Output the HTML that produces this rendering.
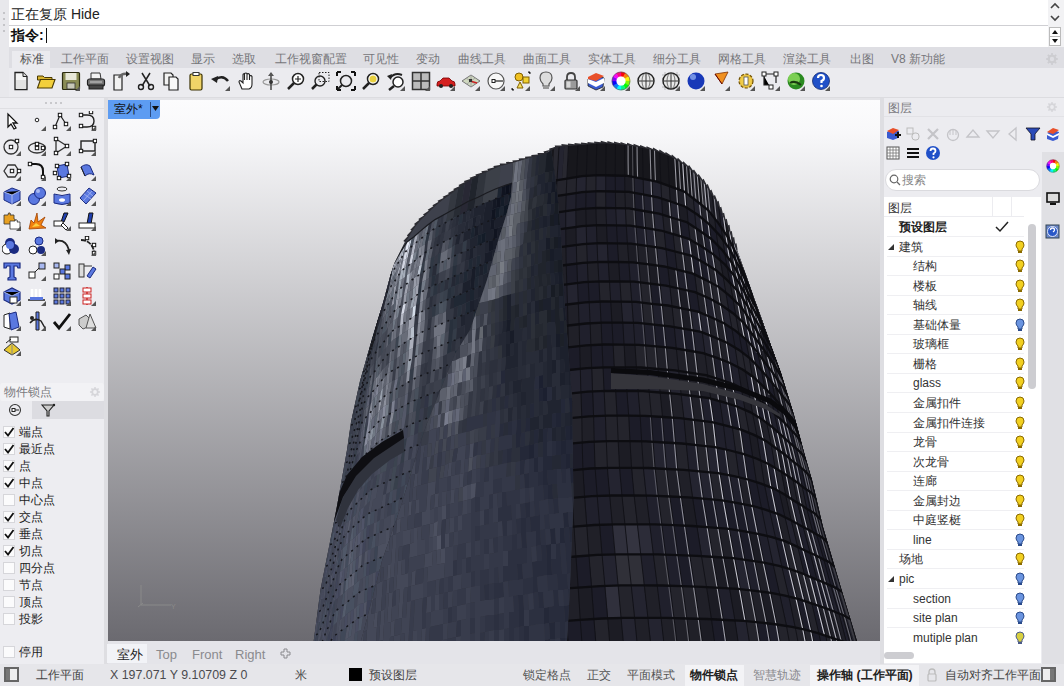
<!DOCTYPE html>
<html><head><meta charset="utf-8">
<style>
*{margin:0;padding:0;box-sizing:border-box}
html,body{width:1064px;height:686px;overflow:hidden;background:#ececf0;font-family:"Liberation Sans",sans-serif;font-size:12px;color:#222}
.a{position:absolute}
.t{position:absolute;white-space:nowrap;line-height:1}
.tab{position:absolute;top:53px;font-size:12px;color:#76767a;line-height:1;white-space:nowrap}
.st{position:absolute;top:669px;font-size:12.4px;color:#333;line-height:1;white-space:nowrap}
.lt{position:absolute;font-size:12px;color:#333;line-height:1;white-space:nowrap}
.sn{position:absolute;left:19px;font-size:12px;line-height:1;color:#222;white-space:nowrap}
.cb{position:absolute;left:3px;width:12px;height:12px;background:#fbfbfc;border:1px solid #d6d6da}
</style></head><body>

<div class="a" style="left:0;top:0;width:9px;height:98px;background:#e8e8ec"></div>
<div class="a" style="left:3px;top:12px;width:2px;height:2px;background:#c4c4c8"></div>
<div class="a" style="left:3px;top:18px;width:2px;height:2px;background:#c4c4c8"></div>
<div class="a" style="left:3px;top:24px;width:2px;height:2px;background:#c4c4c8"></div>
<div class="a" style="left:3px;top:30px;width:2px;height:2px;background:#c4c4c8"></div>
<div class="a" style="left:3px;top:66px;width:2px;height:2px;background:#c4c4c8"></div>
<div class="a" style="left:3px;top:72px;width:2px;height:2px;background:#c4c4c8"></div>
<div class="a" style="left:3px;top:78px;width:2px;height:2px;background:#c4c4c8"></div>
<div class="a" style="left:3px;top:84px;width:2px;height:2px;background:#c4c4c8"></div>
<div class="a" style="left:9px;top:0;width:1039px;height:25px;background:#fff"></div>
<div class="a" style="left:9px;top:25px;width:1039px;height:1px;background:#cfcfd3"></div>
<div class="a" style="left:9px;top:26px;width:1039px;height:21px;background:#fff"></div>
<div class="t" style="left:11px;top:7px;font-size:14px;color:#222">正在复原 Hide</div>
<div class="t" style="left:11px;top:28px;font-size:14px;font-weight:bold;color:#111">指令:</div>
<div class="a" style="left:46px;top:28px;width:1px;height:15px;background:#111"></div>
<div class="a" style="left:1048px;top:0;width:16px;height:47px;background:#f2f2f4"></div>
<svg class="a" style="left:1048px;top:0" width="16" height="47" viewBox="0 0 16 47"><path d="M3 8L7 4L11 8M3 16L7 20L11 16" stroke="#444" stroke-width="1.6" fill="none"/><rect x="1.5" y="27.5" width="11" height="9" fill="#fff" stroke="#bbb"/><rect x="1.5" y="36.5" width="11" height="9" fill="#fff" stroke="#bbb"/><path d="M4 34L7 30L10 34Z" fill="#111"/><path d="M4 39L7 43L10 39Z" fill="#111"/></svg>
<div class="a" style="left:9px;top:47px;width:1055px;height:21px;background:#dedee3"></div>
<div class="a" style="left:0;top:47px;width:9px;height:51px;background:#e8e8ec"></div>
<div class="a" style="left:12px;top:51px;width:38px;height:17px;background:#ebebef"></div>
<div class="tab" style="left:20px;color:#555">标准</div>
<div class="tab" style="left:61px;color:#76767a">工作平面</div>
<div class="tab" style="left:126px;color:#76767a">设置视图</div>
<div class="tab" style="left:191px;color:#76767a">显示</div>
<div class="tab" style="left:232px;color:#76767a">选取</div>
<div class="tab" style="left:275px;color:#76767a">工作视窗配置</div>
<div class="tab" style="left:363px;color:#76767a">可见性</div>
<div class="tab" style="left:416px;color:#76767a">变动</div>
<div class="tab" style="left:458px;color:#76767a">曲线工具</div>
<div class="tab" style="left:523px;color:#76767a">曲面工具</div>
<div class="tab" style="left:588px;color:#76767a">实体工具</div>
<div class="tab" style="left:653px;color:#76767a">细分工具</div>
<div class="tab" style="left:718px;color:#76767a">网格工具</div>
<div class="tab" style="left:783px;color:#76767a">渲染工具</div>
<div class="tab" style="left:850px;color:#76767a">出图</div>
<div class="tab" style="left:891px;color:#76767a">V8 新功能</div>
<svg class="a" style="left:1045px;top:52px" width="14" height="14" viewBox="0 0 14 14"><path d="M11.3 6.1L12.9 6.2L12.9 7.8L11.3 7.9L10.7 9.4L11.8 10.6L10.6 11.8L9.4 10.7L7.9 11.3L7.8 12.9L6.2 12.9L6.1 11.3L4.6 10.7L3.4 11.8L2.2 10.6L3.3 9.4L2.7 7.9L1.1 7.8L1.1 6.2L2.7 6.1L3.3 4.6L2.2 3.4L3.4 2.2L4.6 3.3L6.1 2.7L6.2 1.1L7.8 1.1L7.9 2.7L9.4 3.3L10.6 2.2L11.8 3.4L10.7 4.6ZM9.2 7A2.2 2.2 0 1 0 4.8 7A2.2 2.2 0 1 0 9.2 7Z" fill="#cdcdd1" fill-rule="evenodd"/></svg>
<div class="a" style="left:9px;top:68px;width:1055px;height:29px;background:#ebebef"></div>
<div class="a" style="left:0;top:97px;width:1064px;height:1px;background:#dcdce0"></div>
<svg class="a" style="left:11px;top:71px" width="20" height="20" viewBox="0 0 20 20"><path d="M4 1.5H12L16 5.5V18.5H4Z" fill="#f4f4f4" stroke="#222" stroke-width="1.3"/><path d="M12 1.5V5.5H16" fill="#ddd" stroke="#222" stroke-width="1"/><path d="M5 9H15V18H5Z" fill="#e2e2e2"/></svg>
<svg class="a" style="left:36px;top:71px" width="20" height="20" viewBox="0 0 20 20"><path d="M1.5 5H7L8.5 6.5H16V9H1.5Z" fill="#d9b530" stroke="#4a3a00" stroke-width="1"/><path d="M1.5 17L4.5 8.5H19L16 17Z" fill="#f2cf3c" stroke="#4a3a00" stroke-width="1.1"/></svg>
<svg class="a" style="left:61px;top:71px" width="20" height="20" viewBox="0 0 20 20"><rect x="1.5" y="1.5" width="17" height="17" rx="1" fill="#8a8c55" stroke="#2a2a10" stroke-width="1.2"/><rect x="4.5" y="2" width="11" height="7" fill="#e8e8d8"/><rect x="6" y="12" width="8" height="6" fill="#c8c8b8" stroke="#333" stroke-width=".8"/><path d="M19 15L19 20L14 20Z" fill="#555"/></svg>
<svg class="a" style="left:86px;top:71px" width="20" height="20" viewBox="0 0 20 20"><path d="M5 2H14L15 8H5Z" fill="#f4f4f4" stroke="#333" stroke-width="1"/><rect x="1.5" y="8" width="17" height="7" rx="2" fill="#777" stroke="#222" stroke-width="1.2"/><rect x="3" y="14" width="14" height="4" fill="#444" stroke="#222" stroke-width="1"/><path d="M4 11H16" stroke="#ccc" stroke-width="1"/></svg>
<svg class="a" style="left:111px;top:71px" width="20" height="20" viewBox="0 0 20 20"><path d="M3 4H11V19H3Z" fill="#f2f2f2" stroke="#222" stroke-width="1.2"/><path d="M8 7Q10 2 17 3" stroke="#666" stroke-width="2.5" fill="none"/><path d="M15 0L19 3L15 6Z" fill="#222"/></svg>
<svg class="a" style="left:136px;top:71px" width="20" height="20" viewBox="0 0 20 20"><path d="M6 2L14 15M14 2L6 15" stroke="#222" stroke-width="1.5"/><circle cx="5" cy="16" r="2.5" fill="none" stroke="#222" stroke-width="1.4"/><circle cx="15" cy="16" r="2.5" fill="none" stroke="#222" stroke-width="1.4"/></svg>
<svg class="a" style="left:161px;top:71px" width="20" height="20" viewBox="0 0 20 20"><path d="M3 2H10L12 4V14H3Z" fill="#f2f2f2" stroke="#222" stroke-width="1.2"/><path d="M8 6H15L17 8V19H8Z" fill="#f8f8f8" stroke="#222" stroke-width="1.2"/></svg>
<svg class="a" style="left:186px;top:71px" width="20" height="20" viewBox="0 0 20 20"><rect x="4" y="3" width="12" height="16" rx="1.5" fill="#f0d468" stroke="#3a3000" stroke-width="1.2"/><rect x="7" y="1.5" width="6" height="3" fill="#fff" stroke="#333" stroke-width="1"/></svg>
<svg class="a" style="left:211px;top:71px" width="20" height="20" viewBox="0 0 20 20"><path d="M4 9Q11 3 17 10" stroke="#222" stroke-width="2.6" fill="none"/><path d="M0 8L7 5L6 12Z" fill="#222"/><path d="M19 15L19 20L14 20Z" fill="#555"/></svg>
<svg class="a" style="left:236px;top:71px" width="20" height="20" viewBox="0 0 20 20"><path d="M6 18L3 11Q3 9 5 10L7 12V4Q7 2.5 8.5 3V9V2.5Q10 1.5 11 2.5V9V3Q12.5 2 13.5 3.5V9V5Q15 4 16 5.5V13Q16 17 13 18Z" fill="#fff" stroke="#222" stroke-width="1.1"/></svg>
<svg class="a" style="left:261px;top:71px" width="20" height="20" viewBox="0 0 20 20"><ellipse cx="10" cy="11" rx="8" ry="3" fill="none" stroke="#999" stroke-width="1.2"/><path d="M10 2V19" stroke="#444" stroke-width="1.5"/><path d="M7 5L10 1L13 5Z" fill="#555"/><circle cx="10" cy="11" r="2" fill="#333"/></svg>
<svg class="a" style="left:286px;top:71px" width="20" height="20" viewBox="0 0 20 20"><circle cx="12" cy="8" r="5.5" fill="#fff" stroke="#222" stroke-width="1.5"/><path d="M8 12L2 18" stroke="#222" stroke-width="2.5"/><path d="M12 5V11M9 8H15" stroke="#222" stroke-width="1.2"/></svg>
<svg class="a" style="left:311px;top:71px" width="20" height="20" viewBox="0 0 20 20"><rect x="8" y="1.5" width="10" height="9" fill="none" stroke="#222" stroke-dasharray="1.5 1.5"/><circle cx="9" cy="10" r="5" fill="none" stroke="#222" stroke-width="1.4"/><path d="M5.5 13.5L1 18" stroke="#222" stroke-width="2.5"/></svg>
<svg class="a" style="left:336px;top:71px" width="20" height="20" viewBox="0 0 20 20"><circle cx="10" cy="10" r="5.5" fill="none" stroke="#222" stroke-width="1.5"/><path d="M1 1H5M1 1V5M19 1H15M19 1V5M1 19H5M1 19V15M19 19H15M19 19V15" stroke="#111" stroke-width="2"/><path d="M6 14L2 18" stroke="#222" stroke-width="2"/></svg>
<svg class="a" style="left:361px;top:71px" width="20" height="20" viewBox="0 0 20 20"><circle cx="12" cy="8" r="5.5" fill="#fff" stroke="#222" stroke-width="1.5"/><path d="M8 12L2 18" stroke="#222" stroke-width="2.5"/><circle cx="12" cy="8" r="3.5" fill="#e8d040"/></svg>
<svg class="a" style="left:386px;top:71px" width="20" height="20" viewBox="0 0 20 20"><circle cx="12" cy="11" r="5" fill="#fff" stroke="#222" stroke-width="1.5"/><path d="M8 15L3 19" stroke="#222" stroke-width="2.5"/><path d="M4 7Q9 1 16 4" stroke="#222" stroke-width="2" fill="none"/><path d="M1 5L6 3L5 9Z" fill="#222"/><path d="M19 15L19 20L14 20Z" fill="#555"/></svg>
<svg class="a" style="left:411px;top:71px" width="20" height="20" viewBox="0 0 20 20"><rect x="1.5" y="1.5" width="17" height="17" fill="#bbb" stroke="#333" stroke-width="1.5"/><path d="M10 1.5V18.5M1.5 10H18.5" stroke="#333" stroke-width="1.5"/><path d="M19 15L19 20L14 20Z" fill="#555"/></svg>
<svg class="a" style="left:436px;top:71px" width="20" height="20" viewBox="0 0 20 20"><path d="M1 13Q1 10 4 10L7 7H13L16 10Q19 10 19 13V15H1Z" fill="#d42020" stroke="#700" stroke-width=".8"/><circle cx="5" cy="15" r="2" fill="#222"/><circle cx="15" cy="15" r="2" fill="#222"/><path d="M19 15L19 20L14 20Z" fill="#555"/></svg>
<svg class="a" style="left:461px;top:71px" width="20" height="20" viewBox="0 0 20 20"><path d="M1 10L10 4L19 10L10 16Z" fill="#cfd8c0" stroke="#777" stroke-width="1"/><path d="M5 7L14 13M10 4L10 16M14 7L6 13" stroke="#999" stroke-width=".8"/><path d="M9 10L16 12" stroke="#c22" stroke-width="1.5"/><rect x="8" y="8" width="3" height="3" fill="#333"/><path d="M19 15L19 20L14 20Z" fill="#555"/></svg>
<svg class="a" style="left:486px;top:71px" width="20" height="20" viewBox="0 0 20 20"><circle cx="10" cy="10" r="8" fill="#f8f8f8" stroke="#555" stroke-width="1.2"/><rect x="6" y="8.5" width="3" height="3" fill="#fff" stroke="#222"/><path d="M9 10H17" stroke="#222" stroke-width="1.2"/><path d="M19 15L19 20L14 20Z" fill="#555"/></svg>
<svg class="a" style="left:511px;top:71px" width="20" height="20" viewBox="0 0 20 20"><circle cx="8" cy="6" r="4" fill="#f0c020" stroke="#806000"/><rect x="12" y="6" width="6" height="6" fill="#f0d030" stroke="#806000"/><path d="M9 11L12 17H6Z" fill="#f8e060" stroke="#806000"/><path d="M17 1H19V3M1 17V19H3" stroke="#222"/><path d="M19 15L19 20L14 20Z" fill="#555"/></svg>
<svg class="a" style="left:536px;top:71px" width="20" height="20" viewBox="0 0 20 20"><path d="M10 1Q16 1 16 7Q16 10 13 13V15H7V13Q4 10 4 7Q4 1 10 1Z" fill="#ddd" stroke="#555" stroke-width="1.2"/><rect x="7" y="15" width="6" height="3" fill="#999"/><path d="M19 15L19 20L14 20Z" fill="#555"/></svg>
<svg class="a" style="left:561px;top:71px" width="20" height="20" viewBox="0 0 20 20"><path d="M6 9V6Q6 2 10 2Q14 2 14 6V9" fill="none" stroke="#444" stroke-width="1.8"/><rect x="4" y="9" width="12" height="9" rx="1" fill="#9a9a9a" stroke="#333" stroke-width="1.2"/><rect x="5.5" y="10.5" width="4" height="6" fill="#d8d8d8"/><path d="M19 15L19 20L14 20Z" fill="#555"/></svg>
<svg class="a" style="left:586px;top:71px" width="20" height="20" viewBox="0 0 20 20"><path d="M2 8L10 4L18 7L17 16L10 19L2 15Z" fill="#3a5bd0" stroke="#222" stroke-width=".8"/><path d="M2 8L10 11L18 7V12L10 16L2 12Z" fill="#fff"/><path d="M2 6L10 2L18 5L10 10L2 8Z" fill="#e8502a"/><path d="M19 15L19 20L14 20Z" fill="#555"/></svg>
<svg class="a" style="left:611px;top:71px" width="20" height="20" viewBox="0 0 20 20"><path d="M10.00 1.00A9 9 0 0 1 14.50 2.21L12.25 6.10A4.5 4.5 0 0 0 10.00 5.50Z" fill="hsl(0,95%,50%)" stroke="hsl(0,95%,50%)" stroke-width=".4"/><path d="M14.50 2.21A9 9 0 0 1 17.79 5.50L13.90 7.75A4.5 4.5 0 0 0 12.25 6.10Z" fill="hsl(30,95%,50%)" stroke="hsl(30,95%,50%)" stroke-width=".4"/><path d="M17.79 5.50A9 9 0 0 1 19.00 10.00L14.50 10.00A4.5 4.5 0 0 0 13.90 7.75Z" fill="hsl(60,95%,50%)" stroke="hsl(60,95%,50%)" stroke-width=".4"/><path d="M19.00 10.00A9 9 0 0 1 17.79 14.50L13.90 12.25A4.5 4.5 0 0 0 14.50 10.00Z" fill="hsl(90,95%,50%)" stroke="hsl(90,95%,50%)" stroke-width=".4"/><path d="M17.79 14.50A9 9 0 0 1 14.50 17.79L12.25 13.90A4.5 4.5 0 0 0 13.90 12.25Z" fill="hsl(120,95%,50%)" stroke="hsl(120,95%,50%)" stroke-width=".4"/><path d="M14.50 17.79A9 9 0 0 1 10.00 19.00L10.00 14.50A4.5 4.5 0 0 0 12.25 13.90Z" fill="hsl(150,95%,50%)" stroke="hsl(150,95%,50%)" stroke-width=".4"/><path d="M10.00 19.00A9 9 0 0 1 5.50 17.79L7.75 13.90A4.5 4.5 0 0 0 10.00 14.50Z" fill="hsl(180,95%,50%)" stroke="hsl(180,95%,50%)" stroke-width=".4"/><path d="M5.50 17.79A9 9 0 0 1 2.21 14.50L6.10 12.25A4.5 4.5 0 0 0 7.75 13.90Z" fill="hsl(210,95%,50%)" stroke="hsl(210,95%,50%)" stroke-width=".4"/><path d="M2.21 14.50A9 9 0 0 1 1.00 10.00L5.50 10.00A4.5 4.5 0 0 0 6.10 12.25Z" fill="hsl(240,95%,50%)" stroke="hsl(240,95%,50%)" stroke-width=".4"/><path d="M1.00 10.00A9 9 0 0 1 2.21 5.50L6.10 7.75A4.5 4.5 0 0 0 5.50 10.00Z" fill="hsl(270,95%,50%)" stroke="hsl(270,95%,50%)" stroke-width=".4"/><path d="M2.21 5.50A9 9 0 0 1 5.50 2.21L7.75 6.10A4.5 4.5 0 0 0 6.10 7.75Z" fill="hsl(300,95%,50%)" stroke="hsl(300,95%,50%)" stroke-width=".4"/><path d="M5.50 2.21A9 9 0 0 1 10.00 1.00L10.00 5.50A4.5 4.5 0 0 0 7.75 6.10Z" fill="hsl(330,95%,50%)" stroke="hsl(330,95%,50%)" stroke-width=".4"/><circle cx="10" cy="10" r="4.5" fill="#fff"/><circle cx="10" cy="10" r="9" fill="none" stroke="#555" stroke-width=".6"/><path d="M19 15L19 20L14 20Z" fill="#555"/></svg>
<svg class="a" style="left:636px;top:71px" width="20" height="20" viewBox="0 0 20 20"><circle cx="10" cy="10" r="8" fill="#e8e8e8" stroke="#222" stroke-width="1.4"/><path d="M2 10H18M10 2V18" stroke="#333" stroke-width="1"/><ellipse cx="10" cy="10" rx="4" ry="8" fill="none" stroke="#555" stroke-width=".8"/></svg>
<svg class="a" style="left:661px;top:71px" width="20" height="20" viewBox="0 0 20 20"><path d="M1 4H19M1 8H19M1 12H19M1 16H19M4 1V19M8 1V19M12 1V19M16 1V19" stroke="#999" stroke-width=".6"/><circle cx="10" cy="10" r="8" fill="#e8e8e8" stroke="#222" stroke-width="1.4"/><path d="M2 10H18M10 2V18" stroke="#333" stroke-width="1"/><ellipse cx="10" cy="10" rx="4" ry="8" fill="none" stroke="#555" stroke-width=".8"/><path d="M19 15L19 20L14 20Z" fill="#555"/></svg>
<svg class="a" style="left:686px;top:71px" width="20" height="20" viewBox="0 0 20 20"><circle cx="10" cy="10" r="8.5" fill="#1838b8"/><circle cx="7" cy="6" r="3" fill="#8aa8f0" opacity=".8"/><path d="M19 15L19 20L14 20Z" fill="#555"/></svg>
<svg class="a" style="left:711px;top:71px" width="20" height="20" viewBox="0 0 20 20"><path d="M4 3L17 1L11 13Z" fill="#f09020" stroke="#803000" stroke-width=".8"/><path d="M4 3L11 13" stroke="#600" stroke-width="1"/><path d="M19 15L19 20L14 20Z" fill="#555"/></svg>
<svg class="a" style="left:736px;top:71px" width="20" height="20" viewBox="0 0 20 20"><circle cx="10" cy="10" r="7" fill="#e8c040" stroke="#705000" stroke-width="1.2" stroke-dasharray="3 1.6"/><circle cx="10" cy="10" r="5.5" fill="#f0cc48"/><rect x="8" y="6" width="4" height="8" fill="#fff" stroke="#555" stroke-width=".8"/><path d="M19 15L19 20L14 20Z" fill="#555"/></svg>
<svg class="a" style="left:761px;top:71px" width="20" height="20" viewBox="0 0 20 20"><rect x="1" y="1" width="4" height="4" fill="#fff" stroke="#222"/><rect x="13" y="1" width="4" height="4" fill="#fff" stroke="#222"/><rect x="8" y="14" width="4" height="4" fill="#fff" stroke="#222"/><path d="M3 5V14H8M5 3H13M15 5V12" stroke="#222" stroke-width="1.2"/><path d="M19 15L19 20L14 20Z" fill="#555"/></svg>
<svg class="a" style="left:786px;top:71px" width="20" height="20" viewBox="0 0 20 20"><circle cx="10" cy="10" r="8.5" fill="#2a8a20"/><circle cx="8" cy="8" r="6" fill="#90e060" opacity=".8"/><path d="M4 12Q9 9 15 14" stroke="#1a3a10" stroke-width="2" fill="none"/><path d="M19 15L19 20L14 20Z" fill="#555"/></svg>
<svg class="a" style="left:811px;top:71px" width="20" height="20" viewBox="0 0 20 20"><circle cx="10" cy="10" r="8.5" fill="#2050c8" stroke="#102870" stroke-width=".8"/><path d="M7 7Q7 4 10 4Q13 4 13 7Q13 9 10.5 10V12" stroke="#fff" stroke-width="2.2" fill="none"/><circle cx="10.5" cy="15" r="1.3" fill="#fff"/><path d="M19 15L19 20L14 20Z" fill="#555"/></svg>
<div class="a" style="left:0;top:98px;width:104px;height:566px;background:#ededf1"></div>
<div class="a" style="left:104px;top:98px;width:4px;height:566px;background:#dedee2"></div>
<div class="a" style="left:45px;top:102px;width:2px;height:2px;background:#c8c8cc"></div>
<div class="a" style="left:50px;top:102px;width:2px;height:2px;background:#c8c8cc"></div>
<div class="a" style="left:55px;top:102px;width:2px;height:2px;background:#c8c8cc"></div>
<div class="a" style="left:60px;top:102px;width:2px;height:2px;background:#c8c8cc"></div>
<div class="a" style="left:0;top:108px;width:104px;height:1px;background:#dfdfe3"></div>
<svg class="a" style="left:2px;top:111px" width="20" height="20" viewBox="0 0 20 20"><path d="M6 3L6 16L9 13L12 18L14 17L11 12L15 12Z" fill="#fff" stroke="#111" stroke-width="1.3"/></svg>
<svg class="a" style="left:27px;top:111px" width="20" height="20" viewBox="0 0 20 20"><circle cx="10" cy="9" r="1.8" fill="#fff" stroke="#222" stroke-width="1"/><path d="M19 15L19 20L14 20Z" fill="#555"/></svg>
<svg class="a" style="left:52px;top:111px" width="20" height="20" viewBox="0 0 20 20"><path d="M3 16L8 4L14 13" fill="none" stroke="#222" stroke-width="1.2"/><rect x="1.3" y="14.3" width="3.4" height="3.4" fill="#fff" stroke="#111" stroke-width="1"/><rect x="6.3" y="2.3" width="3.4" height="3.4" fill="#fff" stroke="#111" stroke-width="1"/><rect x="12.3" y="11.3" width="3.4" height="3.4" fill="#fff" stroke="#111" stroke-width="1"/><path d="M19 15L19 20L14 20Z" fill="#555"/></svg>
<svg class="a" style="left:77px;top:111px" width="20" height="20" viewBox="0 0 20 20"><path d="M4 4H10Q17 4 17 10Q17 16 10 16H4" fill="none" stroke="#222" stroke-width="1.4"/><rect x="2.3" y="2.3" width="3.4" height="3.4" fill="#fff" stroke="#111" stroke-width="1"/><rect x="12.3" y="-0.7" width="3.4" height="3.4" fill="#fff" stroke="#111" stroke-width="1"/><rect x="2.3" y="13.3" width="3.4" height="3.4" fill="#fff" stroke="#111" stroke-width="1"/><rect x="15.3" y="15.3" width="3.4" height="3.4" fill="#fff" stroke="#111" stroke-width="1"/><path d="M19 15L19 20L14 20Z" fill="#555"/></svg>
<svg class="a" style="left:2px;top:136px" width="20" height="20" viewBox="0 0 20 20"><circle cx="9" cy="11" r="7" fill="none" stroke="#333" stroke-width="1.3"/><rect x="7.3" y="9.3" width="3.4" height="3.4" fill="#fff" stroke="#111" stroke-width="1"/><rect x="13.3" y="3.3" width="3.4" height="3.4" fill="#fff" stroke="#111" stroke-width="1"/><path d="M19 15L19 20L14 20Z" fill="#555"/></svg>
<svg class="a" style="left:27px;top:136px" width="20" height="20" viewBox="0 0 20 20"><ellipse cx="10" cy="12" rx="8.5" ry="5" fill="none" stroke="#333" stroke-width="1.3"/><rect x="8.3" y="6.3" width="3.4" height="3.4" fill="#fff" stroke="#111" stroke-width="1"/><rect x="8.3" y="10.3" width="3.4" height="3.4" fill="#fff" stroke="#111" stroke-width="1"/><rect x="14.3" y="10.3" width="3.4" height="3.4" fill="#fff" stroke="#111" stroke-width="1"/><path d="M19 15L19 20L14 20Z" fill="#555"/></svg>
<svg class="a" style="left:52px;top:136px" width="20" height="20" viewBox="0 0 20 20"><path d="M4 3L15 10L4 17Z" fill="none" stroke="#333" stroke-width="1.3"/><rect x="2.3" y="1.3" width="3.4" height="3.4" fill="#fff" stroke="#111" stroke-width="1"/><rect x="13.3" y="8.3" width="3.4" height="3.4" fill="#fff" stroke="#111" stroke-width="1"/><rect x="2.3" y="15.3" width="3.4" height="3.4" fill="#fff" stroke="#111" stroke-width="1"/><path d="M19 15L19 20L14 20Z" fill="#555"/></svg>
<svg class="a" style="left:77px;top:136px" width="20" height="20" viewBox="0 0 20 20"><rect x="4" y="5" width="14" height="10" fill="none" stroke="#222" stroke-width="1.4"/><rect x="2.3" y="13.3" width="3.4" height="3.4" fill="#fff" stroke="#111" stroke-width="1"/><rect x="16.3" y="3.3" width="3.4" height="3.4" fill="#fff" stroke="#111" stroke-width="1"/><path d="M19 15L19 20L14 20Z" fill="#555"/></svg>
<svg class="a" style="left:2px;top:161px" width="20" height="20" viewBox="0 0 20 20"><path d="M2 10L6 4H13L17 10L13 16H6Z" fill="none" stroke="#333" stroke-width="1.3"/><rect x="8.3" y="8.3" width="3.4" height="3.4" fill="#fff" stroke="#111" stroke-width="1"/><rect x="15.3" y="8.3" width="3.4" height="3.4" fill="#fff" stroke="#111" stroke-width="1"/><path d="M19 15L19 20L14 20Z" fill="#555"/></svg>
<svg class="a" style="left:27px;top:161px" width="20" height="20" viewBox="0 0 20 20"><path d="M3 3H9Q16 3 16 10V16" fill="none" stroke="#111" stroke-width="2"/><rect x="1.3" y="1.3" width="3.4" height="3.4" fill="#fff" stroke="#111" stroke-width="1"/><rect x="14.3" y="14.3" width="3.4" height="3.4" fill="#fff" stroke="#111" stroke-width="1"/><path d="M19 15L19 20L14 20Z" fill="#555"/></svg>
<svg class="a" style="left:52px;top:161px" width="20" height="20" viewBox="0 0 20 20"><path d="M5 5L15 3L17 15L7 17Z" fill="#5a78e0" stroke="#1a2a80"/><rect x="3.3" y="3.3" width="3.4" height="3.4" fill="#fff" stroke="#111" stroke-width="1"/><rect x="13.3" y="1.3" width="3.4" height="3.4" fill="#fff" stroke="#111" stroke-width="1"/><rect x="15.3" y="13.3" width="3.4" height="3.4" fill="#fff" stroke="#111" stroke-width="1"/><rect x="5.3" y="15.3" width="3.4" height="3.4" fill="#fff" stroke="#111" stroke-width="1"/><rect x="1.3" y="10.3" width="3.4" height="3.4" fill="#fff" stroke="#111" stroke-width="1"/><path d="M19 15L19 20L14 20Z" fill="#555"/></svg>
<svg class="a" style="left:77px;top:161px" width="20" height="20" viewBox="0 0 20 20"><path d="M4 6Q9 2 13 5L17 14Q12 11 8 15Z" fill="#5a78e0" stroke="#1a2a80"/><path d="M4 6L8 15" stroke="#222"/><path d="M19 15L19 20L14 20Z" fill="#555"/></svg>
<svg class="a" style="left:2px;top:186px" width="20" height="20" viewBox="0 0 20 20"><path d="M2 6L10 2L18 5V14L10 18L2 14Z" fill="#5a78e0" stroke="#1a2a80" stroke-width="1"/><path d="M2 6L10 9L18 5M10 9V18" stroke="#a8b8f0" stroke-width="1"/><path d="M19 15L19 20L14 20Z" fill="#555"/></svg>
<svg class="a" style="left:27px;top:186px" width="20" height="20" viewBox="0 0 20 20"><circle cx="7" cy="13" r="5.5" fill="#5a78e0" stroke="#1a2a80"/><circle cx="13" cy="7" r="5.5" fill="#5a78e0" stroke="#1a2a80"/><circle cx="11" cy="5" r="2" fill="#a8b8f0"/><path d="M19 15L19 20L14 20Z" fill="#555"/></svg>
<svg class="a" style="left:52px;top:186px" width="20" height="20" viewBox="0 0 20 20"><ellipse cx="10" cy="3" rx="5" ry="2" fill="none" stroke="#333"/><path d="M2 8Q10 11 18 8V17Q10 20 2 17Z" fill="#5a78e0" stroke="#1a2a80"/><ellipse cx="10" cy="14" rx="3" ry="1.8" fill="#fff"/><path d="M19 15L19 20L14 20Z" fill="#555"/></svg>
<svg class="a" style="left:77px;top:186px" width="20" height="20" viewBox="0 0 20 20"><path d="M3 12L12 2L19 7L9 18Z" fill="#5a78e0" stroke="#1a2a80"/><path d="M7 8L14 13M10 5L16 10M6 15L15 5" stroke="#a8b8f0" stroke-width=".8"/><path d="M19 15L19 20L14 20Z" fill="#555"/></svg>
<svg class="a" style="left:2px;top:211px" width="20" height="20" viewBox="0 0 20 20"><path d="M2 4H6Q6 1 8 2Q9 3 8 4H12V8Q14 8 13 10Q12 11 12 10V13H2Z" fill="#e8a020" stroke="#333" stroke-width=".8"/><path d="M8 10H13Q13 8 15 9Q16 10 15 11H18V18H8Z" fill="#fff" stroke="#333" stroke-width=".8"/><path d="M19 15L19 20L14 20Z" fill="#555"/></svg>
<svg class="a" style="left:27px;top:211px" width="20" height="20" viewBox="0 0 20 20"><path d="M2 18L4 9L7 12L10 2L11 11L18 6L14 14L19 17Z" fill="#f08010" stroke="#a04000" stroke-width=".8"/><path d="M5 16L9 12L13 15Z" fill="#fcd040"/></svg>
<svg class="a" style="left:52px;top:211px" width="20" height="20" viewBox="0 0 20 20"><path d="M12 2H16L12 11H9Z" fill="#2040b0" stroke="#111"/><rect x="2" y="10" width="9" height="5" fill="#fff" stroke="#222"/><path d="M11 12L16 17L14 19L9 14Z" fill="#fff" stroke="#222"/><path d="M19 15L19 20L14 20Z" fill="#555"/></svg>
<svg class="a" style="left:77px;top:211px" width="20" height="20" viewBox="0 0 20 20"><path d="M12 2H16L14 13H10Z" fill="#2040b0" stroke="#111"/><rect x="2" y="12" width="16" height="5" fill="#fff" stroke="#222"/><path d="M19 15L19 20L14 20Z" fill="#555"/></svg>
<svg class="a" style="left:2px;top:236px" width="20" height="20" viewBox="0 0 20 20"><circle cx="8" cy="7" r="5" fill="#1a2a80"/><circle cx="5" cy="13" r="5" fill="#fff" stroke="#111"/><circle cx="12" cy="13" r="5" fill="#1a2a80"/><circle cx="8" cy="9" r="4" fill="#5a78e0"/></svg>
<svg class="a" style="left:27px;top:236px" width="20" height="20" viewBox="0 0 20 20"><circle cx="12" cy="5" r="4" fill="#5a78e0" stroke="#1a2a80"/><circle cx="6" cy="14" r="4" fill="#fff" stroke="#222"/><circle cx="14" cy="14" r="4" fill="#1a2a80"/><path d="M19 15L19 20L14 20Z" fill="#555"/></svg>
<svg class="a" style="left:52px;top:236px" width="20" height="20" viewBox="0 0 20 20"><path d="M4 5Q14 3 17 14" fill="none" stroke="#222" stroke-width="1.8"/><path d="M3 2V8L7 5Z" fill="#222"/><path d="M14 14L19 13L17 19Z" fill="#222"/></svg>
<svg class="a" style="left:77px;top:236px" width="20" height="20" viewBox="0 0 20 20"><path d="M4 4Q14 4 17 15" fill="none" stroke="#222" stroke-width="1.8" stroke-dasharray="5 1"/><rect x="8.3" y="0.30000000000000004" width="3.4" height="3.4" fill="#fff" stroke="#111" stroke-width="1"/><rect x="15.3" y="7.3" width="3.4" height="3.4" fill="#fff" stroke="#111" stroke-width="1"/><rect x="15.3" y="15.3" width="3.4" height="3.4" fill="#fff" stroke="#111" stroke-width="1"/><path d="M19 15L19 20L14 20Z" fill="#555"/></svg>
<svg class="a" style="left:2px;top:261px" width="20" height="20" viewBox="0 0 20 20"><path d="M2 2H18V7H16L15 5H12V16L14 17V19H6V17L8 16V5H5L4 7H2Z" fill="#5a78e0" stroke="#1a2a80" stroke-width="1.2"/></svg>
<svg class="a" style="left:27px;top:261px" width="20" height="20" viewBox="0 0 20 20"><rect x="2" y="11" width="6" height="6" fill="#fff" stroke="#222"/><rect x="12" y="2" width="6" height="6" fill="#a8b8f0" stroke="#222"/><path d="M8 11L12 7" stroke="#222"/><path d="M19 15L19 20L14 20Z" fill="#555"/></svg>
<svg class="a" style="left:52px;top:261px" width="20" height="20" viewBox="0 0 20 20"><rect x="2" y="2" width="5" height="5" fill="#a8b8f0" stroke="#222"/><rect x="13" y="4" width="5" height="5" fill="#5a78e0" stroke="#222"/><rect x="8" y="8" width="5" height="5" fill="#5a78e0" stroke="#222"/><rect x="2" y="13" width="5" height="5" fill="#fff" stroke="#222"/><rect x="13" y="13" width="5" height="5" fill="#5a78e0" stroke="#222"/></svg>
<svg class="a" style="left:77px;top:261px" width="20" height="20" viewBox="0 0 20 20"><rect x="2" y="3" width="5" height="13" fill="#ddd" stroke="#333"/><path d="M10 15L16 6L19 8L13 17Z" fill="#5a78e0" stroke="#1a2a80"/><path d="M7 5L15 5" stroke="#333"/></svg>
<svg class="a" style="left:2px;top:286px" width="20" height="20" viewBox="0 0 20 20"><path d="M2 6L10 2L18 6V14L10 18L2 14Z" fill="#5a78e0" stroke="#1a2a80" stroke-width="1.2"/><path d="M2 6L10 10L18 6" stroke="#a8b8f0"/><rect x="8" y="11" width="7" height="6" fill="#fff" stroke="#333"/><path d="M19 15L19 20L14 20Z" fill="#555"/></svg>
<svg class="a" style="left:27px;top:286px" width="20" height="20" viewBox="0 0 20 20"><path d="M5 3V12M9 3V12M13 3V12" stroke="#fff" stroke-width="2.5"/><path d="M1 14H18" stroke="#222" stroke-width="1.5"/><path d="M3 11H16V14H3Z" fill="#5a78e0"/><path d="M19 15L19 20L14 20Z" fill="#555"/></svg>
<svg class="a" style="left:52px;top:286px" width="20" height="20" viewBox="0 0 20 20"><rect x="2" y="2" width="4" height="4" fill="#5a78e0" stroke="#223"/><rect x="2" y="8" width="4" height="4" fill="#5a78e0" stroke="#223"/><rect x="2" y="14" width="4" height="4" fill="#5a78e0" stroke="#223"/><rect x="8" y="2" width="4" height="4" fill="#5a78e0" stroke="#223"/><rect x="8" y="8" width="4" height="4" fill="#5a78e0" stroke="#223"/><rect x="8" y="14" width="4" height="4" fill="#5a78e0" stroke="#223"/><rect x="14" y="2" width="4" height="4" fill="#5a78e0" stroke="#223"/><rect x="14" y="8" width="4" height="4" fill="#5a78e0" stroke="#223"/><rect x="14" y="14" width="4" height="4" fill="#5a78e0" stroke="#223"/><path d="M19 15L19 20L14 20Z" fill="#555"/></svg>
<svg class="a" style="left:77px;top:286px" width="20" height="20" viewBox="0 0 20 20"><path d="M10 1V19" stroke="#c22" stroke-width="1.4"/><rect x="6" y="2" width="8" height="4" fill="#fff" stroke="#c22"/><rect x="6" y="8" width="8" height="4" fill="#fff" stroke="#c22"/><rect x="6" y="14" width="8" height="4" fill="#fff" stroke="#c22"/><path d="M19 15L19 20L14 20Z" fill="#555"/></svg>
<svg class="a" style="left:2px;top:311px" width="20" height="20" viewBox="0 0 20 20"><path d="M2 4L8 2V18L2 16Z" fill="#fff" stroke="#222"/><path d="M7 3L14 1L17 16L9 19Z" fill="#5a78e0" stroke="#1a2a80"/><path d="M19 15L19 20L14 20Z" fill="#555"/></svg>
<svg class="a" style="left:27px;top:311px" width="20" height="20" viewBox="0 0 20 20"><path d="M9 1H12V19H9Z" fill="#5a78e0" stroke="#222"/><circle cx="5" cy="7" r="2" fill="#222"/><path d="M3 12Q8 6 14 10L18 17" fill="none" stroke="#222" stroke-width="1.5"/><path d="M19 15L19 20L14 20Z" fill="#555"/></svg>
<svg class="a" style="left:52px;top:311px" width="20" height="20" viewBox="0 0 20 20"><path d="M2 11L7 17L18 3" fill="none" stroke="#111" stroke-width="2.8"/><path d="M19 15L19 20L14 20Z" fill="#555"/></svg>
<svg class="a" style="left:77px;top:311px" width="20" height="20" viewBox="0 0 20 20"><path d="M2 8L9 4L13 8V15L6 18L2 14Z" fill="#ccc" stroke="#555"/><path d="M13 3L19 17H9Z" fill="#ddd" stroke="#555"/><path d="M19 15L19 20L14 20Z" fill="#555"/></svg>
<svg class="a" style="left:2px;top:336px" width="20" height="20" viewBox="0 0 20 20"><path d="M2 14L10 7L18 14L10 19Z" fill="#e8c830" stroke="#333"/><path d="M10 7V19" stroke="#888"/><rect x="8" y="1" width="8" height="5" fill="#fff" stroke="#222"/><path d="M4 7L9 3" stroke="#222"/><path d="M19 15L19 20L14 20Z" fill="#555"/></svg>
<div class="a" style="left:0;top:383px;width:104px;height:18px;background:#f2f2f5;border-radius:3px"></div>
<div class="t" style="left:4px;top:386px;font-size:12px;color:#7a7a7e">物件锁点</div>
<svg class="a" style="left:89px;top:386px" width="12" height="12" viewBox="0 0 14 14"><path d="M11.3 6.1L12.9 6.2L12.9 7.8L11.3 7.9L10.7 9.4L11.8 10.6L10.6 11.8L9.4 10.7L7.9 11.3L7.8 12.9L6.2 12.9L6.1 11.3L4.6 10.7L3.4 11.8L2.2 10.6L3.3 9.4L2.7 7.9L1.1 7.8L1.1 6.2L2.7 6.1L3.3 4.6L2.2 3.4L3.4 2.2L4.6 3.3L6.1 2.7L6.2 1.1L7.8 1.1L7.9 2.7L9.4 3.3L10.6 2.2L11.8 3.4L10.7 4.6ZM9.2 7A2.2 2.2 0 1 0 4.8 7A2.2 2.2 0 1 0 9.2 7Z" fill="#d6d6da" fill-rule="evenodd"/></svg>
<div class="a" style="left:0;top:401px;width:104px;height:18px;background:#dcdce1"></div>
<div class="a" style="left:0;top:401px;width:32px;height:18px;background:#ececf0"></div>
<svg class="a" style="left:8px;top:403px" width="16" height="14" viewBox="0 0 16 14"><circle cx="7" cy="7" r="5.5" fill="none" stroke="#333" stroke-width="1.1"/><rect x="4" y="5.5" width="3" height="3" fill="#fff" stroke="#222"/><path d="M7 7H11" stroke="#222"/></svg>
<svg class="a" style="left:40px;top:403px" width="16" height="15" viewBox="0 0 16 15"><path d="M2 2H14L9 8V13H7V8Z" fill="#ccc" stroke="#222" stroke-width="1.1"/><circle cx="14" cy="2" r="1.2" fill="#222"/></svg>
<div class="cb" style="top:426px"></div>
<svg class="a" style="left:3px;top:426px" width="12" height="12" viewBox="0 0 12 12"><path d="M2 6L5 9.5L10.5 2" stroke="#111" stroke-width="1.8" fill="none"/></svg>
<div class="sn" style="top:426px">端点</div>
<div class="cb" style="top:443px"></div>
<svg class="a" style="left:3px;top:443px" width="12" height="12" viewBox="0 0 12 12"><path d="M2 6L5 9.5L10.5 2" stroke="#111" stroke-width="1.8" fill="none"/></svg>
<div class="sn" style="top:443px">最近点</div>
<div class="cb" style="top:460px"></div>
<svg class="a" style="left:3px;top:460px" width="12" height="12" viewBox="0 0 12 12"><path d="M2 6L5 9.5L10.5 2" stroke="#111" stroke-width="1.8" fill="none"/></svg>
<div class="sn" style="top:460px">点</div>
<div class="cb" style="top:477px"></div>
<svg class="a" style="left:3px;top:477px" width="12" height="12" viewBox="0 0 12 12"><path d="M2 6L5 9.5L10.5 2" stroke="#111" stroke-width="1.8" fill="none"/></svg>
<div class="sn" style="top:477px">中点</div>
<div class="cb" style="top:494px"></div>
<div class="sn" style="top:494px">中心点</div>
<div class="cb" style="top:511px"></div>
<svg class="a" style="left:3px;top:511px" width="12" height="12" viewBox="0 0 12 12"><path d="M2 6L5 9.5L10.5 2" stroke="#111" stroke-width="1.8" fill="none"/></svg>
<div class="sn" style="top:511px">交点</div>
<div class="cb" style="top:528px"></div>
<svg class="a" style="left:3px;top:528px" width="12" height="12" viewBox="0 0 12 12"><path d="M2 6L5 9.5L10.5 2" stroke="#111" stroke-width="1.8" fill="none"/></svg>
<div class="sn" style="top:528px">垂点</div>
<div class="cb" style="top:545px"></div>
<svg class="a" style="left:3px;top:545px" width="12" height="12" viewBox="0 0 12 12"><path d="M2 6L5 9.5L10.5 2" stroke="#111" stroke-width="1.8" fill="none"/></svg>
<div class="sn" style="top:545px">切点</div>
<div class="cb" style="top:562px"></div>
<div class="sn" style="top:562px">四分点</div>
<div class="cb" style="top:579px"></div>
<div class="sn" style="top:579px">节点</div>
<div class="cb" style="top:596px"></div>
<div class="sn" style="top:596px">顶点</div>
<div class="cb" style="top:613px"></div>
<div class="sn" style="top:613px">投影</div>
<div class="cb" style="top:646px"></div>
<div class="sn" style="top:646px">停用</div>
<div class="a" style="left:108px;top:98px;width:772px;height:2px;background:#e4e4e8"></div>
<div class="a" style="left:108px;top:100px;width:772px;height:541px;background:linear-gradient(#fcfcfd 0%,#f8f8fa 6%,#6b6a70 100%)"></div>
<svg class="a" style="left:108px;top:100px" width="772" height="541" viewBox="108 100 772 541">
<defs>
<clipPath id="cs"><path d="M313.7 641.0L320.6 589.0L329.0 547.0L337.0 506.0L347.0 450.0L351.0 422.0L360.0 381.0L372.0 339.0L383.0 303.0L390.5 275.0L394.5 263.0L405.0 242.0L417.0 223.0L436.5 204.0L464.5 183.0L480.0 174.0L489.0 170.5L497.0 166.4L514.0 162.0L531.0 157.0L549.0 152.0L551.0 148.6L561.0 146.0L581.5 144.4L602.0 142.7L622.0 144.0L641.0 147.0L655.0 150.0L673.0 157.0L688.5 167.0L704.0 182.0L716.5 201.0L727.0 224.0L737.0 250.0L746.0 275.0L754.0 298.0L762.0 320.0L770.0 343.0L781.0 373.0L794.0 415.0L805.0 456.0L812.0 480.0L823.0 527.0L841.0 588.0L857.0 641.0L860.0 660.0L310.0 660.0Z"/></clipPath>
<clipPath id="cl"><path d="M250.0 700.0L250.0 90.0L511.0 90.0L512.0 150.0L513.0 169.0L511.0 197.0L506.0 216.0L498.0 241.0L487.0 280.0L470.0 330.0L455.0 354.0L426.0 426.0L418.0 450.0L401.0 506.0L382.0 561.0L369.0 611.0L361.0 641.0L364.0 700.0Z"/></clipPath>
<clipPath id="cr"><path d="M511.0 90.0L551.0 90.0L551.0 148.0L557.0 190.0L561.0 237.0L564.5 300.0L572.0 399.0L573.5 499.0L569.5 598.0L567.0 641.0L567.0 700.0L364.0 700.0L361.0 641.0L369.0 611.0L382.0 561.0L401.0 506.0L418.0 450.0L426.0 426.0L455.0 354.0L470.0 330.0L487.0 280.0L498.0 241.0L506.0 216.0L511.0 197.0L513.0 169.0L512.0 150.0Z"/></clipPath>
<clipPath id="cg"><path d="M551.0 90.0L900.0 90.0L900.0 700.0L567.0 700.0L567.0 641.0L569.5 598.0L573.5 499.0L572.0 399.0L564.5 300.0L561.0 237.0L557.0 190.0L551.0 148.0Z"/></clipPath>
</defs>
<g clip-path="url(#cs)">
<rect x="250" y="100" width="650" height="560" fill="#2a2a30"/>
<g clip-path="url(#cg)">
<rect x="540" y="100" width="360" height="560" fill="#17171c"/>
<path fill="#24242c" d="M557 180L567 179L566 195L556 196ZM567 179L577 177L576 193L566 195ZM586 176L596 175L596 191L586 192ZM661 183L669 186L670 201L662 198ZM686 192L693 198L695 213L687 207ZM701 204L708 210L709 224L702 218ZM727 235L733 245L735 256L729 248ZM743 270L747 278L749 288L745 280ZM596 191L606 191L606 208L596 208ZM757 305L760 313L763 322L759 315ZM768 338L769 339L771 347L771 346ZM625 208L635 209L636 227L626 226ZM644 211L654 213L655 230L646 228ZM688 223L696 228L698 244L690 239ZM731 261L737 269L739 283L733 275ZM765 328L767 332L771 342L768 337ZM771 346L771 347L775 355L774 355ZM655 230L664 231L666 249L657 247ZM673 234L682 237L684 254L675 252ZM713 254L720 261L723 276L716 270ZM745 294L750 304L753 317L748 308ZM576 245L587 244L587 262L577 264ZM708 265L716 270L719 287L711 283ZM730 282L736 290L739 305L733 298ZM742 297L748 308L751 322L745 312ZM758 323L762 331L765 343L761 336ZM772 348L774 352L778 364L775 360ZM777 362L778 364L781 375L781 373ZM695 274L703 278L705 297L697 293ZM703 278L711 283L714 301L705 297ZM711 283L719 287L721 305L714 301ZM719 287L726 293L729 310L721 305ZM733 298L739 305L742 322L736 315ZM745 312L751 322L754 337L748 328ZM751 322L756 330L760 345L754 337ZM756 330L761 336L764 351L760 345ZM772 355L775 360L779 372L776 368ZM775 360L778 364L781 376L779 372ZM778 364L779 369L783 381L781 376ZM599 281L609 281L611 302L600 301ZM620 282L630 282L632 302L621 302ZM640 282L650 284L652 304L642 303ZM714 301L721 305L724 323L716 319ZM729 310L736 315L739 333L732 328ZM764 351L769 357L772 372L768 366ZM769 357L773 363L776 377L772 372ZM773 363L776 368L780 382L776 377ZM642 303L652 304L654 325L644 324ZM672 306L681 308L684 329L674 327ZM746 339L752 345L755 363L749 357ZM758 353L763 361L767 377L761 370ZM787 394L788 397L792 411L791 408ZM735 347L742 352L745 371L738 367ZM742 352L749 357L752 377L745 371ZM776 388L780 393L784 409L780 404ZM791 408L792 411L796 426L795 423ZM792 411L793 413L797 427L796 426ZM613 345L624 345L625 367L614 367ZM635 345L646 345L647 368L636 367ZM646 345L656 346L658 369L647 368ZM759 381L765 389L769 408L763 401ZM775 399L780 404L784 422L779 418ZM797 427L797 428L802 444L801 443ZM592 368L603 367L604 391L593 391ZM749 392L756 397L760 418L753 414ZM792 430L795 433L799 451L796 449ZM569 394L581 392L582 417L570 418ZM604 391L616 391L617 416L605 416ZM638 391L649 392L651 416L640 416ZM649 392L660 392L663 417L651 416ZM737 406L745 410L749 433L741 430ZM767 422L773 428L777 449L771 444ZM796 449L799 451L805 471L801 468ZM804 457L805 459L811 478L809 476ZM570 418L582 417L582 443L570 444ZM605 416L617 416L618 441L606 441ZM617 416L629 416L630 441L618 441ZM694 420L704 421L707 446L697 445ZM704 421L714 422L717 447L707 446ZM732 427L741 430L744 454L736 452ZM771 444L777 449L781 472L775 467ZM594 441L606 441L607 468L595 468ZM606 441L618 441L620 468L607 468ZM675 443L686 444L689 470L678 470ZM697 445L707 446L710 472L700 471ZM726 450L736 452L739 477L730 475ZM775 467L781 472L786 496L779 491ZM793 479L798 483L802 506L797 502ZM798 483L802 486L807 509L802 506ZM812 493L814 496L819 517L817 515ZM815 498L816 499L821 520L820 519ZM632 468L643 468L646 496L634 496ZM655 468L667 469L670 497L658 496ZM710 472L720 473L724 501L714 500ZM786 496L792 500L798 524L791 521ZM622 496L634 496L637 524L625 524ZM658 496L670 497L674 525L662 525ZM803 527L808 530L815 555L810 552ZM823 538L825 540L832 565L830 563ZM825 540L827 542L834 566L832 565ZM574 527L587 526L589 556L576 557ZM708 527L719 528L724 558L713 557ZM783 541L791 543L797 571L790 569ZM791 543L798 547L804 574L797 571ZM589 556L602 555L605 586L592 587ZM653 554L666 555L670 586L657 585ZM690 556L702 556L707 587L695 587ZM702 556L713 557L718 588L707 587ZM773 565L782 567L789 596L780 595ZM790 569L797 571L805 600L797 598ZM797 571L804 574L812 603L805 600ZM804 574L811 577L818 606L812 603ZM841 591L842 592L850 619L849 619ZM842 592L842 592L850 619L850 619ZM618 585L631 586L635 618L621 618ZM670 586L682 586L687 618L674 618ZM682 586L695 587L699 619L687 618ZM740 589L751 590L757 622L746 621ZM805 600L812 603L819 634L812 631ZM842 615L845 616L853 645L850 644ZM594 619L608 618L611 652L597 653ZM746 621L757 622L762 655L751 654ZM777 624L787 626L792 659L783 657ZM787 626L795 628L801 660L792 659ZM795 628L804 629L810 662L801 660ZM804 629L812 631L818 663L810 662ZM826 636L832 638L838 669L832 668ZM842 641L847 643L853 673L849 672Z"/>
<path fill="#242430" d="M577 177L586 176L586 192L576 193ZM596 175L606 175L606 191L596 191ZM643 179L652 181L653 196L644 195ZM652 181L661 183L662 198L653 196ZM693 198L701 204L702 218L695 213ZM765 328L766 331L768 338L768 335ZM670 201L679 204L680 220L671 217ZM695 213L702 218L704 233L696 228ZM723 239L729 248L731 261L725 253ZM740 269L745 280L747 292L742 281ZM766 330L768 335L770 343L769 339ZM566 211L576 210L576 227L566 228ZM616 208L625 208L626 226L616 225ZM654 213L663 215L664 231L655 230ZM576 227L586 226L587 244L576 245ZM646 228L655 230L657 247L647 246ZM682 237L690 239L692 256L684 254ZM706 249L713 254L716 270L708 265ZM597 243L607 243L608 262L598 262ZM657 247L666 249L668 267L658 266ZM776 358L777 362L781 373L779 369ZM765 343L769 350L773 363L769 357ZM567 284L578 283L578 303L567 305ZM660 285L670 286L672 306L662 305ZM721 305L729 310L732 328L724 323ZM754 337L760 345L763 361L758 353ZM621 302L632 302L633 323L623 323ZM691 310L700 312L702 332L693 331ZM700 312L708 316L711 336L702 332ZM768 366L772 372L776 388L772 382ZM785 389L787 394L791 408L789 404ZM702 332L711 336L714 357L705 353ZM569 370L580 369L581 392L569 394ZM647 368L658 369L660 392L649 392ZM668 370L679 371L681 394L671 393ZM795 433L797 436L802 454L799 451ZM801 443L802 444L807 461L806 461ZM681 394L691 396L694 420L684 419ZM799 451L802 454L807 473L805 471ZM653 442L664 442L667 469L655 468ZM664 442L675 443L678 470L667 469ZM707 446L717 447L720 473L710 472ZM814 496L815 498L820 519L819 517ZM816 499L817 499L821 521L821 520ZM607 468L620 468L622 496L610 495ZM643 468L655 468L658 496L646 496ZM689 470L700 471L704 499L693 498ZM700 471L710 472L714 500L704 499ZM792 500L797 502L803 527L798 524ZM785 516L791 521L798 547L791 543ZM827 542L827 543L834 567L834 566ZM697 526L708 527L713 557L702 556ZM767 536L776 538L782 567L773 565ZM834 566L834 567L842 592L841 591ZM602 555L615 554L618 585L605 586ZM735 558L745 560L751 590L740 589ZM631 586L644 585L648 618L635 618ZM845 616L848 617L856 646L853 645ZM621 618L635 618L638 652L624 652ZM648 618L661 618L665 652L652 652ZM735 620L746 621L751 654L740 654ZM847 643L850 644L857 674L853 673ZM853 645L856 646L863 677L860 675ZM858 648L859 648L866 678L865 678Z"/>
<path fill="#1c1c28" d="M606 175L615 176L615 192L606 191ZM615 176L625 176L625 192L615 192ZM715 218L721 226L723 239L716 232ZM733 245L738 258L740 269L735 256ZM747 278L751 288L753 297L749 288ZM751 288L755 296L757 305L753 297ZM576 193L586 192L586 208L576 210ZM586 192L596 191L596 208L586 208ZM606 191L615 192L616 208L606 208ZM634 193L644 195L644 211L635 209ZM702 218L709 224L711 239L704 233ZM709 224L716 232L718 246L711 239ZM735 256L740 269L742 281L737 269ZM753 297L757 305L759 315L756 308ZM760 313L763 319L765 328L763 322ZM763 319L765 324L767 332L765 328ZM635 209L644 211L646 228L636 227ZM680 220L688 223L690 239L682 237ZM711 239L718 246L720 261L713 254ZM718 246L725 253L727 267L720 261ZM737 269L742 281L745 294L739 283ZM756 308L759 315L762 326L759 319ZM763 322L765 328L768 337L766 332ZM769 339L770 343L774 352L772 348ZM606 225L616 225L617 243L607 243ZM616 225L626 226L627 244L617 243ZM664 231L673 234L675 252L666 249ZM698 244L706 249L708 265L700 261ZM727 267L733 275L736 290L730 282ZM771 342L772 348L776 358L774 352ZM774 355L775 355L778 365L778 364ZM607 243L617 243L619 262L608 262ZM666 249L675 252L677 270L668 267ZM692 256L700 261L703 278L695 274ZM700 261L708 265L711 283L703 278ZM748 308L753 317L756 330L751 322ZM762 331L766 337L769 350L765 343ZM566 265L577 264L578 283L567 284ZM619 262L629 262L630 282L620 282ZM658 266L668 267L670 286L660 285ZM686 272L695 274L697 293L688 291ZM726 293L733 298L736 315L729 310ZM769 350L772 355L776 368L773 363ZM578 283L588 282L589 302L578 303ZM588 282L599 281L600 301L589 302ZM650 284L660 285L662 305L652 304ZM688 291L697 293L700 312L691 310ZM776 368L779 372L783 386L780 382ZM785 386L785 387L789 400L789 399ZM557 306L567 305L568 325L557 327ZM600 301L611 302L612 323L601 323ZM724 323L732 328L735 347L727 343ZM732 328L739 333L742 352L735 347ZM739 333L746 339L749 357L742 352ZM752 345L758 353L761 370L755 363ZM776 377L780 382L784 397L780 393ZM601 323L612 323L613 345L602 344ZM612 323L623 323L624 345L613 345ZM654 325L664 326L666 347L656 346ZM664 326L674 327L676 349L666 347ZM684 329L693 331L696 352L686 350ZM767 377L772 382L775 399L770 395ZM793 413L793 413L797 428L797 427ZM568 347L580 346L580 369L569 370ZM591 345L602 344L603 367L592 368ZM602 344L613 345L614 367L603 367ZM714 357L722 360L725 381L717 378ZM770 395L775 399L779 418L774 413ZM784 409L788 413L792 430L788 427ZM795 423L796 426L801 442L799 439ZM796 426L797 427L801 443L801 442ZM603 367L614 367L616 391L604 391ZM614 367L625 367L627 391L616 391ZM625 367L636 367L638 391L627 391ZM756 397L763 401L767 422L760 418ZM763 401L769 408L773 428L767 422ZM784 422L788 427L793 445L788 441ZM788 427L792 430L796 449L793 445ZM801 442L801 443L806 461L805 459ZM581 392L593 391L594 416L582 417ZM616 391L627 391L629 416L617 416ZM711 398L720 401L723 425L714 422ZM729 404L737 406L741 430L732 427ZM802 454L804 457L809 476L807 473ZM629 416L640 416L642 441L630 441ZM640 416L651 416L653 442L642 441ZM651 416L663 417L664 442L653 442ZM663 417L673 418L675 443L664 442ZM741 430L749 433L753 457L744 454ZM793 462L798 465L802 486L798 483ZM798 465L801 468L806 489L802 486ZM812 479L812 480L817 499L816 499ZM570 444L582 443L583 469L571 470ZM582 443L594 441L595 468L583 469ZM744 454L753 457L756 482L748 479ZM806 489L809 491L814 513L811 511ZM583 469L595 468L597 496L585 497ZM595 468L607 468L610 495L597 496ZM620 468L632 468L634 496L622 496ZM748 479L756 482L762 508L753 506ZM756 482L765 485L770 511L762 508ZM772 488L779 491L785 516L777 514ZM807 509L811 511L817 535L813 532ZM819 517L820 519L827 542L825 540ZM821 520L821 521L828 543L827 543ZM670 497L681 497L686 526L674 525ZM693 498L704 499L708 527L697 526ZM704 499L714 500L719 528L708 527ZM724 501L734 502L739 530L729 529ZM734 502L744 504L749 532L739 530ZM817 535L820 536L827 561L824 559ZM820 536L823 538L830 563L827 561ZM827 543L828 543L835 567L834 567ZM600 525L612 524L615 554L602 555ZM674 525L686 526L690 556L678 555ZM686 526L697 526L702 556L690 556ZM739 530L749 532L755 561L745 560ZM776 538L783 541L790 569L782 567ZM798 547L804 550L811 577L804 574ZM804 550L810 552L817 579L811 577ZM824 559L827 561L834 587L831 586ZM827 561L830 563L837 589L834 587ZM830 563L832 565L839 590L837 589ZM832 565L834 566L841 591L839 590ZM576 557L589 556L592 587L578 588ZM678 555L690 556L695 587L682 586ZM764 563L773 565L780 595L771 593ZM817 579L822 582L830 610L824 608ZM831 586L834 587L842 615L839 613ZM837 589L839 590L848 617L845 616ZM839 590L841 591L849 619L848 617ZM592 587L605 586L608 618L594 619ZM797 598L805 600L812 631L804 629ZM812 603L818 606L826 636L819 634ZM849 619L850 619L858 648L857 647ZM567 621L580 620L583 654L569 654ZM580 620L594 619L597 653L583 654ZM711 619L723 620L728 653L716 653ZM757 622L767 623L773 656L762 655ZM812 631L819 634L825 666L818 663ZM857 647L858 648L865 678L864 677Z"/>
<path fill="#1c1c24" d="M625 176L634 177L634 193L625 192ZM669 186L678 189L679 204L670 201ZM758 304L760 310L763 319L760 313ZM760 310L762 316L765 324L763 319ZM762 316L764 323L766 330L765 324ZM662 198L670 201L671 217L663 215ZM679 204L687 207L688 223L680 220ZM745 280L749 288L752 299L747 292ZM576 210L586 208L586 226L576 227ZM586 208L596 208L596 225L586 226ZM696 228L704 233L706 249L698 244ZM742 281L747 292L750 304L745 294ZM752 299L756 308L759 319L754 311ZM767 332L769 339L772 348L771 342ZM566 228L576 227L576 245L566 246ZM596 225L606 225L607 243L597 243ZM690 239L698 244L700 261L692 256ZM720 261L727 267L730 282L723 276ZM772 348L774 352L777 362L776 358ZM627 244L637 244L639 263L629 262ZM736 290L742 297L745 312L739 305ZM774 352L776 358L779 369L778 364ZM608 262L619 262L620 282L609 281ZM649 264L658 266L660 285L650 284ZM668 267L677 270L679 289L670 286ZM779 369L781 373L784 384L783 381ZM781 373L781 375L785 386L784 384ZM781 375L782 375L785 387L785 386ZM679 289L688 291L691 310L681 308ZM611 302L621 302L623 323L612 323ZM681 308L691 310L693 331L684 329ZM772 372L776 377L780 393L776 388ZM761 370L767 377L770 395L765 389ZM784 397L787 401L791 416L788 413ZM580 346L591 345L592 368L580 369ZM624 345L635 345L636 367L625 367ZM738 367L745 371L749 392L741 388ZM717 378L725 381L729 404L720 401ZM725 381L734 384L737 406L729 404ZM741 388L749 392L753 414L745 410ZM660 392L671 393L673 418L663 417ZM778 433L784 437L789 458L783 454ZM749 433L757 436L761 460L753 457ZM777 449L783 454L787 476L781 472ZM783 454L789 458L793 479L787 476ZM811 478L812 479L816 499L815 498ZM618 441L630 441L632 468L620 468ZM781 472L787 476L792 500L786 496ZM571 470L583 469L585 497L572 498ZM779 491L786 496L791 521L785 516ZM797 502L802 506L808 530L803 527ZM681 497L693 498L697 526L686 526ZM749 532L758 534L764 563L755 561ZM815 555L820 557L827 584L822 582ZM834 567L835 567L842 592L842 592ZM563 557L576 557L578 588L565 589ZM713 557L724 558L729 588L718 588ZM724 558L735 558L740 589L729 588ZM578 588L592 587L594 619L580 620ZM707 587L718 588L723 620L711 619ZM729 588L740 589L746 621L735 620ZM761 592L771 593L777 624L767 623ZM608 618L621 618L624 652L611 652ZM699 619L711 619L716 653L704 652ZM723 620L735 620L740 654L728 653ZM856 646L857 647L864 677L863 677Z"/>
<path fill="#20202c" d="M634 177L643 179L644 195L634 193ZM738 258L743 270L745 280L740 269ZM764 323L765 328L768 335L766 330ZM566 195L576 193L576 210L566 211ZM644 195L653 196L654 213L644 211ZM653 196L662 198L663 215L654 213ZM687 207L695 213L696 228L688 223ZM749 288L753 297L756 308L752 299ZM556 213L566 211L566 228L555 230ZM606 208L616 208L616 225L606 225ZM704 233L711 239L713 254L706 249ZM725 253L731 261L733 275L727 267ZM747 292L752 299L754 311L750 304ZM770 343L771 346L774 355L774 352ZM555 230L566 228L566 246L555 248ZM586 226L596 225L597 243L587 244ZM626 226L636 227L637 244L627 244ZM636 227L646 228L647 246L637 244ZM739 283L745 294L748 308L742 297ZM759 319L762 326L766 337L762 331ZM766 332L768 337L772 348L769 343ZM768 337L771 342L774 352L772 348ZM566 246L576 245L577 264L566 265ZM587 244L597 243L598 262L587 262ZM716 270L723 276L726 293L719 287ZM753 317L758 323L761 336L756 330ZM769 343L772 348L775 360L772 355ZM778 364L778 365L782 375L781 375ZM577 264L587 262L588 282L578 283ZM598 262L608 262L609 281L599 281ZM629 262L639 263L640 282L630 282ZM677 270L686 272L688 291L679 289ZM761 336L765 343L769 357L764 351ZM556 286L567 284L567 305L557 306ZM609 281L620 282L621 302L611 302ZM630 282L640 282L642 303L632 302ZM705 297L714 301L716 319L708 316ZM742 322L748 328L752 345L746 339ZM748 328L754 337L758 353L752 345ZM779 372L781 376L785 389L783 386ZM781 376L783 381L787 394L785 389ZM578 303L589 302L590 323L579 324ZM589 302L600 301L601 323L590 323ZM632 302L642 303L644 324L633 323ZM652 304L662 305L664 326L654 325ZM763 361L768 366L772 382L767 377ZM780 382L783 386L787 401L784 397ZM783 386L785 389L789 404L787 401ZM788 397L789 399L793 413L792 411ZM789 399L789 400L793 413L793 413ZM579 324L590 323L591 345L580 346ZM623 323L633 323L635 345L624 345ZM633 323L644 324L646 345L635 345ZM644 324L654 325L656 346L646 345ZM674 327L684 329L686 350L676 349ZM693 331L702 332L705 353L696 352ZM727 343L735 347L738 367L730 363ZM755 363L761 370L765 389L759 381ZM789 404L791 408L795 423L793 419ZM722 360L730 363L734 384L725 381ZM730 363L738 367L741 388L734 384ZM745 371L752 377L756 397L749 392ZM788 413L791 416L795 433L792 430ZM793 419L795 423L799 439L797 436ZM580 369L592 368L593 391L581 392ZM734 384L741 388L745 410L737 406ZM769 408L774 413L778 433L773 428ZM774 413L779 418L784 437L778 433ZM779 418L784 422L788 441L784 437ZM593 391L604 391L605 416L594 416ZM627 391L638 391L640 416L629 416ZM701 397L711 398L714 422L704 421ZM720 401L729 404L732 427L723 425ZM773 428L778 433L783 454L777 449ZM784 437L788 441L793 462L789 458ZM793 445L796 449L801 468L798 465ZM594 416L605 416L606 441L594 441ZM673 418L684 419L686 444L675 443ZM714 422L723 425L726 450L717 447ZM723 425L732 427L736 452L726 450ZM757 436L764 440L768 463L761 460ZM764 440L771 444L775 467L768 463ZM789 458L793 462L798 483L793 479ZM801 468L805 471L809 491L806 489ZM805 471L807 473L812 493L809 491ZM807 473L809 476L814 496L812 493ZM686 444L697 445L700 471L689 470ZM717 447L726 450L730 475L720 473ZM736 452L744 454L748 479L739 477ZM768 463L775 467L779 491L772 488ZM802 486L806 489L811 511L807 509ZM809 491L812 493L817 515L814 513ZM720 473L730 475L734 502L724 501ZM730 475L739 477L744 504L734 502ZM765 485L772 488L777 514L770 511ZM811 511L814 513L820 536L817 535ZM817 515L819 517L825 540L823 538ZM585 497L597 496L600 525L587 526ZM597 496L610 495L612 524L600 525ZM646 496L658 496L662 525L650 524ZM714 500L724 501L729 529L719 528ZM744 504L753 506L758 534L749 532ZM753 506L762 508L767 536L758 534ZM762 508L770 511L776 538L767 536ZM770 511L777 514L783 541L776 538ZM798 524L803 527L810 552L804 550ZM808 530L813 532L820 557L815 555ZM813 532L817 535L824 559L820 557ZM650 524L662 525L666 555L653 554ZM662 525L674 525L678 555L666 555ZM729 529L739 530L745 560L735 558ZM758 534L767 536L773 565L764 563ZM810 552L815 555L822 582L817 579ZM820 557L824 559L831 586L827 584ZM641 554L653 554L657 585L644 585ZM666 555L678 555L682 586L670 586ZM745 560L755 561L761 592L751 590ZM782 567L790 569L797 598L789 596ZM811 577L817 579L824 608L818 606ZM822 582L827 584L835 612L830 610ZM827 584L831 586L839 613L835 612ZM834 587L837 589L845 616L842 615ZM657 585L670 586L674 618L661 618ZM718 588L729 588L735 620L723 620ZM780 595L789 596L795 628L787 626ZM839 613L842 615L850 644L847 643ZM767 623L777 624L783 657L773 656ZM819 634L826 636L832 668L825 666Z"/>
<path fill="#202028" d="M678 189L686 192L687 207L679 204ZM708 210L715 218L716 232L709 224ZM721 226L727 235L729 248L723 239ZM755 296L758 304L760 313L757 305ZM766 331L766 332L769 339L768 338ZM556 196L566 195L566 211L556 213ZM615 192L625 192L625 208L616 208ZM625 192L634 193L635 209L625 208ZM716 232L723 239L725 253L718 246ZM729 248L735 256L737 269L731 261ZM765 324L766 330L769 339L767 332ZM768 335L768 338L771 346L770 343ZM596 208L606 208L606 225L596 225ZM663 215L671 217L673 234L664 231ZM671 217L680 220L682 237L673 234ZM759 315L763 322L766 332L762 326ZM733 275L739 283L742 297L736 290ZM750 304L754 311L758 323L753 317ZM754 311L759 319L762 331L758 323ZM762 326L766 332L769 343L766 337ZM774 352L774 355L778 364L777 362ZM555 248L566 246L566 265L556 266ZM617 243L627 244L629 262L619 262ZM637 244L647 246L649 264L639 263ZM647 246L657 247L658 266L649 264ZM675 252L684 254L686 272L677 270ZM684 254L692 256L695 274L686 272ZM723 276L730 282L733 298L726 293ZM766 337L769 343L772 355L769 350ZM556 266L566 265L567 284L556 286ZM587 262L598 262L599 281L588 282ZM639 263L649 264L650 284L640 282ZM739 305L745 312L748 328L742 322ZM670 286L679 289L681 308L672 306ZM697 293L705 297L708 316L700 312ZM736 315L742 322L746 339L739 333ZM760 345L764 351L768 366L763 361ZM783 381L784 384L788 397L787 394ZM784 384L785 386L789 399L788 397ZM567 305L578 303L579 324L568 325ZM662 305L672 306L674 327L664 326ZM708 316L716 319L719 339L711 336ZM716 319L724 323L727 343L719 339ZM568 325L579 324L580 346L568 347ZM590 323L601 323L602 344L591 345ZM711 336L719 339L722 360L714 357ZM719 339L727 343L730 363L722 360ZM749 357L755 363L759 381L752 377ZM772 382L776 388L780 404L775 399ZM780 393L784 397L788 413L784 409ZM787 401L789 404L793 419L791 416ZM656 346L666 347L668 370L658 369ZM666 347L676 349L679 371L668 370ZM676 349L686 350L689 372L679 371ZM686 350L696 352L698 374L689 372ZM696 352L705 353L708 375L698 374ZM705 353L714 357L717 378L708 375ZM752 377L759 381L763 401L756 397ZM765 389L770 395L774 413L769 408ZM780 404L784 409L788 427L784 422ZM791 416L793 419L797 436L795 433ZM636 367L647 368L649 392L638 391ZM658 369L668 370L671 393L660 392ZM679 371L689 372L691 396L681 394ZM689 372L698 374L701 397L691 396ZM698 374L708 375L711 398L701 397ZM708 375L717 378L720 401L711 398ZM797 436L799 439L804 457L802 454ZM799 439L801 442L805 459L804 457ZM671 393L681 394L684 419L673 418ZM691 396L701 397L704 421L694 420ZM745 410L753 414L757 436L749 433ZM753 414L760 418L764 440L757 436ZM760 418L767 422L771 444L764 440ZM788 441L793 445L798 465L793 462ZM805 459L806 461L812 479L811 478ZM806 461L807 461L812 480L812 479ZM582 417L594 416L594 441L582 443ZM684 419L694 420L697 445L686 444ZM809 476L811 478L815 498L814 496ZM630 441L642 441L643 468L632 468ZM642 441L653 442L655 468L643 468ZM753 457L761 460L765 485L756 482ZM761 460L768 463L772 488L765 485ZM787 476L793 479L797 502L792 500ZM667 469L678 470L681 497L670 497ZM678 470L689 470L693 498L681 497ZM739 477L748 479L753 506L744 504ZM802 506L807 509L813 532L808 530ZM814 513L817 515L823 538L820 536ZM820 519L821 520L827 543L827 542ZM572 498L585 497L587 526L574 527ZM610 495L622 496L625 524L612 524ZM634 496L646 496L650 524L637 524ZM777 514L785 516L791 543L783 541ZM791 521L798 524L804 550L798 547ZM561 528L574 527L576 557L563 557ZM587 526L600 525L602 555L589 556ZM719 528L729 529L735 558L724 558ZM755 561L764 563L771 593L761 592ZM565 589L578 588L580 620L567 621ZM644 585L657 585L661 618L648 618ZM695 587L707 587L711 619L699 619ZM751 590L761 592L767 623L757 622ZM771 593L780 595L787 626L777 624ZM789 596L797 598L804 629L795 628ZM818 606L824 608L832 638L826 636ZM824 608L830 610L837 639L832 638ZM830 610L835 612L842 641L837 639ZM835 612L839 613L847 643L842 641ZM848 617L849 619L857 647L856 646ZM850 619L850 619L859 648L858 648ZM635 618L648 618L652 652L638 652ZM661 618L674 618L678 652L665 652ZM674 618L687 618L691 652L678 652ZM687 618L699 619L704 652L691 652ZM832 638L837 639L844 671L838 669ZM837 639L842 641L849 672L844 671ZM850 644L853 645L860 675L857 674Z"/>
<path fill="#30303c" d="M612 524L625 524L628 554L615 554ZM605 586L618 585L621 618L608 618Z"/>
<path fill="#343440" d="M625 524L637 524L641 554L628 554Z"/>
<path fill="#2c2c38" d="M637 524L650 524L653 554L641 554Z"/>
<path fill="#303038" d="M615 554L628 554L631 586L618 585ZM628 554L641 554L644 585L631 586Z"/>
<path fill="#282830" d="M557 106L562 106L557 180L552 181ZM567 105L571 104L567 179L562 179ZM689 131L693 134L697 201L693 198ZM718 174L721 180L727 235L724 231ZM731 210L733 219L740 265L738 258ZM733 219L736 225L743 270L740 265ZM740 236L742 243L749 283L747 278ZM752 279L753 283L761 313L760 310ZM754 286L755 291L763 320L762 316ZM756 296L756 299L765 326L764 323ZM756 299L757 302L765 328L765 326ZM757 306L757 307L766 332L766 331Z"/>
<path fill="#242430" d="M562 106L567 105L562 179L557 180ZM747 261L748 266L756 300L755 296Z"/>
<path fill="#2c2c34" d="M700 142L703 146L708 210L704 207ZM736 225L738 231L745 274L743 270ZM750 271L751 275L759 307L758 304ZM753 283L754 286L762 316L761 313Z"/>
<path fill="#24242c" d="M703 146L706 152L711 214L708 210ZM738 231L740 236L747 278L745 274ZM745 255L747 261L755 296L753 292ZM751 275L752 279L760 310L759 307ZM755 291L756 296L764 323L763 320Z"/>
<path fill="#202028" d="M706 152L709 157L715 218L711 214ZM709 157L712 162L718 222L715 218ZM712 162L715 167L721 226L718 222ZM743 249L745 255L753 292L751 288ZM748 266L750 271L758 304L756 300ZM757 302L757 305L766 330L765 328Z"/>
<path fill="#20202c" d="M715 167L718 174L724 231L721 226ZM742 243L743 249L751 288L749 283ZM757 307L758 308L766 332L766 332Z"/>
<path fill="#282834" d="M729 200L731 210L738 258L735 251ZM757 305L757 306L766 331L766 330Z"/>
<path stroke="#111116" stroke-width="0.9" fill="none" d="M384.7 296L375.5 328L367.4 355L363.7 368L359.9 381L356.9 395L353.7 410L350.6 425L348.3 441L345.7 457L342.6 475L339.4 493L335.9 512L332.0 531L328.0 552L323.6 574L319.6 596L316.5 620L313.2 645L309.6 671L305.8 698L301.9 726L300.0 756L300.0 787L300.0 819L300.0 853M385.0 296L375.7 327L367.6 355L364.0 368L360.2 381L357.1 395L354.0 410L350.9 425L348.6 441L346.0 457L342.9 474L339.7 493L336.2 512L332.3 531L328.3 552L323.9 574L319.9 596L316.8 620L313.5 645L309.9 671L306.2 698L302.3 726L300.3 756L300.3 787L300.3 819L300.3 853M385.6 296L376.4 327L368.3 355L364.7 367L360.9 381L357.9 395L354.7 409L351.6 424L349.4 440L346.8 457L343.7 474L340.5 492L337.0 511L333.2 531L329.1 552L324.8 573L320.8 596L317.7 620L314.4 644L310.9 670L307.2 697L303.3 726L301.4 755L301.4 786L301.4 819L301.4 853M386.8 295L377.6 326L369.5 354L365.9 367L362.2 380L359.2 394L356.0 408L352.9 424L350.7 440L348.1 456L345.1 473L341.9 492L338.4 511L334.6 530L330.6 551L326.3 573L322.3 595L319.2 619L316.0 644L312.5 670L308.8 697L304.9 725L303.1 755L303.1 786L303.1 818L303.1 852M388.3 291L379.2 322L371.2 350L367.6 363L363.9 376L360.9 390L357.8 405L354.7 420L352.5 436L350.0 453L346.9 470L343.8 489L340.4 508L336.6 527L332.6 548L328.4 570L324.4 593L321.4 617L318.2 641L314.7 667L311.1 695L307.3 723L305.4 753L305.5 784L305.6 816L305.6 850M390.3 280L381.3 312L373.3 340L369.8 353L366.1 366L363.2 381L360.1 395L357.1 411L354.9 427L352.4 444L349.4 462L346.2 480L342.9 499L339.1 519L335.2 540L331.0 562L327.1 585L324.1 609L321.0 634L317.6 661L314.0 688L310.3 717L308.5 747L308.6 778L308.7 811L308.7 845M392.8 266L383.8 298L375.9 327L372.4 340L368.8 354L365.9 369L362.8 384L359.9 399L357.7 416L355.3 433L352.3 451L349.2 470L345.9 489L342.3 509L338.4 531L334.3 553L330.4 576L327.5 601L324.4 626L321.1 653L317.6 680L313.9 709L312.2 739L312.3 771L312.5 804L312.5 838M395.6 250L386.8 283L379.0 312L375.6 326L372.0 340L369.1 354L366.1 370L363.2 386L361.1 403L358.7 420L355.8 438L352.8 457L349.5 477L345.9 498L342.1 519L338.0 542L334.3 566L331.4 590L328.4 616L325.2 643L321.8 671L318.2 700L316.5 731L316.7 763L317.0 796L317.0 831M398.9 231L390.2 265L382.5 295L379.1 309L375.6 323L372.8 338L369.9 354L367.0 370L365.0 387L362.6 405L359.8 424L356.8 443L353.6 463L350.1 484L346.4 506L342.4 529L338.7 553L335.9 578L333.0 605L329.9 632L326.6 660L323.1 690L321.5 721L321.8 753L322.1 787L322.1 822M402.6 216L394.0 250L386.5 281L383.2 295L379.7 310L376.9 325L374.1 341L371.3 358L369.3 375L367.0 393L364.3 412L361.4 432L358.3 452L354.8 473L351.2 496L347.3 519L343.7 543L341.0 569L338.2 595L335.2 623L332.0 651L328.6 681L327.2 713L327.5 745L327.8 779L327.8 815M406.8 208L398.3 243L390.9 274L387.6 288L384.2 303L381.6 318L378.8 334L376.1 351L374.1 369L371.9 387L369.2 406L366.4 426L363.4 446L360.0 468L356.5 490L352.7 514L349.2 538L346.7 564L344.0 590L341.0 618L338.0 647L334.8 677L333.4 709L333.8 741L334.2 776L334.2 811M411.3 199L402.9 235L395.7 266L392.5 281L389.2 295L386.6 311L383.9 327L381.3 344L379.4 362L377.3 380L374.7 399L372.0 419L369.0 440L365.8 462L362.4 485L358.7 508L355.3 533L352.8 558L350.3 585L347.5 613L344.6 642L341.5 673L340.2 704L340.8 737L341.3 772L341.3 807M416.2 190L408.0 226L401.0 258L397.8 272L394.6 287L392.1 303L389.5 320L386.9 337L385.2 354L383.1 373L380.6 392L378.0 412L375.2 433L372.0 455L368.7 478L365.2 502L361.9 527L359.6 553L357.1 580L354.5 608L351.7 637L348.8 668L347.7 699L348.3 732L348.9 767L348.9 803M421.4 182L413.5 218L406.6 250L403.6 265L400.4 280L398.0 296L395.5 312L393.0 330L391.3 348L389.3 366L387.0 386L384.5 406L381.7 427L378.7 449L375.6 472L372.1 496L369.0 521L366.8 547L364.5 575L362.0 603L359.4 632L356.7 663L355.7 695L356.4 728L357.1 763L357.1 799M427.1 177L419.3 213L412.6 245L409.7 260L406.6 275L404.3 291L401.9 308L399.5 325L397.9 343L396.0 362L393.8 382L391.4 402L388.8 424L385.9 446L382.9 469L379.6 493L376.6 518L374.5 544L372.4 571L370.1 600L367.7 629L365.1 660L364.2 692L365.0 726L365.8 760L365.8 797M433.0 171L425.5 208L419.0 240L416.2 255L413.2 270L411.0 287L408.7 303L406.4 321L404.9 339L403.2 358L401.0 378L398.7 398L396.2 419L393.5 442L390.7 465L387.5 489L384.6 514L382.7 541L380.7 568L378.6 596L376.4 626L374.0 657L373.3 689L374.2 723L375.1 758L375.1 794M439.3 165L432.0 202L425.8 235L423.0 250L420.2 265L418.1 281L415.9 298L413.7 316L412.3 334L410.7 353L408.6 373L406.5 394L404.1 415L401.5 437L398.8 461L395.8 485L393.1 510L391.3 537L389.6 564L387.6 593L385.6 623L383.4 654L382.8 686L383.9 720L384.9 755L384.9 791M446.0 159L438.9 196L432.9 229L430.2 244L427.5 260L425.5 276L423.4 293L421.4 311L420.1 329L418.5 348L416.6 368L414.6 389L412.4 411L410.0 433L407.4 457L404.6 481L402.0 506L400.4 533L398.8 560L397.1 589L395.3 619L393.3 650L392.9 683L394.1 717L395.2 752L395.2 789M452.9 155L446.1 192L440.3 225L437.7 240L435.2 256L433.2 272L431.3 289L429.4 307L428.2 326L426.8 345L425.0 365L423.1 386L421.1 407L418.8 430L416.4 454L413.7 478L411.4 504L409.9 530L408.5 558L407.0 587L405.4 617L403.7 648L403.4 680L404.7 714L406.0 750L406.0 786M460.1 150L453.5 188L448.0 221L445.6 236L443.1 252L441.3 268L439.5 286L437.8 303L436.7 322L435.4 341L433.7 361L432.0 382L430.1 404L427.9 427L425.8 450L423.3 475L421.1 501L419.8 527L418.6 555L417.3 584L415.9 614L414.5 645L414.3 678L415.8 712L417.2 747L417.2 784M467.6 145L461.3 183L456.0 217L453.7 232L451.4 248L449.7 264L448.0 282L446.4 299L445.4 318L444.3 337L442.8 358L441.2 379L439.4 401L437.5 423L435.5 447L433.2 472L431.1 497L430.1 524L429.1 552L428.0 581L426.9 611L425.6 643L425.7 676L427.3 710L428.9 745L428.9 782M475.3 141L469.3 179L464.3 212L462.1 228L459.9 244L458.4 260L456.8 278L455.3 296L454.5 314L453.5 334L452.1 354L450.7 375L449.1 397L447.3 420L445.5 444L443.4 469L441.5 494L440.7 521L439.9 549L439.0 578L438.2 609L437.2 640L437.4 673L439.2 707L440.9 743L440.9 780M483.3 136L477.5 175L472.8 208L470.7 224L468.7 240L467.3 257L465.9 274L464.6 292L463.8 311L462.9 330L461.8 351L460.5 372L459.0 394L457.4 417L455.9 441L453.9 466L452.3 492L451.6 519L451.0 547L450.4 576L449.8 606L449.1 638L449.5 671L451.4 705L453.3 741L453.3 778M491.4 132L486.0 171L481.5 204L479.6 220L477.7 236L476.4 253L475.2 270L474.0 288L473.4 307L472.6 327L471.6 347L470.5 368L469.2 391L467.8 414L466.5 438L464.7 463L463.3 489L462.8 516L462.5 544L462.1 573L461.7 604L461.3 635L461.9 668L464.0 703L466.0 739L466.0 776M499.8 127L494.7 166L490.5 200L488.7 216L486.9 232L485.8 249L484.7 266L483.7 284L483.2 303L482.6 323L481.8 344L480.8 365L479.7 387L478.5 410L477.3 434L475.8 460L474.5 486L474.3 513L474.2 541L474.0 570L474.0 601L473.8 633L474.6 666L476.9 700L479.0 736L479.0 774M508.3 124L503.5 163L499.6 197L498.0 212L496.4 229L495.4 246L494.4 263L493.6 281L493.2 300L492.8 320L492.1 341L491.3 362L490.4 385L489.3 408L488.4 432L487.1 457L486.0 483L486.0 511L486.1 539L486.2 568L486.4 599L486.5 631L487.5 664L490.0 699L492.3 735L492.3 772M517.0 120L512.5 159L508.9 194L507.4 209L505.9 226L505.1 242L504.3 260L503.6 278L503.4 298L503.1 317L502.6 338L501.9 360L501.2 382L500.4 405L499.7 430L498.5 455L497.7 481L497.9 508L498.3 537L498.6 566L499.1 597L499.5 629L500.7 662L503.3 697L505.8 733L505.8 770M525.9 117L521.6 156L518.3 191L517.0 206L515.7 223L515.0 240L514.3 257L513.8 276L513.7 295L513.6 315L513.3 336L512.8 357L512.2 380L511.6 403L511.1 427L510.2 453L509.6 479L510.0 506L510.6 535L511.2 564L512.0 595L512.6 627L514.1 660L516.9 695L519.5 731L519.5 769M534.8 114L530.9 153L527.9 188L526.7 203L525.5 220L525.0 237L524.5 255L524.1 273L524.2 292L524.2 312L524.0 333L523.7 355L523.4 377L523.0 401L522.7 425L522.0 450L521.6 477L522.2 504L523.1 533L524.0 562L525.0 593L526.0 625L527.6 659L530.6 694L533.4 730L533.4 767M543.8 110L540.2 150L537.5 185L536.5 200L535.5 217L535.1 234L534.7 252L534.5 270L534.8 290L534.9 310L534.9 331L534.8 352L534.7 375L534.5 398L534.4 423L533.9 448L533.7 475L534.6 502L535.7 531L536.9 560L538.2 591L539.4 623L541.3 657L544.5 692L547.4 728L547.4 766M552.9 107L549.6 147L547.2 182L546.3 198L545.5 214L545.3 231L545.1 249L545.0 268L545.4 287L545.7 307L545.9 328L546.0 350L546.0 372L546.0 396L546.2 420L545.9 446L546.0 472L547.0 500L548.4 529L549.9 558L551.5 589L553.0 622L555.1 655L558.4 690L561.6 727L561.6 764M562.0 106L559.1 145L557.0 180L556.2 196L555.6 213L555.5 230L555.5 248L555.6 266L556.1 286L556.6 306L557.0 327L557.2 349L557.4 371L557.6 395L558.1 419L558.0 445L558.2 471L559.6 499L561.2 528L562.9 557L564.8 589L566.6 621L568.9 654L572.4 689L575.8 726L575.8 764M571.1 104L568.6 144L566.8 179L566.2 195L565.7 211L565.7 228L565.9 246L566.2 265L566.8 284L567.5 305L568.0 325L568.4 347L568.8 370L569.3 394L569.9 418L570.1 444L570.5 470L572.1 498L574.0 527L576.0 557L578.2 588L580.3 620L582.8 654L586.5 689L590.0 725L590.0 763M580.3 102L578.0 142L576.6 177L576.1 193L575.8 210L576.0 227L576.3 245L576.8 264L577.5 283L578.3 303L579.1 324L579.7 346L580.3 369L580.9 392L581.8 417L582.2 443L582.9 469L584.6 497L586.8 526L589.0 556L591.5 587L593.9 619L596.7 653L600.6 688L604.2 724L604.2 762M589.4 101L587.5 141L586.3 176L586.0 192L585.8 208L586.2 226L586.7 244L587.3 262L588.2 282L589.2 302L590.1 323L590.9 345L591.7 368L592.5 391L593.6 416L594.2 441L595.1 468L597.2 496L599.6 525L602.1 555L604.9 586L607.6 618L610.5 652L614.6 687L618.4 723L618.4 761M598.5 100L596.9 140L596.0 175L595.9 191L595.9 208L596.4 225L597.0 243L597.8 262L598.9 281L600.0 301L601.1 323L602.0 344L603.0 367L604.1 391L605.4 416L606.3 441L607.4 468L609.6 495L612.3 524L615.1 554L618.1 585L621.1 618L624.3 652L628.5 687L632.6 723L632.6 761M607.5 100L606.2 140L605.7 175L605.7 191L605.8 208L606.5 225L607.3 243L608.2 262L609.5 281L610.7 302L612.0 323L613.1 345L614.3 367L615.6 391L617.1 416L618.2 441L619.5 468L622.0 496L624.9 524L627.9 554L631.3 586L634.6 618L638.0 652L642.4 687L646.6 723L646.6 761M616.4 101L615.5 141L615.2 176L615.4 192L615.7 208L616.5 225L617.4 243L618.6 262L619.9 282L621.3 302L622.8 323L624.1 345L625.4 367L626.9 391L628.7 416L630.0 441L631.5 468L634.2 496L637.4 524L640.7 554L644.3 585L647.9 618L651.5 652L656.1 687L660.5 723L660.5 761M625.3 101L624.6 141L624.7 176L624.9 192L625.4 208L626.3 226L627.5 244L628.8 262L630.3 282L631.8 302L633.5 323L634.9 345L636.5 367L638.1 391L640.2 416L641.6 441L643.4 468L646.3 496L649.7 524L653.3 554L657.2 585L661.1 618L664.9 652L669.7 687L674.2 723L674.2 761M633.9 103L633.6 142L634.0 177L634.4 193L635.0 209L636.1 227L637.4 244L638.8 263L640.4 282L642.2 303L644.0 324L645.6 345L647.3 368L649.2 392L651.4 416L653.1 442L655.1 468L658.2 496L661.9 525L665.7 555L669.9 586L674.0 618L678.1 652L683.0 687L687.7 723L687.7 761M642.5 105L642.4 144L643.1 179L643.6 195L644.4 211L645.6 228L647.1 246L648.7 264L650.4 284L652.3 304L654.3 325L656.1 346L658.0 369L660.1 392L662.5 417L664.4 442L666.6 469L669.9 497L673.8 525L677.9 555L682.4 586L686.8 618L691.0 652L696.1 687L701.0 723L701.0 761M650.8 107L651.1 146L652.1 181L652.7 196L653.6 213L655.0 230L656.6 247L658.4 266L660.2 285L662.3 305L664.4 326L666.4 347L668.4 370L670.7 393L673.4 418L675.5 443L677.8 470L681.4 497L685.5 526L689.9 556L694.6 587L699.3 619L703.7 652L709.0 687L714.0 724L714.0 762M659.0 110L659.6 149L660.8 183L661.6 198L662.6 215L664.2 231L665.9 249L667.8 267L669.8 286L672.0 306L674.3 327L676.4 349L678.6 371L681.1 394L684.0 419L686.3 444L688.8 470L692.6 498L696.9 526L701.5 556L706.5 587L711.5 619L716.1 653L721.6 688L726.7 724L726.7 762M667.0 115L667.8 153L669.3 186L670.3 201L671.4 217L673.1 234L675.0 252L677.0 270L679.2 289L681.5 308L683.9 329L686.2 350L688.6 372L691.2 396L694.3 420L696.8 445L699.6 471L703.5 499L708.1 527L712.9 557L718.2 588L723.4 620L728.2 653L733.8 688L739.1 724L739.1 762M674.7 119L675.8 156L677.6 189L678.6 204L680.0 220L681.7 237L683.8 254L685.9 272L688.2 291L690.7 310L693.3 331L695.7 352L698.2 374L701.1 397L704.4 421L707.0 446L710.0 472L714.1 500L718.9 528L724.0 558L729.5 588L734.9 620L739.9 654L745.7 689L751.1 725L751.1 762M682.2 123L683.6 160L685.6 192L686.8 207L688.2 223L690.1 239L692.3 256L694.6 274L697.0 293L699.6 312L702.3 332L704.9 353L707.6 375L710.6 398L714.1 422L716.9 447L720.0 473L724.4 501L729.4 529L734.6 558L740.4 589L746.1 621L751.3 654L757.2 689L762.8 725L762.8 763M689.4 131L691.0 166L693.3 198L694.6 213L696.2 228L698.2 244L700.5 261L702.9 278L705.4 297L708.1 316L711.0 336L713.7 357L716.6 378L719.8 401L723.4 425L726.4 450L729.7 475L734.3 502L739.4 530L745.0 560L750.9 590L756.9 622L762.2 655L768.3 690L774.0 726L774.0 763M696.3 138L698.2 173L700.7 204L702.1 218L703.8 233L706.0 249L708.4 265L711.0 283L713.6 301L716.4 319L719.4 339L722.3 360L725.3 381L728.6 404L732.4 427L735.6 452L739.1 477L743.8 504L749.1 532L754.9 561L761.0 592L767.2 623L772.7 656L778.9 691L784.8 727L784.8 764M702.9 146L705.1 180L707.8 210L709.3 224L711.1 239L713.4 254L715.9 270L718.6 287L721.3 305L724.3 323L727.4 343L730.4 363L733.5 384L737.0 406L741.0 430L744.4 454L748.0 479L752.9 506L758.4 534L764.3 563L770.7 593L777.1 624L782.8 657L789.1 692L795.1 728L795.1 765M709.3 157L711.6 189L714.6 218L716.2 232L718.1 246L720.5 261L723.1 276L725.9 293L728.7 310L731.8 328L735.0 347L738.1 367L741.4 388L745.0 410L749.2 433L752.7 457L756.5 482L761.5 508L767.2 536L773.3 565L779.9 595L786.5 626L792.4 659L798.8 693L804.9 729L804.9 766M715.2 167L717.8 198L720.9 226L722.7 239L724.7 253L727.1 267L729.9 282L732.8 298L735.7 315L738.9 333L742.3 352L745.5 371L748.9 392L752.7 414L757.0 436L760.6 460L764.5 485L769.7 511L775.6 538L781.9 567L788.7 596L795.4 628L801.4 660L808.0 694L814.2 730L814.2 767M720.9 180L723.6 209L727.0 235L728.8 248L730.9 261L733.5 275L736.3 290L739.3 305L742.3 322L745.6 339L749.1 357L752.4 377L755.9 397L759.8 418L764.3 440L768.0 463L772.1 488L777.4 514L783.5 541L789.9 569L796.9 598L803.8 629L810.0 662L816.6 696L822.9 731L822.9 768M726.1 192L729.1 219L732.6 245L734.5 256L736.7 269L739.4 283L742.3 297L745.4 312L748.5 328L751.8 345L755.4 363L758.9 381L762.5 401L766.5 422L771.1 444L775.0 467L779.2 491L784.7 516L790.9 543L797.5 571L804.6 600L811.7 631L818.0 663L824.7 697L831.1 732L831.1 769M731.0 210L734.2 235L737.8 258L739.8 269L742.1 281L744.8 294L747.9 308L751.1 322L754.2 337L757.7 353L761.4 370L764.9 389L768.6 408L772.7 428L777.5 449L781.5 472L785.8 496L791.4 521L797.7 547L804.4 574L811.7 603L819.0 634L825.4 666L832.2 699L838.7 734L838.7 770M735.5 225L738.8 248L742.7 270L744.7 280L747.1 292L749.9 304L753.0 317L756.3 330L759.5 345L763.0 361L766.8 377L770.4 395L774.3 413L778.5 433L783.3 454L787.4 476L791.9 500L797.5 524L804.0 550L810.9 577L818.3 606L825.8 636L832.2 668L839.2 701L845.8 735L845.8 772M739.6 236L743.1 258L747.1 278L749.2 288L751.6 299L754.5 311L757.7 323L761.1 336L764.3 351L767.9 366L771.8 382L775.5 399L779.4 418L783.7 437L788.7 458L792.9 479L797.4 502L803.2 527L809.8 552L816.8 579L824.3 608L831.9 638L838.5 669L845.5 702L852.2 736L852.2 773M743.3 249L746.9 269L751.0 288L753.2 297L755.7 308L758.7 319L761.9 331L765.3 343L768.7 357L772.3 372L776.3 388L780.0 404L784.0 422L788.4 441L793.5 462L797.8 483L802.4 506L808.3 530L815.0 555L822.1 582L829.8 610L837.4 639L844.1 671L851.2 703L857.9 738L857.9 774M746.6 261L750.3 278L754.6 296L756.8 305L759.4 315L762.3 326L765.6 337L769.2 350L772.6 363L776.2 377L780.3 393L784.1 409L788.1 427L792.6 445L797.7 465L802.1 486L806.8 509L812.8 532L819.6 557L826.8 584L834.6 612L842.3 641L849.1 672L856.3 705L863.0 739L863.0 775M749.5 271L753.3 287L757.6 304L759.9 313L762.5 322L765.6 332L768.9 343L772.5 355L775.9 368L779.7 382L783.7 397L787.6 413L791.7 430L796.3 449L801.5 468L805.9 489L810.7 511L816.7 535L823.6 559L830.9 586L838.8 613L846.6 643L853.4 673L860.7 706L867.5 740L867.5 775M752.0 279L755.8 294L760.2 310L762.6 319L765.2 328L768.3 337L771.7 348L775.3 360L778.8 372L782.6 386L786.7 401L790.6 416L794.8 433L799.4 451L804.6 471L809.2 491L814.0 513L820.1 536L827.0 561L834.4 587L842.3 615L850.3 644L857.1 674L864.4 707L871.3 741L871.3 776M754.0 286L757.9 300L762.4 316L764.7 324L767.4 332L770.5 342L774.0 352L777.6 364L781.1 376L784.9 389L789.1 404L793.1 419L797.3 436L801.9 454L807.2 473L811.8 493L816.7 515L822.8 538L829.8 563L837.2 589L845.3 616L853.3 645L860.2 675L867.5 707L874.4 741L874.4 777M755.5 296L759.5 309L764.1 323L766.4 330L769.2 339L772.3 348L775.8 358L779.4 369L783.0 381L786.8 394L791.0 408L795.0 423L799.2 439L803.9 457L809.3 476L813.9 496L818.8 517L825.0 540L832.0 565L839.5 590L847.5 617L855.6 646L862.6 677L869.9 709L876.9 742L876.9 778M756.6 302L760.7 314L765.3 328L767.6 335L770.4 343L773.5 352L777.0 362L780.7 373L784.3 384L788.1 397L792.4 411L796.4 426L800.6 442L805.4 459L810.7 478L815.4 498L820.3 519L826.5 542L833.6 566L841.1 591L849.2 619L857.3 647L864.3 677L871.6 709L878.6 743L878.6 778M757.3 306L761.4 318L766.0 331L768.4 338L771.1 346L774.3 355L777.8 364L781.5 375L785.1 386L788.9 399L793.2 413L797.2 427L801.5 443L806.2 461L811.6 479L816.2 499L821.2 520L827.4 543L834.5 567L842.0 592L850.2 619L858.3 648L865.3 678L872.7 710L879.7 743L879.7 779M757.5 308L761.6 319L766.2 332L768.6 339L771.4 347L774.5 355L778.0 365L781.8 375L785.3 387L789.2 400L793.4 413L797.5 428L801.8 444L806.5 461L811.9 480L816.5 499L821.5 521L827.7 543L834.8 567L842.3 592L850.5 619L858.6 648L865.6 678L873.0 710L880.0 743L880.0 779"/>
<path stroke="#d8d8e2" stroke-width="1.1" stroke-opacity="0.3" fill="none" d="M632.8 103L632.5 142L632.9 177L633.3 193L633.9 209L635.0 227L636.3 244L637.7 263L639.3 282L641.1 303L642.9 324L644.5 345L646.2 368M650.3 416L652.0 442L654.0 468L657.1 496L660.8 525L664.6 555L668.8 586L672.9 618L677.0 652L681.9 687L686.6 723L686.6 761"/>
<path stroke="#d8d8e2" stroke-width="1.1" stroke-opacity="0.4" fill="none" d="M641.4 105L641.3 144M642.5 195L643.3 211L644.5 228L646.0 246L647.6 264L649.3 284L651.2 304L653.2 325L655.0 346L656.9 369M661.4 417L663.3 442L665.5 469L668.8 497L672.7 525L676.8 555L681.3 586L685.7 618L689.9 652L695.0 687L699.9 723L699.9 761M750.9 279L754.7 294M761.5 319L764.1 328L767.2 337L770.6 348M777.7 372L781.5 386L785.6 401L789.5 416L793.7 433L798.3 451L803.5 471L808.1 491L812.9 513L819.0 536M833.3 587L841.2 615M856.0 674L863.3 707L870.2 741L870.2 776M752.9 286L756.8 300L761.3 316L763.6 324L766.3 332M772.9 352L776.5 364L780.0 376L783.8 389L788.0 404L792.0 419L796.2 436L800.8 454L806.1 473L810.7 493L815.6 515L821.7 538L828.7 563L836.1 589L844.2 616L852.2 645L859.1 675L866.4 707L873.3 741L873.3 777"/>
<path stroke="#d8d8e2" stroke-width="1.1" stroke-opacity="0.6" fill="none" d="M649.7 107L650.0 146L651.0 181L651.6 196L652.5 213L653.9 230L655.5 247L657.3 266L659.1 285L661.2 305L663.3 326L665.3 347L667.3 370L669.6 393L672.3 418L674.4 443L676.7 470L680.3 497L684.4 526L688.8 556L693.5 587L698.2 619L702.6 652L707.9 687L712.9 724L712.9 762M753.5 296L755.7 305L758.3 315L761.2 326M771.5 363L775.1 377L779.2 393L783.0 409L787.0 427L791.5 445L796.6 465L801.0 486M811.7 532L818.5 557L825.7 584L833.5 612L841.2 641L848.0 672L855.2 705L861.9 739L861.9 775M628.6 101L628.3 121L628.1 141L628.1 161L628.3 176M637.2 104L637.0 124L637.0 143L637.2 163L637.6 178M653.9 109L654.1 128L654.4 147L654.9 167L655.5 182M677.5 121L678.0 139L678.7 158L679.7 176L680.6 191M684.8 127L685.4 145L686.3 163L687.5 181L688.5 195M691.9 134L692.6 152L693.7 170L694.9 188L696.0 201M698.7 142L699.5 159L700.7 176L702.1 193L703.3 207M705.1 152L706.1 168L707.4 185L708.9 201L710.2 214M711.3 162L712.4 177L713.8 193L715.4 210L716.8 222M732.3 219L733.8 231L735.5 243L737.6 255L739.3 265M736.6 231L738.1 241L740.0 253L742.1 265L743.9 274M740.5 243L742.1 253L744.1 263L746.3 274L748.1 283M752.0 283L753.8 290L755.9 297L758.4 306L760.4 313M753.8 291L755.6 298L757.8 305L760.2 313L762.3 320M756.0 305L757.9 310L760.1 316L762.6 324L764.7 330"/>
<path stroke="#d8d8e2" stroke-width="1.1" stroke-opacity="0.7" fill="none" d="M665.9 115L666.7 153M669.2 201L670.3 217L672.0 234M675.9 270L678.1 289L680.4 308L682.8 329L685.1 350L687.5 372L690.1 396L693.2 420L695.7 445L698.5 471L702.4 499L707.0 527L711.8 557L717.1 588L722.3 620L727.1 653L732.7 688L738.0 724L738.0 762M673.6 119L674.7 156L676.5 189L677.5 204L678.9 220L680.6 237L682.7 254L684.8 272L687.1 291L689.6 310L692.2 331L694.6 352L697.1 374L700.0 397L703.3 421L705.9 446L708.9 472L713.0 500L717.8 528L722.9 558L728.4 588M738.8 654L744.6 689L750.0 725L750.0 762M688.3 131L689.9 166L692.2 198M695.1 228L697.1 244L699.4 261L701.8 278L704.3 297L707.0 316L709.9 336L712.6 357L715.5 378L718.7 401M725.3 450L728.6 475L733.2 502L738.3 530L743.9 560L749.8 590L755.8 622L761.1 655L767.2 690L772.9 726L772.9 763M695.2 138L697.1 173L699.6 204L701.0 218L702.7 233L704.9 249L707.3 265L709.9 283L712.5 301L715.3 319L718.3 339L721.2 360L724.2 381L727.5 404L731.3 427M738.0 477L742.7 504L748.0 532L753.8 561L759.9 592L766.1 623L771.6 656L777.8 691L783.7 727L783.7 764M746.0 278L748.1 288L750.5 299L753.4 311L756.6 323L760.0 336L763.2 351M778.3 418L782.6 437L787.6 458L791.8 479M815.7 579L823.2 608L830.8 638L837.4 669L844.4 702L851.1 736L851.1 773"/>
<path stroke="#d8d8e2" stroke-width="1.1" stroke-opacity="0.9" fill="none" d="M681.1 123L682.5 160L684.5 192L685.7 207M689.0 239L691.2 256L693.5 274M698.5 312L701.2 332M709.5 398L713.0 422L715.8 447L718.9 473L723.3 501L728.3 529L733.5 558L739.3 589L745.0 621M756.1 689L761.7 725L761.7 763M719.8 180L722.5 209L725.9 235L727.7 248L729.8 261L732.4 275L735.2 290L738.2 305L741.2 322L744.5 339M751.3 377L754.8 397L758.7 418L763.2 440L766.9 463L771.0 488L776.3 514L782.4 541L788.8 569L795.8 598L802.7 629L808.9 662L815.5 696L821.8 731L821.8 768M725.0 192L728.0 219L731.5 245L733.4 256L735.6 269L738.3 283L741.2 297L744.3 312L747.4 328L750.7 345L754.3 363L757.8 381L761.4 401L765.4 422M773.9 467L778.1 491M789.8 543L796.4 571L803.5 600L810.6 631L816.9 663M830.0 732L830.0 769M734.4 225L737.7 248L741.6 270L743.6 280L746.0 292L748.8 304L751.9 317L755.2 330L758.4 345L761.9 361L765.7 377L769.3 395M777.4 433L782.2 454L786.3 476L790.8 500L796.4 524L802.9 550L809.8 577L817.2 606L824.7 636M838.1 701L844.7 735L844.7 772"/>
<path stroke="#d8d8e2" stroke-width="1.1" stroke-opacity="0.8" fill="none" d="M701.8 146L704.0 180L706.7 210L708.2 224L710.0 239L712.3 254L714.8 270L717.5 287L720.2 305L723.2 323L726.3 343L729.3 363L732.4 384L735.9 406L739.9 430L743.3 454L746.9 479L751.8 506L757.3 534L763.2 563L769.6 593L776.0 624L781.7 657L788.0 692L794.0 728L794.0 765M729.9 210L733.1 235L736.7 258L738.7 269L741.0 281L743.7 294L746.8 308L750.0 322L753.1 337L756.6 353M763.8 389L767.5 408L771.6 428L776.4 449L780.4 472M803.3 574L810.6 603M824.3 666L831.1 699L837.6 734L837.6 770M749.9 288L752.1 297L754.6 308L757.6 319L760.8 331M767.6 357L771.2 372L775.2 388M782.9 422L787.3 441L792.4 462L796.7 483L801.3 506L807.2 530L813.9 555L821.0 582L828.7 610L836.3 639L843.0 671L850.1 703L856.8 738L856.8 774"/>
<path stroke="#d8d8e2" stroke-width="1.1" stroke-opacity="0.2" fill="none" d="M759.6 314L764.2 328L766.5 335L769.3 343L772.4 352M783.2 384L787.0 397L791.3 411L795.3 426L799.5 442L804.3 459L809.6 478L814.3 498L819.2 519L825.4 542L832.5 566L840.0 591L848.1 619L856.2 647L863.2 677L870.5 709L877.5 743L877.5 778M756.2 306L760.3 318L764.9 331L767.3 338L770.0 346L773.2 355L776.7 364L780.4 375L784.0 386L787.8 399L792.1 413L796.1 427L800.4 443L805.1 461L810.5 479M833.4 567L840.9 592L849.1 619L857.2 648L864.2 678L871.6 710L878.6 743L878.6 779"/>
<path stroke="#0d0d11" stroke-width="2.3" fill="none" d="M450 220.2L463 213.2L476 206.8L490 200.1L505 194.9L520 190.0L536 185.2L551 181.1L567 178.6L582 176.2L598 175.2L613 175.5L628 175.9L643 178.8L657 181.7L671 186.6L684 191.4L696 200.5L708 210.1L718 222.6L728 237.3L737 255.3L744 273.2L751 287.9L756 301.1L761 311.5L764 321.7L766 329.5L766 332.1M447 235.4L460 228.5L474 222.2L489 215.6L504 210.5L519 205.7L535 201.0L550 196.9L566 194.6L582 192.2L598 191.2L613 191.5L629 191.8L644 194.6L658 197.3L672 202.0L685 206.5L698 215.0L709 224.1L720 235.8L730 249.7L739 266.7L747 283.5L753 297.3L759 309.8L763 319.6L766 329.2L768 336.6L769 339.0M445 251.2L458 244.5L472 238.3L487 231.8L502 226.8L518 222.1L533 217.5L550 213.5L566 211.1L582 208.8L598 207.8L614 208.1L629 208.4L644 211.0L659 213.6L673 218.0L687 222.2L699 230.2L711 238.7L722 249.8L732 262.8L741 278.8L749 294.6L756 307.6L761 319.3L766 328.5L769 337.6L771 344.5L771 346.8M443 267.6L457 261.1L471 255.0L486 248.6L501 243.7L517 239.1L533 234.6L549 230.7L566 228.4L582 226.1L598 225.1L614 225.4L630 225.7L646 228.1L661 230.5L675 234.6L688 238.6L701 246.1L713 254.1L725 264.5L735 276.7L744 291.6L752 306.5L759 318.7L764 329.7L769 338.3L772 346.8L774 353.2L775 355.4M441 284.7L455 278.3L470 272.3L485 266.2L500 261.3L516 256.8L533 252.4L549 248.5L566 246.3L583 244.1L599 243.1L615 243.3L631 243.6L647 245.9L662 248.1L677 252.0L691 255.7L704 262.7L716 270.2L727 279.9L738 291.3L747 305.3L755 319.2L762 330.6L768 340.9L772 348.9L775 356.9L777 362.9L778 364.9M439 302.6L454 296.3L468 290.4L484 284.4L500 279.7L516 275.2L532 270.9L549 267.1L566 265.0L583 262.8L600 261.8L617 262.0L633 262.3L649 264.4L664 266.5L679 270.1L693 273.6L706 280.1L719 287.1L730 296.1L741 306.8L750 319.8L758 332.8L765 343.4L771 353.0L776 360.5L779 367.9L781 373.6L782 375.5M438 321.1L453 315.0L468 309.3L483 303.3L499 298.7L516 294.4L533 290.1L550 286.5L567 284.3L584 282.2L601 281.3L618 281.5L634 281.7L650 283.7L666 285.6L681 289.0L695 292.2L709 298.3L721 304.8L733 313.2L744 323.1L753 335.2L762 347.3L769 357.2L775 366.1L779 373.1L783 380.0L785 385.2L785 387.0M437 340.5L452 334.4L467 328.9L483 323.1L499 318.6L516 314.3L533 310.2L550 306.6L567 304.5L585 302.4L602 301.5L619 301.7L636 301.9L652 303.8L668 305.5L683 308.6L698 311.6L711 317.3L724 323.3L736 331.1L747 340.3L757 351.6L765 362.7L772 371.9L778 380.2L783 386.6L786 393.0L789 397.9L789 399.5M436 360.6L450 354.7L466 349.3L482 343.6L498 339.2L515 335.1L533 331.0L550 327.5L568 325.5L586 323.5L603 322.6L621 322.7L638 322.9L654 324.6L670 326.3L686 329.2L701 331.9L714 337.1L727 342.7L739 349.9L750 358.4L760 368.8L769 379.1L776 387.6L782 395.3L787 401.3L791 407.2L793 411.7L793 413.2M434 381.5L449 375.8L464 370.5L481 365.0L498 360.7L515 356.7L533 352.7L550 349.3L568 347.3L586 345.3L604 344.5L622 344.6L639 344.8L656 346.4L672 347.9L688 350.5L703 353.1L717 357.9L730 363.0L743 369.7L754 377.5L764 387.1L773 396.6L780 404.4L786 411.5L791 417.0L795 422.4L797 426.6L797 428.0M432 403.3L447 397.8L463 392.6L480 387.2L497 383.1L514 379.1L532 375.3L551 372.0L569 370.0L587 368.1L605 367.3L623 367.3L641 367.5L658 369.0L675 370.4L691 372.8L706 375.1L720 379.5L734 384.3L746 390.4L757 397.6L767 406.4L776 415.1L784 422.3L790 428.8L795 433.9L799 438.9L801 442.7L802 443.9M430 426.1L445 420.6L462 415.6L478 410.4L496 406.3L514 402.5L532 398.7L551 395.5L569 393.6L588 391.7L606 390.9L625 391.0L643 391.2L660 392.5L677 393.8L693 396.0L709 398.1L723 402.2L737 406.5L750 412.1L761 418.7L772 426.8L781 434.8L788 441.3L795 447.3L800 451.9L804 456.5L806 460.0L807 461.1M428 449.7L444 444.4L460 439.5L477 434.5L495 430.5L513 426.8L532 423.1L551 420.0L570 418.2L589 416.3L608 415.6L626 415.6L645 415.8L663 417.0L680 418.1L696 420.2L712 422.1L727 425.8L741 429.7L754 434.9L766 440.9L776 448.2L786 455.5L793 461.5L800 466.9L805 471.2L809 475.4L811 478.5L812 479.6M425 474.3L441 469.2L458 464.4L476 459.5L494 455.7L513 452.1L532 448.5L551 445.5L570 443.7L589 441.9L609 441.2L628 441.2L646 441.4L664 442.5L682 443.5L699 445.4L715 447.1L730 450.5L744 454.1L757 458.7L769 464.2L780 470.9L790 477.5L798 483.0L804 487.9L810 491.7L814 495.5L816 498.4L817 499.4M423 500.0L439 495.0L457 490.4L475 485.6L493 481.9L512 478.4L531 474.9L551 472.0L571 470.3L590 468.5L610 467.8L629 467.8L648 468.0L667 469.0L684 469.9L702 471.6L718 473.2L734 476.2L748 479.5L761 483.7L774 488.6L785 494.7L794 500.7L802 505.6L809 510.1L815 513.6L818 517.0L821 519.6L821 520.5M422 526.7L439 521.8L456 517.4L474 512.7L493 509.1L512 505.8L532 502.4L552 499.6L572 497.9L592 496.2L612 495.5L632 495.5L651 495.6L670 496.5L688 497.4L706 498.9L722 500.4L738 503.1L753 506.0L766 509.8L779 514.3L790 519.7L800 525.2L808 529.6L815 533.6L821 536.8L825 539.9L827 542.3L828 543.0M421 554.4L438 549.8L456 545.5L474 541.0L493 537.5L513 534.2L533 531.0L554 528.2L574 526.6L594 525.0L615 524.3L635 524.3L655 524.4L674 525.2L692 526.0L710 527.4L727 528.7L743 531.1L758 533.8L772 537.2L785 541.2L796 546.1L806 551.0L815 555.0L822 558.6L828 561.4L832 564.2L834 566.3L835 567.0M419 583.4L437 578.9L455 574.7L474 570.4L494 567.0L514 563.9L534 560.7L555 558.1L576 556.5L597 554.9L618 554.3L638 554.3L658 554.4L678 555.1L697 555.8L715 557.0L733 558.2L749 560.4L764 562.7L779 565.8L791 569.4L803 573.7L813 578.1L822 581.7L829 584.9L835 587.4L839 589.9L842 591.8L842 592.5M418 613.5L436 609.2L455 605.2L474 601.0L494 597.7L515 594.7L536 591.7L557 589.1L578 587.6L600 586.1L621 585.4L642 585.4L662 585.5L682 586.2L702 586.8L720 587.9L738 588.9L755 590.9L771 592.9L785 595.7L798 598.9L810 602.8L821 606.6L830 609.8L837 612.7L843 615.0L847 617.2L850 618.9L850 619.4M417 644.9L435 640.7L454 636.9L474 632.8L494 629.7L515 626.8L537 623.9L558 621.4L580 619.9L602 618.5L624 617.9L645 617.8L666 617.9L687 618.5L707 619.0L726 620.0L744 620.9L761 622.6L777 624.5L792 626.9L805 629.7L818 633.2L828 636.6L837 639.5L845 642.0L851 644.0L855 646.0L858 647.5L859 648.0M417 677.6L435 673.6L454 669.8L475 666.0L495 663.0L517 660.1L539 657.3L561 655.0L583 653.6L605 652.2L627 651.6L649 651.5L670 651.6L691 652.1L711 652.6L731 653.4L749 654.2L766 655.8L783 657.4L798 659.5L812 662.0L824 665.1L835 668.1L844 670.6L852 672.8L858 674.6L862 676.3L865 677.7L866 678.1M418 711.6L437 707.8L456 704.2L477 700.5L498 697.6L520 694.8L542 692.2L564 689.9L587 688.5L609 687.2L631 686.6L653 686.6L675 686.6L696 687.1L717 687.5L736 688.2L755 689.0L773 690.3L789 691.7L804 693.6L818 695.8L831 698.5L842 701.1L851 703.3L859 705.3L865 706.8L869 708.4L872 709.5L873 709.9M420 747.0L438 743.3L458 739.9L479 736.3L500 733.6L522 731.0L545 728.4L567 726.2L590 724.9L613 723.6L635 723.1L658 723.0L680 723.1L701 723.5L722 723.8L742 724.5L760 725.1L778 726.3L795 727.5L811 729.2L825 731.1L837 733.4L848 735.7L858 737.6L866 739.4L872 740.7L876 742.0L879 743.1L880 743.4M420 783.9L438 780.4L458 777.1L479 773.7L500 771.0L522 768.5L545 766.1L567 764.0L590 762.7L613 761.5L635 761.0L658 760.9L680 761.0L701 761.3L722 761.6L742 762.2L760 762.7L778 763.8L795 764.8L811 766.3L825 767.9L837 770.0L848 772.0L858 773.6L866 775.1L872 776.3L876 777.5L879 778.3L880 778.6"/>
</g>
<g clip-path="url(#cl)">
<rect x="250" y="100" width="300" height="560" fill="#3e414c"/>
<path fill="#303440" d="M370 347L370 347L367 356L367 356ZM441 216L444 214L443 224L440 226ZM451 211L454 209L453 219L450 221ZM367 356L367 356L365 364L365 364ZM376 328L377 322L375 330L373 336ZM450 221L453 219L451 229L448 231ZM368 360L369 356L367 365L366 369ZM371 347L372 342L370 351L369 356ZM425 244L428 241L427 251L424 254ZM435 238L438 236L436 246L433 248ZM441 234L445 232L443 242L440 244ZM451 229L455 227L453 237L450 239ZM362 372L363 372L360 381L360 381ZM369 356L370 351L368 360L366 365ZM371 345L372 339L370 348L369 354ZM424 254L427 251L425 261L422 264ZM440 244L443 242L441 253L438 254ZM453 237L457 235L455 245L452 247ZM461 233L464 232L463 242L459 244ZM363 379L364 377L362 386L361 388ZM371 342L373 335L371 345L370 351ZM373 338L374 330L373 340L371 347ZM457 265L461 263L460 274L456 275ZM363 381L365 376L363 385L361 391ZM438 284L441 282L440 293L437 294ZM371 352L373 349L371 359L369 362ZM377 343L379 340L377 350L375 353ZM416 305L420 303L419 313L415 315ZM459 284L463 283L462 294L458 295ZM369 362L371 359L370 369L368 372ZM428 319L432 317L431 328L427 330ZM425 363L428 362L427 373L423 375ZM443 356L447 354L447 365L443 367ZM427 373L431 372L430 383L426 385ZM422 386L426 385L425 396L421 398ZM424 408L428 407L427 419L423 420Z"/>
<path fill="#404450" d="M370 347L370 347L367 355L367 356ZM370 347L370 347L368 355L367 355ZM370 347L371 347L368 355L368 355ZM383 292L385 284L383 293L381 301ZM387 276L388 272L386 282L385 285ZM377 322L378 315L376 324L375 330ZM378 315L380 308L378 317L376 324ZM381 301L383 293L381 303L379 310ZM390 276L392 272L390 282L388 285ZM433 229L436 228L435 238L432 239ZM366 363L366 363L364 371L364 372ZM366 363L367 363L365 371L364 371ZM378 317L379 310L377 319L375 326ZM379 310L381 303L378 312L377 319ZM382 300L384 297L381 307L380 310ZM376 321L378 313L376 323L374 330ZM358 389L359 389L357 398L356 398ZM359 389L360 389L358 397L357 398ZM360 389L360 388L358 397L358 397ZM370 351L371 345L369 354L368 360ZM378 319L380 316L378 326L376 329ZM451 258L454 256L453 266L450 268ZM362 387L363 383L361 392L360 396ZM362 387L363 381L361 391L360 396ZM365 376L366 370L364 379L363 385ZM353 416L354 415L352 425L352 425ZM357 409L358 405L356 415L355 419ZM373 349L375 346L373 356L371 359ZM386 331L388 327L387 338L384 341ZM426 299L430 297L429 308L425 310ZM361 395L363 389L361 399L360 404ZM373 356L375 353L374 363L372 366ZM379 347L382 344L381 355L378 358ZM425 310L429 308L428 319L425 320ZM349 435L349 435L348 444L348 444ZM353 431L354 428L353 437L352 441ZM355 429L356 425L355 434L353 439ZM360 409L362 402L360 413L359 419ZM382 362L384 359L383 369L381 372ZM365 393L367 389L366 400L364 403ZM394 360L397 358L396 369L393 370ZM364 403L366 400L364 410L362 414ZM422 353L425 352L425 363L421 365ZM359 427L360 420L359 431L357 437ZM357 437L359 431L357 442L355 448ZM389 404L392 402L391 413L388 415ZM427 419L431 417L430 429L426 431Z"/>
<path fill="#3c4450" d="M370 347L370 347L368 355L368 355ZM368 355L368 355L366 363L365 364ZM360 381L360 381L358 389L358 390ZM365 369L366 365L365 374L364 378ZM366 365L368 360L366 369L365 374ZM373 335L374 328L373 338L371 345ZM437 264L440 263L439 273L436 275ZM357 398L357 398L355 407L355 407ZM361 391L362 387L360 396L359 400ZM374 332L376 329L374 339L373 342ZM359 400L360 396L358 405L357 409ZM360 396L361 391L360 400L358 405ZM440 293L444 291L443 302L439 303ZM356 415L357 410L356 420L355 424ZM364 383L366 376L364 386L363 393ZM436 305L439 303L439 314L435 316ZM350 434L351 434L350 443L349 443ZM352 434L352 433L351 443L350 443ZM360 404L361 399L360 409L359 414ZM363 393L364 386L363 396L362 402ZM396 338L399 336L398 347L395 349ZM357 420L359 414L357 424L356 429ZM367 382L369 379L367 389L365 393ZM347 453L347 453L345 463L345 463ZM350 459L351 454L350 464L348 469ZM341 483L341 483L339 493L339 493ZM407 404L410 402L409 414L406 416ZM414 400L418 399L416 411L413 412ZM429 395L433 393L432 405L428 407ZM354 463L356 457L354 468L352 475ZM350 486L352 480L350 491L348 497ZM366 464L369 462L367 473L364 476ZM396 443L399 441L398 453L395 455ZM395 455L398 453L397 466L393 467Z"/>
<path fill="#343844" d="M371 347L371 346L369 355L368 355ZM374 340L375 335L373 344L372 348ZM375 335L376 330L374 339L373 344ZM378 319L379 313L377 322L376 328ZM438 218L441 216L440 226L436 228ZM367 355L368 355L365 364L365 364ZM383 293L385 285L382 295L381 303ZM440 226L443 224L441 234L438 236ZM365 364L365 364L363 372L362 372ZM370 352L371 347L369 356L368 361ZM372 342L373 336L371 345L370 351ZM375 330L376 324L374 333L372 339ZM382 295L384 291L382 300L380 304ZM363 372L363 372L360 381L360 381ZM363 372L363 372L361 381L360 381ZM366 369L367 365L365 374L364 377ZM368 361L369 356L366 365L365 369ZM370 351L371 345L369 354L368 360ZM378 312L380 304L378 313L376 321ZM433 248L436 246L435 256L431 258ZM361 381L361 380L359 389L359 389ZM370 348L371 342L370 351L368 357ZM435 256L438 254L437 264L433 266ZM358 390L358 390L356 398L356 398ZM374 330L376 323L374 332L373 340ZM420 274L424 272L422 282L419 284ZM366 367L368 360L366 370L365 376ZM461 263L465 261L464 272L460 274ZM354 407L355 407L353 416L352 416ZM355 407L355 407L353 416L353 416ZM355 407L355 407L353 416L353 416ZM355 407L356 406L354 415L353 416ZM358 404L359 400L357 409L356 413ZM368 363L369 357L367 366L366 373ZM371 350L373 342L371 352L369 359ZM428 289L431 287L430 297L426 299ZM353 416L353 416L351 425L351 425ZM355 415L356 413L354 422L354 424ZM433 296L437 294L436 305L432 307ZM415 315L419 313L418 324L414 326ZM429 308L432 307L432 317L428 319ZM447 300L451 298L450 309L446 311ZM374 363L376 361L375 371L373 374ZM446 311L450 309L450 320L446 322ZM450 309L454 308L453 319L450 320ZM414 337L417 335L416 346L413 348ZM413 348L416 346L415 357L412 359ZM429 350L433 349L432 360L428 362ZM456 340L460 338L460 350L455 351ZM421 365L425 363L423 375L420 376ZM428 362L432 360L431 372L427 373ZM447 354L451 352L451 364L447 365ZM451 352L455 351L455 363L451 364ZM359 431L361 424L359 435L357 442ZM447 365L451 364L450 376L446 377ZM451 364L455 363L454 374L450 376ZM421 398L425 396L424 408L420 409ZM433 393L437 392L436 404L432 405ZM441 390L445 389L444 401L440 402ZM432 405L436 404L435 416L431 417Z"/>
<path fill="#3c404c" d="M371 346L372 346L369 354L369 355ZM372 346L373 344L371 352L370 354ZM385 284L387 276L385 285L383 293ZM444 214L448 213L446 222L443 224ZM369 354L370 354L368 362L367 363ZM370 354L371 352L368 360L368 362ZM373 344L374 339L371 347L370 352ZM375 333L376 328L373 336L372 342ZM446 222L450 221L448 231L445 232ZM365 364L365 364L363 372L363 372ZM365 364L365 364L363 372L363 372ZM365 364L366 363L363 372L363 372ZM369 356L370 352L368 361L367 365ZM381 303L382 295L380 304L378 312ZM432 239L435 238L433 248L430 249ZM364 372L364 371L362 380L361 380ZM386 294L388 291L385 301L383 304ZM360 381L360 381L359 389L358 389ZM364 377L365 374L363 382L362 386ZM368 360L369 354L367 363L366 369ZM380 310L381 307L380 316L378 319ZM359 389L359 389L357 398L357 398ZM361 388L362 386L360 395L359 397ZM365 374L366 369L364 378L363 383ZM380 316L382 313L380 323L378 326ZM382 313L384 310L382 320L380 323ZM356 398L357 398L355 407L354 407ZM365 372L366 367L365 376L363 381ZM368 360L369 354L368 363L366 370ZM380 323L382 320L380 330L378 333ZM439 273L443 271L441 282L438 284ZM443 271L446 270L445 280L441 282ZM354 407L354 407L352 416L352 416ZM354 407L354 407L352 416L352 416ZM366 370L368 363L366 373L364 379ZM378 333L380 330L379 340L377 343ZM356 413L357 409L355 419L354 422ZM366 373L367 366L366 376L364 383ZM367 366L369 359L367 369L366 376ZM375 346L377 343L375 353L373 356ZM437 294L440 293L439 303L436 305ZM352 425L353 424L352 434L351 434ZM366 376L367 369L366 379L364 386ZM367 369L369 362L368 372L366 379ZM349 435L349 435L348 444L348 444ZM366 379L368 372L367 382L365 389ZM354 433L355 429L353 439L352 443ZM387 355L390 352L389 363L386 366ZM446 322L450 320L449 331L445 333ZM362 406L364 400L362 410L360 416ZM430 339L434 338L433 349L429 350ZM412 359L415 357L414 368L410 370ZM349 463L350 459L348 469L347 473ZM369 405L371 403L369 413L367 416ZM409 381L413 379L412 391L408 393ZM420 376L423 375L422 386L419 387ZM419 387L422 386L421 398L418 399ZM426 385L430 383L429 395L425 396ZM434 382L438 380L437 392L433 393ZM438 380L442 379L441 390L437 392ZM406 416L409 414L408 426L404 428ZM423 420L427 419L426 431L422 432Z"/>
<path fill="#444854" d="M372 346L372 346L370 354L369 354ZM382 300L383 292L381 301L380 308ZM363 372L363 372L360 381L360 381ZM367 365L368 361L365 369L365 374ZM365 374L365 369L364 378L363 382ZM368 357L370 351L368 360L366 367ZM364 378L365 372L363 381L362 387ZM369 354L371 347L369 357L368 363ZM376 329L378 326L376 336L374 339ZM446 270L450 268L449 279L445 280ZM376 336L378 333L377 343L375 346ZM383 334L386 331L384 341L382 344ZM355 419L356 415L355 424L354 428ZM371 359L373 356L372 366L370 369ZM381 355L383 351L382 362L380 365ZM383 351L386 348L384 359L382 362ZM425 320L428 319L427 330L424 331ZM363 396L365 389L364 400L362 406ZM431 328L434 327L434 338L430 339ZM445 333L449 331L448 343L444 344ZM354 439L356 434L354 444L353 449ZM444 344L448 343L447 354L443 356ZM439 369L443 367L442 379L438 380ZM408 426L411 424L410 436L407 438Z"/>
<path fill="#38404c" d="M373 344L374 340L372 348L371 352ZM381 307L382 300L380 308L378 315ZM454 209L458 207L456 217L453 219ZM372 348L373 344L370 352L369 356ZM368 362L368 360L366 369L365 371ZM373 336L375 330L372 339L371 345ZM363 372L364 372L361 380L361 381ZM360 381L361 381L359 389L359 389ZM362 380L362 380L360 388L360 389ZM378 313L380 310L378 319L376 323ZM452 247L455 245L454 256L451 258ZM363 382L364 378L362 387L361 391ZM356 398L356 398L354 407L354 407ZM361 392L362 387L360 396L359 401ZM431 287L434 285L433 296L430 297ZM354 415L355 415L353 424L352 425ZM364 379L366 373L364 383L363 389ZM444 291L448 289L447 300L443 302ZM358 405L360 400L358 410L357 415ZM356 420L357 415L356 425L355 429ZM372 384L374 381L372 392L370 395ZM345 472L346 472L344 481L344 482ZM348 469L350 464L348 475L347 479ZM355 448L357 442L356 453L354 459ZM356 453L358 446L356 457L354 463ZM364 438L366 435L364 447L362 449ZM349 481L350 475L348 486L347 492ZM419 421L423 420L422 432L418 433ZM395 478L399 476L397 489L393 490Z"/>
<path fill="#383c48" d="M376 330L377 325L375 333L374 339ZM367 356L367 355L365 364L365 364ZM368 355L369 355L366 363L366 363ZM385 285L386 282L384 291L382 295ZM366 363L366 363L364 372L363 372ZM445 232L448 231L446 241L443 242ZM448 231L451 229L450 239L446 241ZM377 319L378 312L376 321L374 328ZM380 304L382 300L380 310L378 313ZM436 246L440 244L438 254L435 256ZM360 381L360 381L358 390L358 390ZM369 354L370 348L368 357L367 363ZM374 328L376 321L374 330L373 338ZM383 304L385 301L384 310L382 313ZM359 389L359 389L357 398L357 398ZM367 363L368 357L366 367L365 372ZM371 345L373 338L371 347L369 354ZM376 323L378 319L376 329L374 332ZM458 254L462 252L461 263L457 265ZM363 383L364 378L362 387L361 392ZM371 347L373 340L371 350L369 357ZM373 340L374 332L373 342L371 350ZM429 278L432 276L431 287L428 289ZM450 268L453 266L452 277L449 279ZM360 396L361 392L359 401L358 405ZM369 357L371 350L369 359L367 366ZM374 339L376 336L375 346L373 349ZM352 416L353 416L351 425L351 425ZM361 391L363 385L361 395L360 400ZM369 359L371 352L369 362L367 369ZM351 425L351 425L349 435L349 435ZM375 353L377 350L376 361L374 363ZM361 399L363 393L362 402L360 409ZM414 326L418 324L417 335L414 337ZM373 374L375 371L374 381L372 384ZM427 330L431 328L430 339L426 341ZM423 342L426 341L425 352L422 353ZM426 341L430 339L429 350L425 352ZM393 370L396 369L395 380L392 381ZM425 352L429 350L428 362L425 363ZM362 414L364 410L363 421L361 424ZM423 375L427 373L426 385L422 386ZM435 370L439 369L438 380L434 382ZM408 393L412 391L410 402L407 404ZM430 383L434 382L433 393L429 395ZM418 433L422 432L420 444L417 445Z"/>
<path fill="#343c48" d="M377 325L378 319L376 328L375 333ZM392 266L394 263L392 272L390 276ZM448 213L451 211L450 221L446 222ZM436 228L440 226L438 236L435 238ZM365 371L366 369L364 377L363 379ZM372 339L374 333L371 342L370 348ZM374 333L375 326L373 335L371 342ZM361 380L362 380L360 389L359 389ZM422 264L425 261L424 272L420 274ZM463 242L467 240L466 251L462 252ZM358 390L358 389L356 398L356 398ZM362 386L363 382L361 391L360 395ZM356 398L356 398L354 407L354 407ZM359 397L360 395L358 404L357 406ZM356 406L356 406L355 415L354 415ZM418 294L421 292L420 303L416 305ZM351 425L351 425L350 434L349 435ZM354 424L354 422L353 431L352 433ZM354 422L355 419L354 428L353 431ZM364 386L366 379L365 389L363 396ZM368 372L370 369L369 379L367 382ZM346 454L346 454L345 463L345 463ZM453 330L457 328L456 340L452 341ZM360 420L362 414L361 424L359 431ZM410 370L414 368L413 379L409 381ZM365 427L368 424L366 435L364 438ZM442 379L446 377L445 389L441 390ZM418 399L421 398L420 409L416 411ZM416 411L420 409L419 421L415 423ZM403 440L407 438L405 450L402 452ZM422 432L426 431L424 443L420 444ZM402 452L405 450L404 462L400 464Z"/>
<path fill="#484c58" d="M379 313L381 307L378 315L377 322ZM367 363L368 362L365 371L365 371ZM364 371L365 371L362 380L362 380ZM365 371L365 371L363 379L362 380ZM362 380L363 379L361 388L360 388ZM381 307L383 304L382 313L380 316ZM366 369L367 363L365 372L364 378ZM402 297L404 295L403 305L400 307ZM381 337L383 334L382 344L379 347ZM384 341L387 338L386 348L383 351ZM357 415L358 410L357 420L356 425ZM372 366L374 363L373 374L371 376ZM386 348L388 345L387 355L384 359ZM388 345L391 342L390 352L387 355ZM432 317L435 316L434 327L431 328ZM384 359L387 355L386 366L383 369ZM395 349L398 347L397 358L394 360ZM424 331L427 330L426 341L423 342ZM351 454L353 449L351 460L350 464ZM392 381L395 380L393 391L390 393ZM440 357L443 356L443 367L439 369ZM399 387L403 385L401 397L398 398ZM403 385L406 383L405 395L401 397ZM431 372L435 370L434 382L430 383ZM386 427L389 425L388 437L385 438ZM392 423L396 421L394 433L391 435ZM413 412L416 411L415 423L411 424ZM401 430L404 428L403 440L399 441ZM383 450L386 448L385 460L381 462Z"/>
<path fill="#5c606c" d="M388 272L390 270L388 279L386 282ZM388 279L390 276L388 285L386 288ZM430 232L433 229L432 239L428 241ZM412 263L415 261L413 270L410 273ZM384 310L386 307L384 317L382 320ZM427 269L430 268L429 278L426 280ZM447 259L451 258L450 268L446 270ZM390 317L392 314L390 324L388 327ZM396 319L398 317L397 328L394 329ZM369 387L372 384L370 395L368 397ZM419 344L423 342L422 353L418 355ZM390 372L393 370L392 381L389 383ZM383 388L386 385L385 396L382 399ZM406 383L409 381L408 393L405 395ZM379 421L382 418L380 430L377 433ZM383 428L386 427L385 438L381 440Z"/>
<path fill="#606470" d="M390 270L392 266L390 276L388 279ZM387 338L389 334L388 345L386 348ZM435 316L439 314L438 325L434 327ZM371 376L373 374L372 384L369 387ZM375 371L377 368L376 378L374 381ZM385 377L387 374L386 385L383 388ZM396 369L399 367L398 378L395 380ZM405 363L408 361L407 372L404 374ZM366 408L369 405L367 416L365 419ZM376 405L379 402L378 413L375 416ZM393 391L396 389L395 400L392 402ZM385 417L388 415L386 427L383 428ZM377 433L380 430L379 441L376 444Z"/>
<path fill="#b0b4c0" d="M394 263L396 260L394 269L392 272ZM400 253L403 249L401 259L398 262Z"/>
<path fill="#9498a4" d="M396 260L398 256L396 266L394 269ZM394 287L397 284L395 294L393 297ZM398 290L400 289L399 299L396 300ZM419 313L422 311L421 322L418 324ZM408 330L411 328L410 339L407 341ZM409 350L413 348L412 359L408 361ZM379 402L382 399L380 410L378 413Z"/>
<path fill="#989ca8" d="M398 256L400 253L398 262L396 266ZM406 259L408 257L406 267L404 269ZM414 278L417 276L416 286L413 289ZM396 300L399 299L397 309L395 311ZM404 295L407 293L406 303L403 305Z"/>
<path fill="#b8c0cc" d="M403 249L405 245L403 255L401 259ZM419 266L422 264L420 274L417 276ZM411 328L414 326L414 337L410 339Z"/>
<path fill="#6c707c" d="M405 245L407 242L405 251L403 255ZM418 234L420 231L419 241L416 243ZM421 239L424 236L422 246L419 248ZM396 272L399 268L396 278L394 281ZM428 241L432 239L430 249L427 251ZM394 329L397 328L396 338L393 340ZM421 322L425 320L424 331L420 333ZM406 352L409 350L408 361L405 363ZM418 355L422 353L421 365L417 366Z"/>
<path fill="#e8ecf8" d="M407 242L410 240L408 249L405 251Z"/>
<path fill="#c8d0dc" d="M410 240L412 238L410 247L408 249Z"/>
<path fill="#4c5460" d="M412 238L415 236L413 245L410 247ZM383 327L385 324L383 334L381 337ZM385 324L387 321L386 331L383 334ZM439 303L443 302L443 313L439 314ZM394 412L397 410L396 421L392 423ZM400 408L404 406L402 418L399 420Z"/>
<path fill="#a4a8b4" d="M415 236L418 234L416 243L413 245ZM409 320L412 318L411 328L408 330ZM412 318L415 315L414 326L411 328Z"/>
<path fill="#545864" d="M420 231L423 229L421 239L419 241ZM443 242L446 241L445 251L441 253ZM397 284L399 281L398 290L395 294ZM428 259L431 258L430 268L427 269ZM448 249L452 247L451 258L447 259ZM389 311L391 307L390 317L387 321ZM426 280L429 278L428 289L424 290ZM423 301L426 299L425 310L422 311ZM378 358L381 355L380 365L377 368ZM391 342L393 340L392 351L390 352ZM393 340L396 338L395 349L392 351ZM439 314L443 313L442 323L438 325ZM401 345L404 343L403 354L400 356ZM383 369L386 366L385 377L382 380ZM433 349L437 347L436 359L432 360ZM440 346L444 344L443 356L440 357ZM401 376L404 374L403 385L399 387ZM417 366L421 365L420 376L416 377ZM436 359L440 357L439 369L435 370ZM398 398L401 397L400 408L397 410ZM410 402L414 400L413 412L409 414Z"/>
<path fill="#646874" d="M423 229L426 227L424 236L421 239ZM399 274L401 271L399 281L397 284ZM411 280L414 278L413 289L410 291ZM407 311L410 309L409 320L406 322ZM403 324L406 322L405 332L402 334ZM443 313L446 311L446 322L442 323ZM381 372L383 369L382 380L379 383ZM378 394L381 391L379 402L376 405ZM382 399L385 396L383 407L380 410ZM413 379L416 377L415 389L412 391Z"/>
<path fill="#6c7480" d="M426 227L429 224L427 234L424 236ZM399 336L402 334L401 345L398 347Z"/>
<path fill="#2c303c" d="M429 224L432 222L430 232L427 234ZM458 207L461 205L460 215L456 217ZM443 224L446 222L445 232L441 234ZM453 219L456 217L455 227L451 229ZM438 236L441 234L440 244L436 246ZM455 227L458 225L457 235L453 237ZM455 245L459 244L458 254L454 256ZM459 244L463 242L462 252L458 254ZM462 252L466 251L465 261L461 263ZM436 275L439 273L438 284L434 285ZM445 280L449 279L448 289L444 291ZM430 297L433 296L432 307L429 308ZM455 286L459 284L458 295L454 297ZM457 317L461 316L461 327L457 328ZM452 341L456 340L455 351L451 352ZM464 337L468 335L468 347L464 348ZM443 367L447 365L446 377L442 379ZM437 392L441 390L440 402L436 404Z"/>
<path fill="#4c505c" d="M432 222L435 220L433 229L430 232ZM446 241L450 239L448 249L445 251ZM405 277L407 275L406 285L403 287ZM403 287L406 285L404 295L402 297ZM382 320L384 317L383 327L380 330ZM380 330L383 327L381 337L379 340ZM400 307L403 305L401 315L398 317ZM398 317L401 315L400 326L397 328ZM357 433L359 427L357 437L355 443ZM404 374L407 372L406 383L403 385ZM432 360L436 359L435 370L431 372ZM401 397L405 395L404 406L400 408ZM412 391L415 389L414 400L410 402ZM409 414L413 412L411 424L408 426ZM391 435L394 433L393 445L389 447Z"/>
<path fill="#505864" d="M435 220L438 218L436 228L433 229ZM417 251L419 248L418 258L415 261ZM406 267L409 265L407 275L405 277ZM444 261L447 259L446 270L443 271ZM399 367L402 365L401 376L398 378ZM396 389L399 387L398 398L395 400Z"/>
<path fill="#202430" d="M461 205L465 203L463 213L460 215ZM465 203L468 202L467 212L463 213ZM472 200L476 198L474 208L471 210ZM474 208L478 206L477 216L473 218ZM478 206L482 205L481 215L477 216ZM482 205L486 203L484 213L481 215ZM481 215L484 213L483 223L479 225ZM457 235L461 233L459 244L455 245ZM464 232L468 230L467 240L463 242ZM468 230L472 228L470 239L467 240ZM479 225L483 223L482 234L478 235ZM470 239L474 237L473 247L470 249ZM474 237L478 235L477 246L473 247ZM485 242L489 241L489 252L485 253ZM483 275L487 273L487 284L483 286ZM466 292L470 290L470 301L466 303ZM478 287L483 286L482 297L478 298ZM483 286L487 284L487 295L482 297ZM474 300L478 298L478 309L474 311ZM461 316L465 314L465 325L461 327Z"/>
<path fill="#242c38" d="M468 202L472 200L471 210L467 212ZM456 275L460 274L459 284L455 286ZM455 351L460 350L459 361L455 363Z"/>
<path fill="#242834" d="M476 198L479 196L478 206L474 208ZM463 213L467 212L466 222L462 223ZM471 210L474 208L473 218L469 220ZM466 222L469 220L468 230L464 232ZM477 216L481 215L479 225L475 227ZM466 251L470 249L469 260L465 261ZM477 246L481 244L481 255L477 256ZM481 244L485 242L485 253L481 255ZM473 258L477 256L476 267L472 269ZM481 255L485 253L484 264L480 265ZM452 277L456 275L455 286L451 287ZM468 270L472 269L471 279L467 281ZM488 262L492 261L491 272L487 273ZM479 276L483 275L483 286L478 287ZM451 298L454 297L454 308L450 309ZM474 289L478 287L478 298L474 300ZM478 298L482 297L482 308L478 309ZM465 314L470 313L469 324L465 325ZM470 313L474 311L473 322L469 324ZM465 325L469 324L468 335L464 337ZM469 324L473 322L473 334L468 335Z"/>
<path fill="#202834" d="M479 196L483 194L482 205L478 206ZM469 260L473 258L472 269L468 270ZM477 256L481 255L480 265L476 267ZM464 272L468 270L467 281L463 283ZM475 278L479 276L478 287L474 289ZM454 297L458 295L458 306L454 308ZM458 295L462 294L462 305L458 306ZM462 294L466 292L466 303L462 305ZM466 303L470 301L470 313L465 314ZM474 311L478 309L477 321L473 322Z"/>
<path fill="#181c28" d="M483 194L487 193L486 203L482 205ZM494 189L498 188L497 198L493 199ZM514 182L518 181L517 191L513 193ZM475 227L479 225L478 235L474 237ZM498 228L502 226L502 237L497 238ZM493 240L497 238L497 249L493 250ZM485 253L489 252L488 262L484 264ZM489 252L493 250L492 261L488 262ZM472 269L476 267L475 278L471 279ZM471 279L475 278L474 289L470 290Z"/>
<path fill="#1c202c" d="M487 193L491 191L489 201L486 203ZM486 203L489 201L488 211L484 213ZM489 201L493 199L492 210L488 211ZM505 195L509 194L508 204L504 206ZM473 218L477 216L475 227L472 228ZM484 213L488 211L487 221L483 223ZM488 211L492 210L491 220L487 221ZM483 223L487 221L486 232L482 234ZM487 221L491 220L490 230L486 232ZM495 219L499 217L498 228L494 229ZM499 217L503 216L502 226L498 228ZM503 216L507 215L506 225L502 226ZM486 232L490 230L489 241L485 242ZM490 230L494 229L493 240L489 241ZM502 226L506 225L506 236L502 237ZM470 249L473 247L473 258L469 260ZM497 238L502 237L501 248L497 249ZM493 250L497 249L496 260L492 261ZM480 265L484 264L483 275L479 276ZM463 283L467 281L466 292L462 294ZM467 281L471 279L470 290L466 292ZM487 273L491 272L491 283L487 284ZM470 301L474 300L474 311L470 313Z"/>
<path fill="#141c28" d="M491 191L494 189L493 199L489 201ZM501 197L505 195L504 206L500 207ZM509 194L513 193L512 203L508 204ZM496 208L500 207L499 217L495 219ZM482 234L486 232L485 242L481 244ZM492 261L496 260L496 271L491 272Z"/>
<path fill="#1c2430" d="M498 188L502 187L501 197L497 198ZM500 207L504 206L503 216L499 217ZM472 228L475 227L474 237L470 239ZM476 267L480 265L479 276L475 278ZM484 264L488 262L487 273L483 275ZM470 290L474 289L474 300L470 301Z"/>
<path fill="#101420" d="M502 187L506 185L505 195L501 197ZM510 184L514 182L513 193L509 194ZM497 198L501 197L500 207L496 208ZM492 210L496 208L495 219L491 220ZM507 215L511 213L510 224L506 225ZM494 229L498 228L497 238L493 240Z"/>
<path fill="#0c101c" d="M506 185L510 184L509 194L505 195ZM513 193L517 191L516 202L512 203Z"/>
<path fill="#303844" d="M368 355L368 355L366 363L366 363ZM371 352L372 348L369 356L368 360ZM374 339L375 333L372 342L371 347ZM376 324L378 317L375 326L374 333ZM388 285L390 282L388 291L386 294ZM431 258L435 256L433 266L430 268ZM438 254L441 253L440 263L437 264ZM430 268L433 266L432 276L429 278ZM454 256L458 254L457 265L453 266ZM373 342L374 339L373 349L371 352ZM441 282L445 280L444 291L440 293ZM449 279L452 277L451 287L448 289ZM359 401L360 396L358 405L357 410ZM432 307L436 305L435 316L432 317ZM365 389L367 382L365 393L364 400ZM364 400L365 393L364 403L362 410ZM428 407L432 405L431 417L427 419Z"/>
<path fill="#404854" d="M369 355L369 354L367 363L366 363ZM380 308L381 301L379 310L378 317ZM375 326L377 319L374 328L373 335ZM450 239L453 237L452 247L448 249ZM360 388L361 388L359 397L358 397ZM364 378L365 374L363 383L362 387ZM357 398L358 397L356 406L355 407ZM358 397L359 397L357 406L356 406ZM378 326L380 323L378 333L376 336ZM353 416L353 416L352 425L351 425ZM382 344L384 341L383 351L381 355ZM389 334L392 331L391 342L388 345ZM350 434L350 434L349 444L348 444ZM350 434L350 434L349 443L349 444ZM358 410L360 404L359 414L357 420ZM350 443L350 443L349 452L348 453ZM350 443L351 443L349 452L349 452ZM353 437L354 433L352 443L351 447ZM356 429L357 424L356 434L354 439ZM360 413L362 406L360 416L359 423ZM357 429L359 423L357 433L355 439ZM339 493L339 493L338 503L338 503ZM345 483L347 479L345 489L344 493ZM377 475L380 474L378 486L375 488ZM393 467L397 466L395 478L391 480Z"/>
<path fill="#5c6470" d="M386 282L388 279L386 288L384 291ZM386 314L389 311L387 321L385 324ZM403 354L406 352L405 363L402 365ZM441 335L445 333L444 344L440 346ZM375 416L378 413L376 424L374 427Z"/>
<path fill="#949ca8" d="M392 272L394 269L392 279L390 282ZM413 289L416 286L415 297L412 299Z"/>
<path fill="#9094a0" d="M394 269L396 266L394 275L392 279ZM393 297L395 294L394 304L391 307ZM417 276L420 274L419 284L416 286ZM400 326L403 324L402 334L399 336Z"/>
<path fill="#888c98" d="M396 266L398 262L396 272L394 275ZM421 292L424 290L423 301L420 303ZM418 324L421 322L420 333L417 335Z"/>
<path fill="#7c808c" d="M398 262L401 259L399 268L396 272ZM422 246L425 244L424 254L421 256ZM396 278L399 274L397 284L394 287ZM399 299L402 297L400 307L397 309ZM420 303L423 301L422 311L419 313ZM386 385L389 383L387 394L385 396ZM378 413L380 410L379 421L376 424Z"/>
<path fill="#a0a4b0" d="M401 259L403 255L401 264L399 268ZM421 256L424 254L422 264L419 266ZM406 285L409 283L407 293L404 295ZM416 286L419 284L418 294L415 297Z"/>
<path fill="#707480" d="M403 255L405 251L403 261L401 264ZM392 279L394 275L392 285L390 288ZM402 279L405 277L403 287L400 289ZM422 311L425 310L425 320L421 322ZM434 327L438 325L437 336L434 338ZM438 325L442 323L441 335L437 336ZM442 323L446 322L445 333L441 335ZM389 363L391 361L390 372L387 374Z"/>
<path fill="#d8dce8" d="M405 251L408 249L406 259L403 261Z"/>
<path fill="#c4c8d4" d="M408 249L410 247L408 257L406 259Z"/>
<path fill="#505460" d="M410 247L413 245L411 255L408 257ZM384 291L386 288L384 297L382 300ZM384 297L386 294L383 304L381 307ZM390 301L393 297L391 307L389 311ZM392 314L395 311L393 321L390 324ZM377 350L379 347L378 358L376 361ZM397 328L400 326L399 336L396 338ZM370 369L372 366L371 376L369 379ZM404 343L407 341L406 352L403 354ZM386 366L389 363L387 374L385 377ZM400 356L403 354L402 365L399 367ZM364 410L366 408L365 419L363 421ZM416 377L420 376L419 387L415 389ZM399 420L402 418L401 430L397 431ZM376 444L379 441L377 453L374 456Z"/>
<path fill="#b4b8c4" d="M413 245L416 243L414 253L411 255ZM401 315L404 313L403 324L400 326Z"/>
<path fill="#686c78" d="M416 243L419 241L417 251L414 253ZM385 301L388 298L386 307L384 310ZM416 268L419 266L417 276L414 278ZM441 253L445 251L444 261L440 263ZM445 251L448 249L447 259L444 261ZM386 307L388 304L386 314L384 317ZM410 291L413 289L412 299L409 301ZM409 301L412 299L410 309L407 311ZM424 290L428 289L426 299L423 301ZM402 334L405 332L404 343L401 345ZM405 332L408 330L407 341L404 343ZM390 352L392 351L391 361L389 363ZM374 381L376 378L375 389L372 392ZM379 383L382 380L381 391L378 394ZM437 347L440 346L440 357L436 359ZM389 383L392 381L390 393L387 394ZM374 408L376 405L375 416L372 419ZM387 394L390 393L389 404L386 405ZM389 425L392 423L391 435L388 437Z"/>
<path fill="#707884" d="M419 241L421 239L419 248L417 251ZM407 293L410 291L409 301L406 303ZM393 321L396 319L394 329L392 331ZM375 397L378 394L376 405L374 408ZM370 422L372 419L371 430L369 433ZM374 427L376 424L375 436L372 439Z"/>
<path fill="#646c78" d="M424 236L427 234L425 244L422 246ZM394 275L396 272L394 281L392 285ZM427 251L430 249L428 259L425 261ZM392 291L394 287L393 297L390 301ZM407 341L410 339L409 350L406 352ZM364 447L367 444L365 455L363 458Z"/>
<path fill="#2c3440" d="M427 234L430 232L428 241L425 244ZM419 284L422 282L421 292L418 294ZM434 285L438 284L437 294L433 296ZM451 287L455 286L454 297L451 298ZM453 319L457 317L457 328L453 330Z"/>
<path fill="#282c38" d="M456 217L460 215L458 225L455 227ZM467 212L471 210L469 220L466 222ZM458 225L462 223L461 233L457 235ZM462 223L466 222L464 232L461 233ZM469 220L473 218L472 228L468 230ZM467 240L470 239L470 249L466 251ZM433 266L437 264L436 275L432 276ZM473 247L477 246L477 256L473 258ZM465 261L469 260L468 270L464 272ZM460 274L464 272L463 283L459 284ZM454 308L458 306L457 317L453 319ZM462 305L466 303L465 314L461 316ZM457 328L461 327L460 338L456 340ZM461 327L465 325L464 337L460 338ZM460 338L464 337L464 348L460 350Z"/>
<path fill="#28303c" d="M460 215L463 213L462 223L458 225ZM432 276L436 275L434 285L431 287ZM453 266L457 265L456 275L452 277ZM448 289L451 287L451 298L447 300ZM458 306L462 305L461 316L457 317ZM450 320L453 319L453 330L449 331ZM449 331L453 330L452 341L448 343ZM448 343L452 341L451 352L447 354ZM446 377L450 376L449 387L445 389Z"/>
<path fill="#141824" d="M493 199L497 198L496 208L492 210ZM491 220L495 219L494 229L490 230ZM489 241L493 240L493 250L489 252Z"/>
<path fill="#585c68" d="M386 288L388 285L386 294L384 297ZM408 257L411 255L409 265L406 267ZM430 249L433 248L431 258L428 259ZM440 263L444 261L443 271L439 273ZM384 317L386 314L385 324L383 327ZM391 307L394 304L392 314L390 317ZM387 321L390 317L388 327L386 331ZM388 327L390 324L389 334L387 338ZM390 324L393 321L392 331L389 334ZM380 365L382 362L381 372L378 376ZM392 351L395 349L394 360L391 361ZM397 358L400 356L399 367L396 369ZM434 338L437 336L437 347L433 349Z"/>
<path fill="#747884" d="M390 282L392 279L390 288L388 291ZM394 281L396 278L394 287L392 291ZM418 258L421 256L419 266L416 268ZM413 270L416 268L414 278L411 280ZM409 283L411 280L410 291L407 293ZM404 313L407 311L406 322L403 324ZM392 331L394 329L393 340L391 342ZM406 322L409 320L408 330L405 332ZM398 347L401 345L400 356L397 358ZM378 376L381 372L379 383L377 386ZM437 336L441 335L440 346L437 347ZM372 392L375 389L373 400L371 403ZM387 374L390 372L389 383L386 385ZM414 368L417 366L416 377L413 379ZM369 441L372 439L370 450L368 453Z"/>
<path fill="#a8acb8" d="M399 268L401 264L399 274L396 278Z"/>
<path fill="#787c88" d="M401 264L403 261L401 271L399 274ZM415 261L418 258L416 268L413 270ZM390 294L392 291L390 301L388 304ZM425 261L428 259L427 269L424 272ZM410 309L413 307L412 318L409 320ZM420 333L424 331L423 342L419 344ZM382 380L385 377L383 388L381 391ZM369 433L371 430L369 441L367 444Z"/>
<path fill="#d0d4e0" d="M403 261L406 259L404 269L401 271Z"/>
<path fill="#ccd0dc" d="M411 255L414 253L412 263L409 265Z"/>
<path fill="#78808c" d="M414 253L417 251L415 261L412 263ZM397 309L400 307L398 317L396 319Z"/>
<path fill="#848894" d="M419 248L422 246L421 256L418 258ZM410 273L413 270L411 280L409 283ZM424 272L427 269L426 280L422 282ZM395 311L397 309L396 319L393 321ZM371 403L373 400L372 411L369 413ZM372 411L374 408L372 419L370 422ZM391 413L394 412L392 423L389 425Z"/>
<path fill="#101824" d="M504 206L508 204L507 215L503 216ZM508 204L512 203L511 213L507 215Z"/>
<path fill="#747c88" d="M388 291L390 288L388 298L385 301ZM422 282L426 280L424 290L421 292ZM416 346L419 344L418 355L415 357ZM386 405L389 404L388 415L385 417Z"/>
<path fill="#808490" d="M390 288L392 285L390 294L388 298ZM392 285L394 281L392 291L390 294ZM406 303L409 301L407 311L404 313ZM417 335L420 333L419 344L416 346ZM376 378L378 376L377 386L375 389ZM415 357L418 355L417 366L414 368Z"/>
<path fill="#a8b0bc" d="M401 271L404 269L402 279L399 281Z"/>
<path fill="#a4acb8" d="M404 269L406 267L405 277L402 279Z"/>
<path fill="#8c909c" d="M409 265L412 263L410 273L407 275ZM407 372L410 370L409 381L406 383ZM385 396L387 394L386 405L383 407Z"/>
<path fill="#68707c" d="M388 298L390 294L388 304L386 307Z"/>
<path fill="#98a0ac" d="M399 281L402 279L400 289L398 290ZM408 361L412 359L410 370L407 372ZM381 391L383 388L382 399L379 402Z"/>
<path fill="#b4bcc8" d="M407 275L410 273L409 283L406 285Z"/>
<path fill="#18202c" d="M478 235L482 234L481 244L477 246ZM473 322L477 321L477 332L473 334Z"/>
<path fill="#58606c" d="M388 304L390 301L389 311L386 314ZM394 304L396 300L395 311L392 314ZM377 368L380 365L378 376L376 378ZM391 361L394 360L393 370L390 372Z"/>
<path fill="#606874" d="M395 294L398 290L396 300L394 304ZM373 400L375 397L374 408L372 411ZM365 419L367 416L365 427L363 430Z"/>
<path fill="#9098a4" d="M400 289L403 287L402 297L399 299Z"/>
<path fill="#3c4050" d="M357 398L357 398L355 407L355 407ZM360 395L361 391L359 400L358 404ZM357 406L358 404L356 413L355 415ZM351 425L352 425L350 434L350 434ZM349 435L350 434L348 444L348 444ZM348 444L348 444L347 453L347 453ZM348 444L349 444L347 453L347 453ZM351 443L352 441L350 450L349 452ZM362 402L363 396L362 406L360 413ZM347 453L347 453L345 463L345 463ZM347 453L348 453L346 463L345 463ZM352 443L353 439L352 449L351 453ZM359 419L360 413L359 423L357 429ZM360 416L362 410L360 420L359 427ZM346 472L347 470L345 480L344 481ZM348 467L349 463L347 473L346 476ZM347 473L348 469L347 479L345 483ZM367 416L369 413L368 424L365 427ZM340 493L340 492L338 503L338 503ZM347 479L348 475L346 485L345 489ZM349 470L351 465L349 475L347 480ZM338 503L338 503L336 513L336 513ZM338 503L339 502L337 513L336 513ZM346 485L347 480L346 491L344 496ZM347 480L349 475L347 486L346 491ZM350 470L352 465L350 475L349 481ZM339 512L340 510L338 521L337 522ZM350 475L352 470L350 481L348 486ZM352 470L354 463L352 475L350 481ZM352 480L354 477L352 488L350 491ZM354 477L356 474L354 486L352 488ZM414 435L418 433L417 445L413 447ZM357 484L359 481L357 493L355 495ZM362 479L364 476L362 488L360 490ZM372 468L375 465L374 477L371 480ZM388 459L391 457L390 469L386 471ZM391 457L395 455L393 467L390 469ZM417 445L420 444L419 456L415 458ZM346 509L348 503L346 514L344 520ZM368 482L371 480L369 492L366 494ZM374 477L377 475L375 488L372 489ZM386 471L390 469L388 481L385 483ZM397 466L400 464L399 476L395 478ZM411 459L415 458L414 470L410 471ZM399 476L402 474L401 487L397 489ZM406 473L410 471L409 484L405 485ZM386 494L390 492L388 504L385 506ZM401 487L405 485L403 498L399 499ZM378 509L381 508L380 520L377 522ZM388 504L392 503L391 515L387 517Z"/>
<path fill="#404454" d="M358 397L358 397L356 406L356 406ZM351 425L351 425L349 435L349 435ZM353 424L354 424L352 433L352 434ZM357 410L358 405L357 415L356 420ZM360 400L361 395L360 404L358 410ZM354 428L355 424L354 433L353 437ZM348 444L348 444L347 453L346 454ZM352 441L353 437L351 447L350 450ZM359 414L360 409L359 419L357 424ZM349 452L349 452L348 462L347 462ZM353 439L355 434L353 444L352 449ZM345 463L345 463L343 473L343 473ZM345 463L345 463L344 473L343 473ZM345 463L346 463L344 472L344 473ZM347 462L348 462L346 472L345 472ZM348 462L349 460L347 470L346 472ZM351 453L352 449L350 459L349 463ZM352 449L353 444L351 454L350 459ZM353 444L354 439L353 449L351 454ZM343 473L344 473L342 482L342 483ZM355 443L357 437L355 448L354 454ZM361 424L363 421L361 432L359 435ZM340 492L341 492L339 502L338 503ZM352 460L354 454L352 465L350 470ZM359 435L361 432L360 443L358 446ZM338 503L338 503L336 513L336 513ZM342 500L343 497L341 507L340 510ZM388 415L391 413L389 425L386 427ZM336 513L336 513L334 524L334 524ZM346 491L347 486L345 497L344 502ZM358 454L360 452L358 463L356 465ZM362 449L364 447L363 458L360 461ZM334 523L335 523L333 534L332 534ZM352 475L354 468L352 480L350 486ZM360 461L363 458L361 470L359 472ZM394 433L397 431L396 443L393 445ZM404 428L408 426L407 438L403 440ZM342 513L343 508L341 519L340 523ZM345 503L346 497L344 509L343 514ZM346 497L348 492L346 503L344 509ZM374 456L377 453L375 465L372 468ZM386 448L389 447L388 459L385 460ZM389 447L393 445L391 457L388 459ZM333 543L334 542L332 553L331 554ZM334 542L335 539L333 550L332 553ZM350 491L352 488L350 500L348 503ZM352 488L354 486L353 498L350 500ZM331 554L332 553L329 564L329 565ZM371 480L374 477L372 489L369 492ZM383 472L386 471L385 483L381 484ZM390 469L393 467L391 480L388 481ZM325 567L325 566L323 578L323 578ZM328 566L329 565L326 576L326 577ZM344 520L346 514L344 526L342 532ZM353 507L355 505L353 517L351 519ZM323 577L324 577L322 589L321 589ZM324 577L325 577L323 588L322 588ZM340 538L342 532L340 544L338 549ZM342 532L344 526L342 538L340 544ZM364 507L367 504L365 516L362 519ZM367 504L370 501L368 514L365 516ZM330 573L331 569L330 580L328 584ZM338 549L340 544L339 556L337 561ZM385 506L388 504L387 517L384 519ZM399 499L403 498L402 510L398 512ZM321 599L322 599L320 611L320 611ZM322 599L323 599L321 610L320 611ZM323 599L324 598L322 609L321 610ZM324 598L325 595L323 606L322 609ZM370 525L374 523L373 536L369 537ZM380 520L384 519L383 531L379 533ZM319 611L320 611L318 623L317 623ZM330 588L332 583L330 596L329 600ZM332 583L334 579L332 591L330 596ZM334 579L335 574L334 586L332 591ZM337 568L340 563L338 575L336 581ZM340 563L342 560L340 572L338 575ZM390 528L394 527L393 540L389 541ZM362 554L365 552L364 564L361 567ZM318 634L319 633L317 645L317 646ZM313 647L313 647L311 659L311 659ZM317 645L319 642L317 654L316 657ZM321 636L322 632L321 645L319 648ZM326 624L327 620L326 633L324 637ZM335 600L338 598L336 611L334 613ZM316 657L317 654L315 666L314 669ZM323 650L324 645L323 658L321 662ZM335 624L337 622L336 635L333 637ZM371 600L374 599L373 612L370 614ZM338 658L341 656L340 670L337 672ZM347 652L350 649L349 663L346 666Z"/>
<path fill="#444858" d="M356 406L357 406L355 415L355 415ZM348 444L348 444L346 454L346 454ZM349 444L349 443L348 453L347 453ZM349 443L350 443L348 453L348 453ZM346 454L347 453L345 463L345 463ZM348 453L349 452L347 462L346 462ZM349 452L350 450L349 460L348 462ZM349 460L350 457L348 467L347 470ZM356 434L357 429L355 439L354 444ZM343 473L343 473L341 483L341 483ZM343 473L343 473L341 483L341 483ZM345 472L345 472L344 482L343 482ZM353 449L354 444L352 455L351 460ZM354 444L355 439L354 449L352 455ZM342 483L342 482L340 492L340 493ZM350 464L351 460L349 470L348 475ZM352 455L354 449L352 460L351 465ZM351 465L352 460L350 470L349 475ZM338 503L338 503L336 513L336 513ZM349 475L350 470L349 481L347 486ZM358 446L360 443L358 454L356 457ZM340 510L341 507L339 518L338 521ZM343 500L344 496L342 506L341 510ZM344 496L346 491L344 502L342 506ZM334 524L334 524L332 534L332 534ZM341 510L342 506L340 517L339 521ZM350 481L352 475L350 486L348 492ZM363 458L365 455L363 467L361 470ZM356 474L359 472L357 484L354 486ZM363 467L366 464L364 476L362 479ZM369 462L371 459L370 470L367 473ZM380 452L383 450L381 462L378 463ZM393 445L396 443L395 455L391 457ZM330 544L331 544L329 555L328 555ZM346 503L348 497L346 509L344 514ZM348 497L350 491L348 503L346 509ZM370 470L372 468L371 480L368 482ZM375 465L378 463L377 475L374 477ZM398 453L402 452L400 464L397 466ZM413 447L417 445L415 458L411 459ZM420 444L424 443L423 455L419 456ZM327 556L327 556L325 567L325 567ZM328 555L329 555L326 566L326 566ZM333 550L334 547L332 558L330 561ZM338 535L339 530L337 541L336 546ZM339 530L341 525L339 537L337 541ZM360 490L362 488L361 500L358 502ZM362 488L365 485L363 497L361 500ZM404 462L408 460L406 473L402 474ZM408 460L411 459L410 471L406 473ZM326 566L326 566L324 577L323 577ZM361 500L363 497L361 509L359 512ZM363 497L366 494L364 507L361 509ZM378 486L381 484L380 497L376 498ZM381 484L385 483L383 495L380 497ZM323 578L323 577L321 589L321 589ZM326 577L326 576L324 588L323 588ZM329 569L331 565L328 577L327 580ZM332 561L333 557L331 569L330 573ZM351 519L353 517L352 529L349 531ZM373 500L376 498L375 511L371 512ZM376 498L380 497L378 509L375 511ZM380 497L383 495L381 508L378 509ZM393 490L397 489L396 501L392 503ZM409 484L413 483L411 495L407 496ZM321 589L321 589L319 600L319 600ZM321 589L322 589L320 600L320 600ZM335 560L336 555L335 567L333 572ZM349 531L352 529L350 541L348 543ZM375 511L378 509L377 522L374 523ZM381 508L385 506L384 519L380 520ZM319 600L319 600L318 612L318 612ZM384 519L387 517L386 530L383 531ZM387 517L391 515L390 528L386 530ZM323 606L324 603L323 615L322 618ZM328 592L330 588L329 600L327 604ZM366 539L369 537L368 550L365 552ZM376 534L379 533L378 546L375 547ZM317 623L318 623L317 634L316 635ZM334 586L336 581L335 593L333 598ZM338 575L340 572L339 585L337 588ZM371 549L375 547L374 560L370 562ZM324 620L326 616L324 629L322 632ZM331 603L333 598L331 611L329 616ZM331 611L333 606L332 618L330 623ZM338 598L340 596L339 609L336 611ZM340 596L343 594L341 607L339 609ZM360 580L363 578L362 591L358 593ZM380 571L384 569L383 582L379 584ZM328 628L330 623L328 636L326 641ZM355 595L358 593L357 606L354 609ZM375 585L379 584L378 597L374 599ZM333 626L335 624L333 637L331 639ZM363 616L366 615L365 629L361 630ZM340 644L342 642L341 656L338 658ZM358 631L361 630L360 644L357 645ZM361 630L365 629L364 643L360 644ZM365 629L368 627L367 641L364 643Z"/>
<path fill="#d4d8e4" d="M403 305L406 303L404 313L401 315Z"/>
<path fill="#9ca4b0" d="M412 299L415 297L413 307L410 309Z"/>
<path fill="#9ca0ac" d="M415 297L418 294L416 305L413 307Z"/>
<path fill="#383c4c" d="M352 416L352 416L351 425L351 425ZM355 415L355 415L354 424L353 424ZM358 405L359 401L357 410L356 415ZM363 385L364 379L363 389L361 395ZM352 425L352 425L351 434L350 434ZM352 433L353 431L352 441L351 443ZM356 425L357 420L356 429L355 434ZM350 450L351 447L350 457L349 460ZM350 457L351 453L349 463L348 467ZM359 423L360 416L359 427L357 433ZM362 410L364 403L362 414L360 420ZM347 470L348 467L346 476L345 480ZM341 483L342 483L340 493L340 493ZM345 480L346 476L344 487L343 490ZM351 460L352 455L351 465L349 470ZM354 449L355 443L354 454L352 460ZM354 454L355 448L354 459L352 465ZM357 442L359 435L358 446L356 453ZM356 457L358 454L356 465L354 468ZM420 409L424 408L423 420L419 421ZM354 468L356 465L354 477L352 480ZM359 472L361 470L359 481L357 484ZM409 448L413 447L411 459L408 460ZM400 464L404 462L402 474L399 476ZM415 458L419 456L418 469L414 470ZM385 483L388 481L386 494L383 495Z"/>
<path fill="#343848" d="M352 416L352 416L351 425L351 425ZM351 425L351 425L350 434L350 434ZM363 389L364 383L363 393L361 399ZM370 395L372 392L371 403L369 405ZM415 423L419 421L418 433L414 435Z"/>
<path fill="#48505c" d="M379 340L381 337L379 347L377 350ZM443 302L447 300L446 311L443 313ZM402 365L405 363L404 374L401 376ZM415 389L419 387L418 399L414 400ZM385 438L388 437L386 448L383 450ZM411 424L415 423L414 435L410 436Z"/>
<path fill="#d4dce8" d="M413 307L416 305L415 315L412 318Z"/>
<path fill="#444c58" d="M351 434L352 434L350 443L350 443ZM355 424L356 420L355 429L354 433ZM369 379L371 376L369 387L367 389ZM351 447L352 443L351 453L350 457ZM346 463L346 462L345 472L344 472ZM346 462L347 462L345 472L345 472ZM366 400L368 397L366 408L364 410ZM344 472L345 472L343 482L342 482ZM398 378L401 376L399 387L396 389ZM390 393L393 391L392 402L389 404ZM352 465L354 459L352 470L350 475ZM354 459L356 453L354 463L352 470ZM396 421L399 420L397 431L394 433ZM358 463L360 461L359 472L356 474ZM381 462L385 460L383 472L380 474ZM385 460L388 459L386 471L383 472ZM391 480L395 478L393 490L390 492ZM410 471L414 470L413 483L409 484Z"/>
<path fill="#545c68" d="M376 361L378 358L377 368L375 371Z"/>
<path fill="#acb0bc" d="M410 339L414 337L413 348L409 350Z"/>
<path fill="#484c5c" d="M348 453L348 453L346 462L346 463ZM355 434L356 429L354 439L353 444ZM345 463L345 463L343 473L343 473ZM345 463L345 463L343 473L343 473ZM343 473L343 473L342 483L341 483ZM344 473L344 472L342 482L342 482ZM355 439L357 433L355 443L354 449ZM341 483L341 483L340 493L339 493ZM342 482L342 482L341 492L340 492ZM344 482L344 481L343 491L342 492ZM346 476L347 473L345 483L344 487ZM340 493L340 493L338 503L338 503ZM341 492L341 492L339 502L339 502ZM348 475L349 470L347 480L346 485ZM341 502L342 500L340 510L339 512ZM345 489L346 485L344 496L343 500ZM347 486L349 481L347 492L345 497ZM345 497L347 492L345 503L343 508ZM347 492L348 486L346 497L345 503ZM356 465L358 463L356 474L354 477ZM399 441L403 440L402 452L398 453ZM407 438L410 436L409 448L405 450ZM410 436L414 435L413 447L409 448ZM329 545L330 545L327 556L327 556ZM335 539L336 536L334 547L333 550ZM336 536L337 532L335 543L334 547ZM337 532L338 528L336 539L335 543ZM354 486L357 484L355 495L353 498ZM359 481L362 479L360 490L357 493ZM378 463L381 462L380 474L377 475ZM405 450L409 448L408 460L404 462ZM334 547L335 543L333 554L332 558ZM348 503L350 500L348 511L346 514ZM353 498L355 495L353 507L351 509ZM380 474L383 472L381 484L378 486ZM325 567L325 567L323 578L323 578ZM325 566L326 566L323 577L323 578ZM336 546L337 541L335 553L333 557ZM346 514L348 511L346 523L344 526ZM372 489L375 488L373 500L370 501ZM375 488L378 486L376 498L373 500ZM388 481L391 480L390 492L386 494ZM323 578L323 578L321 589L321 589ZM327 575L328 572L326 583L325 586ZM370 501L373 500L371 512L368 514ZM383 495L386 494L385 506L381 508ZM322 588L323 588L321 599L320 600ZM344 535L347 533L345 546L343 548ZM328 584L330 580L328 592L327 596ZM348 543L350 541L349 554L346 556ZM391 515L395 514L394 527L390 528ZM318 612L318 612L317 623L316 623ZM318 612L318 611L317 623L317 623ZM322 609L323 606L322 618L321 621ZM324 603L326 600L324 612L323 615ZM335 574L337 568L336 581L334 586ZM357 546L360 544L359 556L356 559ZM379 533L383 531L382 544L378 546ZM383 531L386 530L386 543L382 544ZM394 527L398 525L397 538L393 540ZM317 623L317 623L315 635L315 635ZM314 635L315 635L313 647L313 647ZM315 635L315 635L313 647L313 647ZM327 612L329 608L327 620L326 624ZM358 569L361 567L360 580L357 582ZM361 567L364 564L363 578L360 580ZM315 646L316 646L314 658L313 659ZM320 639L321 636L319 648L318 651ZM322 632L324 629L322 641L321 645ZM363 578L366 576L365 589L362 591ZM369 575L373 573L372 587L368 588ZM326 633L328 628L326 641L324 645ZM330 623L332 618L330 631L328 636ZM339 609L341 607L340 620L337 622ZM337 622L340 620L338 633L336 635ZM342 618L345 616L344 629L341 631ZM338 633L341 631L340 644L337 646ZM366 615L370 614L368 627L365 629ZM344 654L347 652L346 666L343 668Z"/>
<path fill="#4c5060" d="M357 424L359 419L357 429L356 434ZM367 389L369 387L368 397L366 400ZM339 493L340 493L338 503L338 503ZM395 400L398 398L397 410L394 412ZM339 502L340 502L338 512L337 512ZM360 443L362 441L360 452L358 454ZM336 513L337 513L335 523L334 523ZM337 512L338 512L336 523L335 523ZM338 512L339 512L337 522L336 523ZM360 452L362 449L360 461L358 463ZM334 524L334 524L332 534L332 534ZM334 524L334 523L332 534L332 534ZM337 522L338 521L336 531L335 533ZM342 506L344 502L342 513L340 517ZM348 486L350 481L348 492L346 497ZM368 453L370 450L369 462L366 464ZM332 534L332 534L329 545L329 545ZM332 534L332 534L330 544L330 545ZM339 521L340 517L338 528L337 532ZM361 470L363 467L362 479L359 481ZM371 459L374 456L372 468L370 470ZM330 545L330 545L328 555L327 556ZM330 545L330 544L328 555L328 555ZM343 514L344 509L343 520L341 525ZM336 539L338 535L336 546L334 550ZM330 561L332 558L329 569L328 572ZM358 502L361 500L359 512L356 514ZM366 494L369 492L367 504L364 507ZM324 577L324 577L322 588L322 589ZM331 565L332 561L330 573L328 577ZM346 523L349 521L347 533L344 535ZM356 514L359 512L357 524L354 526ZM321 589L321 589L319 600L319 600ZM324 588L325 586L324 598L323 599ZM325 586L326 583L325 595L324 598ZM328 577L330 573L328 584L327 588ZM331 569L333 564L331 576L330 580ZM359 521L362 519L361 531L358 534ZM319 600L319 600L318 612L318 612ZM320 600L321 599L320 611L319 611ZM325 595L326 592L324 603L323 606ZM327 588L328 584L327 596L326 600ZM341 550L343 548L342 560L340 563ZM361 531L364 529L363 541L360 544ZM374 523L377 522L376 534L373 536ZM398 512L402 510L402 523L398 525ZM321 610L322 609L321 621L320 622ZM386 530L390 528L389 541L386 543ZM316 623L316 623L315 635L314 635ZM316 623L316 623L315 635L315 635ZM320 622L321 621L319 633L318 634ZM325 608L327 604L326 616L324 620ZM345 568L348 566L346 579L344 581ZM378 546L382 544L381 557L377 559ZM382 544L386 543L385 556L381 557ZM386 543L389 541L388 554L385 556ZM389 541L393 540L392 553L388 554ZM317 634L317 634L316 646L315 646ZM319 633L320 630L319 642L317 645ZM320 630L321 627L320 639L319 642ZM321 627L323 624L321 636L320 639ZM335 593L337 588L335 600L333 606ZM317 646L317 645L316 657L315 658ZM329 616L331 611L330 623L328 628ZM348 589L351 587L349 600L347 602ZM351 587L354 585L352 598L349 600ZM373 573L376 572L375 585L372 587ZM321 645L322 641L321 653L319 657ZM322 641L324 637L323 650L321 653ZM358 593L362 591L360 604L357 606ZM362 591L365 589L364 603L360 604ZM340 620L342 618L341 631L338 633ZM348 613L351 611L350 624L347 627ZM329 644L331 639L330 652L327 658ZM353 622L356 620L355 633L351 636ZM348 638L351 636L350 649L347 652ZM351 636L355 633L353 647L350 649ZM350 649L353 647L352 661L349 663ZM353 647L357 645L356 659L352 661ZM363 657L366 655L365 669L361 671Z"/>
<path fill="#5c6070" d="M368 397L370 395L369 405L366 408ZM363 430L365 427L364 438L362 441ZM405 395L408 393L407 404L404 406ZM372 439L375 436L373 447L370 450ZM349 554L352 551L350 564L348 566ZM352 574L355 572L354 585L351 587Z"/>
<path fill="#707484" d="M375 389L377 386L375 397L373 400ZM376 424L379 421L377 433L375 436ZM367 444L369 441L368 453L365 455Z"/>
<path fill="#808494" d="M377 386L379 383L378 394L375 397Z"/>
<path fill="#6c7080" d="M395 380L398 378L396 389L393 391ZM380 410L383 407L382 418L379 421ZM375 436L377 433L376 444L373 447Z"/>
<path fill="#3c4454" d="M342 482L343 482L341 492L341 492ZM344 493L345 489L343 500L342 504ZM344 502L345 497L343 508L342 513ZM327 556L327 556L325 566L325 567ZM365 485L368 482L366 494L363 497ZM392 503L396 501L395 514L391 515ZM320 600L320 600L318 611L318 612ZM319 622L320 622L318 634L317 634ZM322 618L323 615L321 627L320 630ZM332 591L334 586L333 598L331 603ZM375 547L378 546L377 559L374 560ZM317 634L318 634L317 646L316 646ZM370 562L374 560L373 573L369 575ZM374 560L377 559L376 572L373 573ZM316 646L317 646L315 658L314 658ZM319 642L320 639L318 651L317 654ZM333 606L335 600L334 613L332 618ZM315 658L316 657L314 669L313 670ZM319 648L321 645L319 657L318 661ZM372 587L375 585L374 599L371 600Z"/>
<path fill="#404858" d="M343 482L344 482L342 492L341 492ZM344 481L345 480L343 490L343 491ZM341 492L342 492L340 502L339 502ZM343 491L343 490L342 500L341 502ZM343 490L344 487L343 497L342 500ZM336 513L336 513L334 523L334 524ZM332 534L333 534L331 544L330 544ZM343 508L345 503L343 514L341 519ZM348 492L350 486L348 497L346 503ZM327 556L328 555L326 566L325 566ZM328 555L328 555L326 566L326 566ZM355 495L357 493L355 505L353 507ZM342 526L344 520L342 532L340 538ZM402 474L406 473L405 485L401 487ZM325 577L326 577L323 588L323 588ZM333 557L335 553L333 564L331 569ZM322 589L322 588L320 600L320 600ZM326 583L327 580L326 592L325 595ZM342 538L344 535L343 548L341 550ZM365 516L368 514L367 526L364 529ZM319 600L320 600L318 612L318 612ZM339 556L341 550L340 563L337 568ZM395 514L398 512L398 525L394 527ZM369 537L373 536L371 549L368 550ZM327 604L329 600L327 612L326 616ZM315 635L315 635L314 647L313 647ZM344 581L346 579L345 592L343 594ZM313 647L313 647L311 659L311 659ZM314 647L315 646L313 659L313 659ZM321 653L323 650L321 662L319 666ZM326 641L328 636L327 649L325 654ZM341 631L344 629L342 642L340 644ZM344 629L347 627L345 640L342 642ZM337 646L340 644L338 658L336 660Z"/>
<path fill="#505464" d="M363 421L365 419L363 430L361 432ZM342 492L343 491L341 502L340 502ZM362 441L364 438L362 449L360 452ZM397 410L400 408L399 420L396 421ZM365 455L368 453L366 464L363 467ZM397 431L401 430L399 441L396 443ZM340 517L342 513L340 523L338 528ZM338 528L340 523L338 535L336 539ZM350 500L353 498L351 509L348 511ZM357 493L360 490L358 502L355 505ZM340 531L342 526L340 538L338 543ZM328 572L329 569L327 580L326 583ZM337 548L338 543L336 555L335 560ZM353 517L356 514L354 526L352 529ZM336 555L338 549L337 561L335 567ZM331 576L333 572L332 583L330 588ZM354 549L357 546L356 559L353 561ZM365 552L368 550L367 563L364 564ZM345 592L348 589L347 602L344 605ZM354 609L357 606L356 620L353 622ZM364 603L367 601L366 615L363 616ZM347 627L350 624L348 638L345 640Z"/>
<path fill="#888c9c" d="M369 413L372 411L370 422L368 424ZM368 424L370 422L369 433L366 435ZM383 407L386 405L385 417L382 418ZM366 435L369 433L367 444L364 447Z"/>
<path fill="#485060" d="M344 487L345 483L344 493L343 497ZM341 507L342 504L340 514L339 518ZM335 523L335 523L333 533L333 534ZM332 534L332 534L330 545L329 545ZM333 534L333 533L331 544L331 544ZM344 509L346 503L344 514L343 520ZM364 476L367 473L365 485L362 488ZM330 555L331 554L329 565L328 566ZM344 514L346 509L344 520L342 526ZM329 565L329 564L327 575L326 576ZM348 511L351 509L349 521L346 523ZM359 512L361 509L359 521L357 524ZM364 529L367 526L366 539L363 541ZM373 536L376 534L375 547L371 549ZM323 615L324 612L323 624L321 627ZM324 612L325 608L324 620L323 624ZM315 635L316 635L314 647L314 647ZM355 572L358 569L357 582L354 585ZM364 564L367 563L366 576L363 578ZM343 594L345 592L344 605L341 607ZM334 613L336 611L335 624L333 626ZM347 602L349 600L348 613L345 616ZM349 600L352 598L351 611L348 613ZM352 598L355 595L354 609L351 611ZM327 658L330 652L328 666L326 671ZM342 642L345 640L344 654L341 656ZM364 643L367 641L366 655L363 657Z"/>
<path fill="#545868" d="M361 432L363 430L362 441L360 443ZM404 406L407 404L406 416L402 418ZM402 418L406 416L404 428L401 430ZM381 440L385 438L383 450L380 452ZM377 453L380 452L378 463L375 465ZM356 536L358 534L357 546L354 549ZM341 583L344 581L343 594L340 596Z"/>
<path fill="#646878" d="M372 419L375 416L374 427L371 430Z"/>
<path fill="#7c8090" d="M392 402L395 400L394 412L391 413Z"/>
<path fill="#444c5c" d="M338 503L338 503L336 513L336 513ZM340 502L341 502L339 512L338 512ZM343 497L344 493L342 504L341 507ZM336 513L336 513L334 524L334 524ZM335 523L336 523L334 533L333 533ZM332 544L333 543L331 554L330 555ZM367 473L370 470L368 482L365 485ZM339 537L340 531L338 543L337 548ZM355 505L358 502L356 514L353 517ZM369 492L372 489L370 501L367 504ZM326 576L327 575L325 586L324 588ZM390 492L393 490L392 503L388 504ZM405 485L409 484L407 496L403 498ZM371 512L375 511L374 523L370 525ZM396 501L399 499L398 512L395 514ZM403 498L407 496L406 509L402 510ZM377 522L380 520L379 533L376 534ZM318 612L318 612L316 623L316 623ZM327 596L328 592L327 604L325 608ZM346 556L349 554L348 566L345 568ZM318 623L319 622L317 634L317 634ZM329 600L330 596L329 608L327 612ZM326 616L327 612L326 624L324 629ZM377 559L381 557L380 571L376 572ZM381 557L385 556L384 569L380 571ZM313 647L313 647L312 659L311 659ZM366 576L369 575L368 588L365 589ZM365 589L368 588L367 601L364 603ZM323 658L325 654L323 667L321 671ZM327 649L329 644L327 658L325 662ZM355 633L358 631L357 645L353 647ZM341 656L344 654L343 668L340 670Z"/>
<path fill="#4c5464" d="M339 502L339 502L337 512L337 513ZM340 514L341 510L339 521L338 525ZM333 533L334 533L332 544L331 544ZM334 533L335 533L333 543L332 544ZM332 558L333 554L331 565L329 569ZM337 541L339 537L337 548L335 553ZM354 526L357 524L356 536L353 539ZM368 514L371 512L370 525L367 526ZM337 561L339 556L337 568L335 574ZM342 560L344 558L343 570L340 572ZM348 566L350 564L349 577L346 579ZM354 585L357 582L355 595L352 598ZM357 582L360 580L358 593L355 595ZM336 611L339 609L337 622L335 624ZM357 606L360 604L359 618L356 620ZM350 624L353 622L351 636L348 638ZM359 618L363 616L361 630L358 631ZM345 640L348 638L347 652L344 654Z"/>
<path fill="#88909c" d="M371 430L374 427L372 439L369 441ZM382 418L385 417L383 428L380 430Z"/>
<path fill="#303444" d="M425 396L429 395L428 407L424 408Z"/>
<path fill="#484c60" d="M336 513L336 513L334 523L334 523ZM339 518L340 514L338 525L337 528ZM341 525L343 520L340 531L339 537ZM333 554L334 550L332 561L331 565ZM338 543L340 538L338 549L336 555ZM323 588L324 588L323 599L322 599ZM340 544L342 538L341 550L339 556ZM357 524L359 521L358 534L356 536ZM320 600L320 600L319 611L318 611ZM333 572L335 567L334 579L332 583ZM335 567L337 561L335 574L334 579ZM320 611L320 611L319 622L318 623ZM321 621L322 618L320 630L319 633ZM356 559L359 556L358 569L355 572ZM368 550L371 549L370 562L367 563ZM333 598L335 593L333 606L331 611ZM337 588L339 585L338 598L335 600ZM317 654L318 651L317 664L315 666ZM324 637L326 633L324 645L323 650ZM345 616L348 613L347 627L344 629ZM351 611L354 609L353 622L350 624ZM360 604L364 603L363 616L359 618ZM356 620L359 618L358 631L355 633ZM357 645L360 644L359 658L356 659Z"/>
<path fill="#44485c" d="M337 513L337 512L335 523L335 523ZM332 534L332 534L330 545L330 545ZM335 533L336 531L334 542L333 543ZM336 531L337 528L335 539L334 542ZM331 544L331 544L329 555L329 555ZM326 566L327 566L325 577L324 577ZM329 564L330 561L328 572L327 575ZM334 550L336 546L333 557L332 561ZM339 585L341 583L340 596L338 598ZM314 647L314 647L313 659L312 659ZM341 607L344 605L342 618L340 620ZM336 635L338 633L337 646L334 648ZM330 652L332 650L330 664L328 666ZM334 648L337 646L336 660L333 662Z"/>
<path fill="#4c5064" d="M342 504L343 500L341 510L340 514ZM334 523L334 523L332 534L332 534ZM336 523L337 522L335 533L334 533ZM338 525L339 521L337 532L336 536ZM331 544L332 544L330 555L329 555ZM341 519L343 514L341 525L339 530ZM329 555L329 555L327 566L326 566ZM329 555L330 555L328 566L327 566ZM332 553L333 550L330 561L329 564ZM326 566L326 566L324 577L324 577ZM327 566L328 566L326 577L325 577ZM351 509L353 507L351 519L349 521ZM323 578L323 578L321 589L321 589ZM344 526L346 523L344 535L342 538ZM361 509L364 507L362 519L359 521ZM321 589L321 589L320 600L319 600ZM323 588L323 588L322 599L321 599ZM327 580L328 577L327 588L326 592ZM318 612L318 612L316 623L316 623ZM320 611L321 610L320 622L319 622ZM316 623L317 623L315 635L315 635ZM317 623L317 623L316 635L315 635ZM343 570L345 568L344 581L341 583ZM323 624L324 620L322 632L321 636ZM313 647L314 647L312 659L312 659ZM324 629L326 624L324 637L322 641ZM318 651L319 648L318 661L317 664ZM319 657L321 653L319 666L318 670ZM331 639L333 637L332 650L330 652ZM332 650L334 648L333 662L330 664ZM360 644L364 643L363 657L359 658Z"/>
<path fill="#747888" d="M380 430L383 428L381 440L379 441Z"/>
<path fill="#404458" d="M338 521L339 518L337 528L336 531ZM335 543L336 539L334 550L333 554ZM333 564L335 560L333 572L331 576ZM330 580L331 576L330 588L328 592ZM367 526L370 525L369 537L366 539ZM318 611L319 611L317 623L317 623ZM363 541L366 539L365 552L362 554ZM330 596L332 591L331 603L329 608ZM336 581L338 575L337 588L335 593ZM315 635L315 635L313 647L313 647ZM367 563L370 562L369 575L366 576ZM327 620L329 616L328 628L326 633ZM376 572L380 571L379 584L375 585ZM368 588L372 587L371 600L367 601ZM330 631L333 626L331 639L329 644Z"/>
<path fill="#585c6c" d="M370 450L373 447L371 459L369 462ZM373 447L376 444L374 456L371 459ZM388 437L391 435L389 447L386 448ZM349 521L351 519L349 531L347 533ZM350 541L353 539L352 551L349 554ZM344 558L346 556L345 568L343 570ZM350 564L353 561L352 574L349 577ZM359 556L362 554L361 567L358 569ZM349 577L352 574L351 587L348 589Z"/>
<path fill="#686c7c" d="M379 441L381 440L380 452L377 453Z"/>
<path fill="#505468" d="M337 528L338 525L336 536L335 539ZM343 520L344 514L342 526L340 531ZM335 553L337 548L335 560L333 564ZM362 519L365 516L364 529L361 531ZM353 539L356 536L354 549L352 551ZM360 544L363 541L362 554L359 556Z"/>
<path fill="#3c4054" d="M329 545L329 545L327 556L327 556ZM340 523L341 519L339 530L338 535ZM326 592L327 588L326 600L324 603ZM326 600L327 596L325 608L324 612ZM316 635L317 634L315 646L314 647ZM329 608L331 603L329 616L327 620ZM332 618L334 613L333 626L330 631ZM324 645L326 641L325 654L323 658ZM328 636L330 631L329 644L327 649ZM367 601L371 600L370 614L366 615ZM325 654L327 649L325 662L323 667ZM333 637L336 635L334 648L332 650Z"/>
<path fill="#384050" d="M397 489L401 487L399 499L396 501Z"/>
<path fill="#54586c" d="M347 533L349 531L348 543L345 546ZM358 534L361 531L360 544L357 546ZM340 572L343 570L341 583L339 585Z"/>
<path fill="#545c6c" d="M352 529L354 526L353 539L350 541ZM352 551L354 549L353 561L350 564ZM344 605L347 602L345 616L342 618Z"/>
<path fill="#505868" d="M343 548L345 546L344 558L342 560ZM345 546L348 543L346 556L344 558ZM353 561L356 559L355 572L352 574Z"/>
<path fill="#586070" d="M346 579L349 577L348 589L345 592Z"/>
<path fill="#282c34" d="M385 296L385 296L368 355L367 355ZM465 147L471 143L460 215L453 218Z"/>
<path fill="#343840" d="M385 296L385 296L368 355L368 355ZM458 151L465 147L453 218L446 222Z"/>
<path fill="#20242c" d="M385 296L386 295L369 354L368 355ZM393 266L395 253L378 315L376 327ZM478 139L485 136L474 208L467 211Z"/>
<path fill="#383844" d="M386 295L387 295L370 354L369 354Z"/>
<path fill="#3c4048" d="M387 295L389 288L372 348L370 354ZM492 132L499 128L490 201L482 204ZM499 128L506 125L497 198L490 201Z"/>
<path fill="#242830" d="M389 288L391 278L374 338L372 348Z"/>
<path fill="#242430" d="M391 278L393 266L376 327L374 338Z"/>
<path fill="#343440" d="M395 253L398 237L381 301L378 315Z"/>
<path fill="#282834" d="M471 143L478 139L467 211L460 215Z"/>
<path fill="#30343c" d="M485 136L492 132L482 204L474 208Z"/>
<path stroke="#15161b" stroke-width="1.5" stroke-dasharray="2 5" fill="none" d="M368 355.0L369 354.4L371 353.1L372 344.5L375 334.0L377 321.7L380 307.7L383 291.9L387 280.7L391 274.4L395 267.5L400 260.1L405 252.1L410 247.8L415 243.4L421 238.7L427 233.8L434 229.0L441 225.4L447 221.7L455 217.8L462 213.9L470 210.3L477 206.6L485 202.9L493 199.5L502 196.6L510 193.6L518 191.0L527 188.3L536 185.6M363 371.8L364 371.2L366 369.9L368 361.5L370 351.3L372 339.3L375 325.6L379 310.2L382 299.3L386 293.1L391 286.4L396 279.2L401 271.4L406 267.2L412 262.9L418 258.3L424 253.5L430 248.8L437 245.3L444 241.7L452 237.9L459 234.1L467 230.6L475 227.0L483 223.4L491 220.0L499 217.2L508 214.3L517 211.7L525 209.1L534 206.5M359 389.1L360 388.5L362 387.2L363 379.0L366 369.1L368 357.4L371 344.0L375 328.9L378 318.3L383 312.3L387 305.7L392 298.7L397 291.1L402 287.0L408 282.8L414 278.3L421 273.7L427 269.1L434 265.7L442 262.1L449 258.4L457 254.7L465 251.3L473 247.8L481 244.2L489 241.0L498 238.2L507 235.4L515 232.9L524 230.3L533 227.7M355 406.8L356 406.2L358 405.0L360 397.0L362 387.3L365 375.9L368 362.8L371 348.1L375 337.8L379 331.9L384 325.5L389 318.6L394 311.3L399 307.3L405 303.1L412 298.8L418 294.2L425 289.8L432 286.4L439 283.0L447 279.4L455 275.7L463 272.4L471 269.0L479 265.6L488 262.4L497 259.7L506 256.9L515 254.5L524 252.0L533 249.5M351 425.0L353 424.4L354 423.2L356 415.4L358 405.9L361 394.8L364 382.1L368 367.8L372 357.7L376 352.0L381 345.8L386 339.1L391 331.9L397 328.0L403 323.9L409 319.7L416 315.3L423 310.9L430 307.7L437 304.3L445 300.8L453 297.2L461 294.0L469 290.7L478 287.3L487 284.2L496 281.6L505 278.9L514 276.5L523 274.1L532 271.6M349 443.6L350 443.1L351 441.9L353 434.3L356 425.1L359 414.2L362 401.9L365 387.9L369 378.1L374 372.5L378 366.5L383 359.9L389 352.9L395 349.1L401 345.2L407 341.1L414 336.8L421 332.5L428 329.4L436 326.1L444 322.7L452 319.2L460 316.1L469 312.8L477 309.5L486 306.5L495 303.9L505 301.4L514 299.0L523 296.7L533 294.3M346 462.7L347 462.2L348 461.1L350 453.7L353 444.7L356 434.2L359 422.1L362 408.5L366 399.0L371 393.6L376 387.6L381 381.3L386 374.5L392 370.8L399 367.0L405 362.9L412 358.7L419 354.6L427 351.5L434 348.3L442 345.0L451 341.6L459 338.6L468 335.4L477 332.2L486 329.3L495 326.8L504 324.2L514 322.0L523 319.7L533 317.4M342 482.4L343 481.9L345 480.8L347 473.5L349 464.8L352 454.6L356 442.8L359 429.6L363 420.3L368 415.1L373 409.3L378 403.1L384 396.5L390 392.9L396 389.2L403 385.3L410 381.2L417 377.2L425 374.2L432 371.0L441 367.8L449 364.5L458 361.6L466 358.5L475 355.4L485 352.5L494 350.1L503 347.6L513 345.4L523 343.2L533 340.9M339 502.5L340 502.0L341 500.9L343 493.9L346 485.4L349 475.5L352 464.1L356 451.2L360 442.2L365 437.0L370 431.5L375 425.4L381 419.0L387 415.5L393 411.9L400 408.1L407 404.1L415 400.2L422 397.3L430 394.2L439 391.1L447 387.9L456 385.0L465 382.0L474 379.0L484 376.2L493 373.8L503 371.5L513 369.3L523 367.1L533 364.9M335 523.2L336 522.7L337 521.7L340 514.8L342 506.6L345 496.9L349 485.8L352 473.3L357 464.6L361 459.5L366 454.1L372 448.3L378 442.0L384 438.6L390 435.1L397 431.4L405 427.5L412 423.7L420 420.9L428 417.9L437 414.9L445 411.8L454 409.0L463 406.1L473 403.1L482 400.4L492 398.1L502 395.8L512 393.7L522 391.6L532 389.5M330 544.4L332 543.9L333 542.9L336 536.3L338 528.3L341 518.8L345 508.1L349 496.0L353 487.4L358 482.6L363 477.3L368 471.6L374 465.5L381 462.2L387 458.8L395 455.2L402 451.5L410 447.8L418 445.0L426 442.2L435 439.2L444 436.2L453 433.4L462 430.6L472 427.8L481 425.1L491 422.9L501 420.7L511 418.6L522 416.6L532 414.5M326 566.1L327 565.7L329 564.7L331 558.3L334 550.5L337 541.3L341 530.9L345 519.1L349 510.8L354 506.1L359 501.0L365 495.5L371 489.6L377 486.4L384 483.0L391 479.6L399 475.9L407 472.3L415 469.7L424 466.9L432 464.0L441 461.1L451 458.4L460 455.7L470 452.9L480 450.4L490 448.2L500 446.0L511 444.0L521 442.0L532 440.0M322 588.4L323 588.0L325 587.0L327 580.8L330 573.2L333 564.4L336 554.2L341 542.8L345 534.8L350 530.2L355 525.2L361 519.9L367 514.1L374 511.0L381 507.8L388 504.4L396 500.9L404 497.4L412 494.8L421 492.1L430 489.4L439 486.5L449 483.9L458 481.3L468 478.6L478 476.1L489 474.0L499 471.9L510 470.0L520 468.0L531 466.1M319 611.3L320 610.9L322 609.9L324 603.9L327 596.6L330 588.0L334 578.1L338 567.1L342 559.3L347 554.8L353 550.0L359 544.8L365 539.3L372 536.2L379 533.1L386 529.9L394 526.4L402 523.1L411 520.5L420 517.9L429 515.2L438 512.5L448 510.0L458 507.4L468 504.8L478 502.4L488 500.3L499 498.3L510 496.4L521 494.6L532 492.7M316 634.8L317 634.3L319 633.4L321 627.6L324 620.5L327 612.2L331 602.6L335 591.9L340 584.3L345 580.0L351 575.4L357 570.3L363 565.0L370 562.0L377 559.0L385 555.8L393 552.5L401 549.2L410 546.8L419 544.3L428 541.7L437 539.0L447 536.6L457 534.1L468 531.5L478 529.2L489 527.2L499 525.2L510 523.4L522 521.6L533 519.8M312 658.8L314 658.4L316 657.5L318 651.9L321 645.0L324 636.9L328 627.7L332 617.3L337 610.0L342 605.8L348 601.3L354 596.4L361 591.2L368 588.4L375 585.5L383 582.4L391 579.2L399 576.0L408 573.6L417 571.2L427 568.6L436 566.1L446 563.7L457 561.3L467 558.9L478 556.6L489 554.7L500 552.8L511 551.0L522 549.2L534 547.5M309 683.5L310 683.1L312 682.2L315 676.7L318 670.1L321 662.3L325 653.3L329 643.3L334 636.2L339 632.2L345 627.8L352 623.1L358 618.0L365 615.3L373 612.5L381 609.5L389 606.4L398 603.3L407 601.0L416 598.7L426 596.2L436 593.7L446 591.4L456 589.1L467 586.7L478 584.5L489 582.7L500 580.8L512 579.1L523 577.4L535 575.7M305 708.7L307 708.4L309 707.6L311 702.2L314 695.8L318 688.3L322 679.6L326 669.9L331 663.1L337 659.2L343 654.9L349 650.3L356 645.5L363 642.8L371 640.1L379 637.2L387 634.2L396 631.2L405 629.0L415 626.7L425 624.4L435 621.9L445 619.7L456 617.5L467 615.2L478 613.1L489 611.3L501 609.5L512 607.8L524 606.2L536 604.5M302 734.7L303 734.3L305 733.5L308 728.4L311 722.2L314 714.9L318 706.5L323 697.1L328 690.5L334 686.7L340 682.6L346 678.2L353 673.5L361 670.9L368 668.3L377 665.5L385 662.6L394 659.7L404 657.6L413 655.4L423 653.1L434 650.8L444 648.6L455 646.5L466 644.2L478 642.2L489 640.5L501 638.7L513 637.1L525 635.5L537 633.9M301 761.2L303 760.9L305 760.1L307 755.2L310 749.1L314 742.1L318 734.0L323 725.0L328 718.6L333 714.9L339 711.0L346 706.7L353 702.2L361 699.7L369 697.1L377 694.4L386 691.6L395 688.9L404 686.8L414 684.7L424 682.4L435 680.2L445 678.1L456 676.0L468 673.9L479 671.9L491 670.2L503 668.5L515 667.0L527 665.5L539 663.9M301 788.5L303 788.1L305 787.4L307 782.6L310 776.8L314 770.0L318 762.2L323 753.4L328 747.3L334 743.8L340 739.9L347 735.8L354 731.4L361 729.0L369 726.6L378 724.0L387 721.3L396 718.6L405 716.6L415 714.5L426 712.4L436 710.2L447 708.2L458 706.2L470 704.1L481 702.2L493 700.6L505 699.0L517 697.5L529 696.0L542 694.5M301 816.4L303 816.0L305 815.3L307 810.7L311 805.1L314 798.5L318 791.0L323 782.6L328 776.6L334 773.2L340 769.6L347 765.6L354 761.4L362 759.1L370 756.7L379 754.2L388 751.6L397 749.0L407 747.1L417 745.1L427 743.0L438 740.9L449 739.0L460 737.0L471 735.0L483 733.2L495 731.6L507 730.1L520 728.7L532 727.2L545 725.8M301 844.9L303 844.6L305 843.9L307 839.5L311 834.1L314 827.8L318 820.5L323 812.4L328 806.7L334 803.4L340 799.9L347 796.0L354 791.9L362 789.7L370 787.4L379 785.0L388 782.5L397 780.0L407 778.2L417 776.2L427 774.3L438 772.2L449 770.4L460 768.5L471 766.6L483 764.8L495 763.3L507 761.8L520 760.4L532 759.0L545 757.6"/>
<path stroke="#1a1b20" stroke-width="1.2" fill="none" d="M370 347.3L370 347.2L371 346.7L372 345.8L374 339.6L376 327.7L379 313.1L383 295.9L387 276.3L391 268.0L396 259.9L401 251.1L407 242.0L414 236.8L420 231.4L427 225.5L435 219.6L443 215.2L451 210.7L460 206.0L468 201.5L478 197.2L487 192.7L496 188.7L506 185.1L516 181.8L526 178.6L536 175.3L547 172.0L557 170.3L567 168.7"/>
</g>
<g clip-path="url(#cr)">
<rect x="350" y="100" width="240" height="560" fill="#34363f"/>
<path fill="#50545c" d="M510 184L513 183L512 193L509 195ZM505 196L509 195L508 205L504 207ZM504 207L508 205L507 216L503 217ZM473 306L477 305L476 316L473 318Z"/>
<path fill="#606470" d="M513 183L517 182L516 192L512 193ZM518 202L522 201L521 212L517 213ZM505 238L509 237L508 249L505 250ZM489 266L493 265L492 276L489 277ZM493 265L497 263L496 275L492 276ZM504 261L508 260L507 272L504 273ZM481 291L484 290L484 302L480 303ZM479 339L483 338L482 351L479 352ZM471 354L475 353L474 366L470 367ZM454 385L458 383L457 396L453 397Z"/>
<path fill="#787c84" d="M517 182L520 180L519 191L516 192ZM509 226L513 225L512 236L509 237ZM500 262L504 261L504 273L500 274Z"/>
<path fill="#585c64" d="M520 180L524 179L523 190L519 191ZM502 228L506 227L505 238L501 240ZM492 276L496 275L496 287L492 288Z"/>
<path fill="#505460" d="M524 179L527 178L526 189L523 190ZM495 231L498 230L498 241L494 242ZM499 286L503 285L503 296L499 298ZM484 314L488 313L487 325L483 326ZM465 333L468 331L468 343L464 345ZM448 424L452 423L451 436L447 438ZM455 422L459 421L458 434L455 435Z"/>
<path fill="#343844" d="M527 178L531 177L530 188L526 189ZM524 222L528 221L527 232L524 233ZM469 319L473 318L472 330L468 331ZM488 313L491 312L491 324L487 325ZM476 329L480 327L479 339L475 341ZM457 347L460 346L460 358L456 360ZM487 337L491 336L490 349L486 350ZM490 349L494 347L494 360L490 361ZM482 363L486 362L485 375L481 376ZM477 377L481 376L481 389L477 390ZM485 375L489 374L489 387L485 388ZM497 372L501 371L501 384L497 385ZM469 392L473 391L472 404L468 405ZM477 390L481 389L480 402L476 403ZM485 388L489 387L488 400L484 401ZM468 405L472 404L471 417L467 418ZM476 403L480 402L479 415L475 416ZM459 421L463 420L462 433L458 434ZM491 425L495 424L495 438L491 439ZM482 441L486 440L486 454L481 455ZM495 438L499 437L498 451L494 452ZM494 452L498 451L498 465L493 466ZM511 462L516 462L515 476L511 476Z"/>
<path fill="#303440" d="M531 177L535 176L534 187L530 188ZM519 257L523 256L523 268L519 269ZM495 299L499 298L499 310L495 311ZM495 311L499 310L499 322L495 323ZM483 326L487 325L487 337L483 338ZM467 356L471 354L470 367L466 368ZM479 352L482 351L482 363L478 364ZM486 350L490 349L490 361L486 362ZM494 347L498 346L498 359L494 360ZM478 364L482 363L481 376L477 377ZM486 362L490 361L489 374L485 375ZM498 359L502 358L501 371L497 372ZM493 373L497 372L497 385L493 386ZM481 389L485 388L484 401L480 402ZM501 384L505 383L505 396L500 397ZM488 400L492 399L492 412L487 413ZM496 398L500 397L500 410L496 411ZM463 420L467 418L466 432L462 433ZM483 414L487 413L487 426L483 427ZM504 409L508 408L508 422L504 423ZM490 453L494 452L493 466L489 467ZM507 463L511 462L511 476L506 477ZM515 476L520 475L520 489L515 490Z"/>
<path fill="#2c3038" d="M535 176L538 175L537 185L534 187ZM524 233L527 232L527 243L523 244ZM527 232L531 231L531 242L527 243ZM531 242L535 241L535 253L531 254ZM523 256L527 255L527 267L523 268ZM519 269L523 268L523 279L519 280ZM515 281L519 280L519 292L515 293ZM499 310L503 308L503 321L499 322ZM523 304L527 303L527 315L523 316ZM531 314L535 313L535 325L531 326ZM531 326L535 325L535 338L531 339Z"/>
<path fill="#202430" d="M538 175L542 174L541 184L537 185ZM542 174L545 172L545 183L541 184ZM541 184L545 183L544 194L540 195ZM548 182L552 182L551 193L548 193ZM536 207L540 206L539 217L535 219ZM532 220L535 219L535 230L531 231ZM539 217L543 216L543 228L539 229ZM547 216L550 215L550 226L547 227ZM535 230L539 229L539 240L535 241ZM550 226L554 226L554 237L550 238ZM554 226L558 225L558 237L554 237ZM531 266L534 265L534 276L531 277ZM546 262L550 261L550 273L546 274ZM550 273L554 273L555 285L551 285ZM531 289L535 288L535 301L531 302ZM527 303L531 302L531 314L527 315ZM559 296L563 296L563 308L559 309ZM503 321L507 320L506 332L502 333ZM535 313L539 312L539 324L535 325ZM506 332L510 331L510 344L506 344ZM568 320L572 320L572 332L568 333ZM514 343L518 342L518 354L514 355ZM547 335L551 335L552 348L547 348ZM506 357L510 356L510 369L505 370ZM510 356L514 355L514 368L510 369ZM514 355L518 354L518 367L514 368ZM539 350L543 349L543 362L539 363ZM547 348L552 348L552 360L547 361ZM556 347L560 347L560 360L556 360ZM547 361L552 360L552 374L547 374ZM560 360L564 359L565 372L560 373ZM513 381L518 380L517 393L513 394ZM518 380L522 379L521 392L517 393ZM547 374L552 374L552 387L547 387ZM565 372L569 372L569 385L565 385ZM521 392L526 392L526 405L521 406ZM552 387L556 386L556 400L552 400ZM569 385L573 385L574 398L569 398ZM547 401L552 400L552 414L548 414ZM552 400L556 400L556 413L552 414ZM556 400L561 399L561 413L556 413ZM530 418L534 417L534 430L530 431ZM534 417L539 416L539 429L534 430ZM543 415L548 414L548 428L543 429ZM548 414L552 414L552 428L548 428ZM565 413L570 412L570 426L565 426ZM539 429L543 429L543 442L538 443ZM552 428L556 427L556 441L552 441ZM561 427L565 426L566 440L561 441Z"/>
<path fill="#242830" d="M545 172L549 172L548 182L545 183ZM534 187L537 185L537 196L533 198ZM544 194L548 193L547 204L543 205ZM532 209L536 207L535 219L532 220ZM547 227L550 226L550 238L546 238ZM535 241L539 240L538 252L535 253ZM535 253L538 252L538 264L534 265ZM527 278L531 277L531 289L527 290ZM534 276L538 275L539 287L535 288ZM542 274L546 274L547 286L543 286ZM503 296L507 295L507 307L503 308ZM535 288L539 287L539 300L535 301ZM503 308L507 307L507 320L503 321ZM511 306L515 305L515 318L511 319ZM551 297L555 297L555 309L551 310ZM511 319L515 318L514 330L510 331ZM519 317L523 316L523 328L519 329ZM559 309L563 308L564 321L560 321ZM535 325L539 324L539 337L535 338ZM539 324L543 323L543 336L539 337Z"/>
<path fill="#1c2028" d="M549 172L553 171L552 182L548 182ZM558 203L562 202L562 213L558 214ZM546 250L550 249L550 261L546 262ZM554 261L558 260L558 272L554 273ZM562 272L566 271L567 283L563 284ZM539 300L543 299L543 311L539 312ZM555 297L559 296L559 309L555 309ZM547 310L551 310L551 322L547 323ZM555 309L559 309L560 321L555 322ZM555 322L560 321L560 334L556 334ZM560 334L564 333L564 346L560 347Z"/>
<path fill="#1c202c" d="M553 171L556 170L556 181L552 182ZM545 183L548 182L548 193L544 194ZM559 192L563 191L562 202L558 203ZM551 204L555 203L554 214L550 215ZM543 216L547 216L547 227L543 228ZM558 225L562 225L562 236L558 237ZM562 236L566 236L566 247L562 248ZM554 249L558 248L558 260L554 261ZM558 248L562 248L562 260L558 260ZM550 261L554 261L554 273L550 273ZM554 273L558 272L559 284L555 285ZM507 295L511 294L511 306L507 307ZM563 284L567 283L567 295L563 296ZM507 307L511 306L511 319L507 320ZM535 301L539 300L539 312L535 313ZM543 299L547 298L547 310L543 311ZM547 298L551 297L551 310L547 310ZM563 296L567 295L568 308L563 308ZM551 310L555 309L555 322L551 322ZM560 321L564 321L564 333L560 334ZM506 344L510 344L510 356L506 357ZM564 333L568 333L568 346L564 346ZM568 333L572 332L573 345L568 346ZM560 347L564 346L564 359L560 360ZM564 346L568 346L569 359L564 359ZM568 346L573 345L573 358L569 359ZM552 360L556 360L556 373L552 374ZM564 359L569 359L569 372L565 372ZM560 373L565 372L565 385L560 386ZM569 372L573 371L573 385L569 385ZM570 412L574 412L574 425L570 426Z"/>
<path fill="#141820" d="M556 170L560 170L559 181L556 181ZM558 214L562 213L562 225L558 225Z"/>
<path fill="#585c68" d="M509 195L512 193L511 204L508 205ZM498 230L502 228L501 240L498 241ZM512 236L516 235L516 247L512 248ZM461 334L465 333L464 345L460 346ZM450 350L453 349L452 361L449 362ZM468 343L472 342L471 354L467 356ZM470 380L473 378L473 391L469 392ZM442 401L446 400L445 413L441 414ZM457 396L461 395L460 408L456 409Z"/>
<path fill="#646870" d="M512 193L516 192L515 203L511 204ZM497 252L501 251L500 262L497 263ZM480 327L483 326L483 338L479 339Z"/>
<path fill="#70747c" d="M516 192L519 191L518 202L515 203ZM510 215L514 214L513 225L509 226ZM458 335L461 334L460 346L457 347Z"/>
<path fill="#686c74" d="M519 191L523 190L522 201L518 202ZM515 203L518 202L517 213L514 214Z"/>
<path fill="#4c505c" d="M523 190L526 189L526 200L522 201ZM490 254L493 253L493 265L489 266ZM460 346L464 345L463 357L460 358ZM464 345L468 343L467 356L463 357ZM475 341L479 339L479 352L475 353ZM445 364L449 362L448 374L444 376ZM470 367L474 366L473 378L470 380ZM432 405L435 404L434 416L431 418ZM461 395L465 394L464 407L460 408ZM469 458L473 457L472 470L468 472Z"/>
<path fill="#3c404c" d="M526 189L530 188L529 199L526 200ZM520 234L524 233L523 244L520 246ZM507 283L511 282L511 294L507 295ZM480 303L484 302L484 314L480 315ZM484 302L488 301L488 313L484 314ZM468 331L472 330L472 342L468 343ZM487 325L491 324L491 336L487 337ZM482 351L486 350L486 362L482 363ZM441 377L444 376L443 388L440 390ZM444 376L448 374L447 387L443 388ZM458 383L462 382L461 395L457 396ZM473 378L477 377L477 390L473 391ZM481 376L485 375L485 388L481 389ZM473 391L477 390L476 403L472 404ZM424 420L427 419L426 432L422 433ZM472 404L476 403L475 416L471 417ZM480 402L484 401L483 414L479 415ZM475 429L479 428L478 442L474 443ZM409 463L413 462L411 475L408 476ZM446 451L450 450L449 463L445 465ZM477 455L481 455L480 468L476 469Z"/>
<path fill="#282c38" d="M530 188L534 187L533 198L529 199ZM537 185L541 184L540 195L537 196ZM519 292L523 291L523 304L519 304ZM527 290L531 289L531 302L527 303ZM519 304L523 304L523 316L519 317ZM531 302L535 301L535 313L531 314ZM499 322L503 321L502 333L499 334ZM495 335L499 334L498 346L494 347ZM523 328L527 327L527 340L522 341ZM518 342L522 341L522 353L518 354ZM518 354L522 353L522 366L518 367ZM526 352L531 352L530 364L526 365ZM531 352L535 351L535 363L530 364ZM535 351L539 350L539 363L535 363ZM543 349L547 348L547 361L543 362ZM552 348L556 347L556 360L552 360ZM518 367L522 366L522 379L518 380ZM522 366L526 365L526 378L522 379ZM535 363L539 363L539 376L535 377ZM539 363L543 362L543 375L539 376ZM556 360L560 360L560 373L556 373ZM509 382L513 381L513 394L509 395ZM552 374L556 373L556 386L552 387ZM556 373L560 373L560 386L556 386ZM500 397L505 396L504 409L500 410ZM513 394L517 393L517 407L513 407ZM534 390L539 389L539 402L534 403ZM556 386L560 386L561 399L556 400ZM521 406L526 405L526 418L521 419ZM534 403L539 402L539 416L534 417ZM543 401L547 401L548 414L543 415ZM565 399L569 398L570 412L565 413ZM504 423L508 422L508 435L503 436ZM521 419L526 418L525 432L521 433ZM539 416L543 415L543 429L539 429ZM538 443L543 442L543 457L538 457ZM552 484L557 484L558 498L553 499ZM571 483L576 482L577 497L572 497Z"/>
<path fill="#141824" d="M552 182L556 181L555 192L551 193ZM555 192L559 192L558 203L555 203ZM562 248L566 247L566 259L562 260Z"/>
<path fill="#181c24" d="M556 181L559 181L559 192L555 192ZM555 203L558 203L558 214L554 214ZM550 215L554 214L554 226L550 226ZM562 225L566 224L566 236L562 236ZM554 237L558 237L558 248L554 249ZM558 260L562 260L562 272L558 272ZM562 260L566 259L566 271L562 272ZM551 285L555 285L555 297L551 297ZM559 284L563 284L563 296L559 296Z"/>
<path fill="#5c606c" d="M508 205L511 204L510 215L507 216ZM503 217L507 216L506 227L502 228ZM485 278L489 277L488 289L484 290ZM484 290L488 289L488 301L484 302ZM452 361L456 360L455 372L452 373ZM440 390L443 388L442 401L439 402ZM443 388L447 387L446 400L442 401ZM451 386L454 385L453 397L450 399Z"/>
<path fill="#6c707c" d="M511 204L515 203L514 214L510 215ZM507 216L510 215L509 226L506 227ZM501 240L505 238L505 250L501 251ZM501 251L505 250L504 261L500 262ZM473 318L476 316L476 329L472 330ZM460 358L463 357L463 370L459 371ZM447 387L451 386L450 399L446 400ZM449 411L453 410L452 423L448 424Z"/>
<path fill="#545860" d="M522 201L526 200L525 211L521 212ZM512 248L516 247L515 258L512 259ZM508 260L512 259L511 271L507 272Z"/>
<path fill="#40444c" d="M526 200L529 199L528 210L525 211ZM525 211L528 210L528 221L524 222Z"/>
<path fill="#282c34" d="M529 199L533 198L532 209L528 210ZM537 196L540 195L540 206L536 207ZM540 195L544 194L543 205L540 206ZM543 205L547 204L547 216L543 216ZM528 221L532 220L531 231L527 232ZM531 231L535 230L535 241L531 242ZM539 229L543 228L543 239L539 240ZM527 267L531 266L531 277L527 278ZM515 293L519 292L519 304L515 305ZM523 291L527 290L527 303L523 304ZM539 287L543 286L543 299L539 300ZM539 312L543 311L543 323L539 324ZM543 311L547 310L547 323L543 323ZM543 323L547 323L547 335L543 336ZM527 340L531 339L531 352L526 352ZM531 339L535 338L535 351L531 352ZM539 337L543 336L543 349L539 350Z"/>
<path fill="#30343c" d="M533 198L537 196L536 207L532 209ZM528 210L532 209L532 220L528 221ZM523 244L527 243L527 255L523 256ZM527 255L531 254L531 266L527 267ZM523 268L527 267L527 278L523 279ZM519 280L523 279L523 291L519 292ZM492 300L495 299L495 311L491 312ZM491 324L495 323L495 335L491 336ZM498 346L502 345L502 358L498 359Z"/>
<path fill="#181c28" d="M548 193L551 193L551 204L547 204ZM554 214L558 214L558 225L554 226ZM546 238L550 238L550 249L546 250ZM558 237L562 236L562 248L558 248ZM550 249L554 249L554 261L550 261ZM558 272L562 272L563 284L559 284ZM507 320L511 319L510 331L506 332ZM563 308L568 308L568 320L564 321ZM510 331L514 330L514 343L510 344ZM556 334L560 334L560 347L556 347ZM569 359L573 358L573 371L569 372Z"/>
<path fill="#20242c" d="M551 193L555 192L555 203L551 204ZM540 206L543 205L543 216L539 217ZM535 219L539 217L539 229L535 230ZM550 238L554 237L554 249L550 249ZM542 251L546 250L546 262L542 262ZM538 264L542 262L542 274L538 275ZM542 262L546 262L546 274L542 274ZM538 275L542 274L543 286L539 287ZM546 274L550 273L551 285L547 286ZM543 286L547 286L547 298L543 299ZM555 285L559 284L559 296L555 297ZM515 305L519 304L519 317L515 318ZM523 316L527 315L527 327L523 328ZM564 321L568 320L568 333L564 333ZM535 338L539 337L539 350L535 351ZM543 336L547 335L547 348L543 349Z"/>
<path fill="#444854" d="M499 219L503 217L502 228L498 230ZM503 285L507 283L507 295L503 296ZM428 406L432 405L431 418L427 419ZM427 419L431 418L429 431L426 432ZM436 441L439 440L438 453L434 455ZM443 439L447 438L446 451L442 452Z"/>
<path fill="#5c6068" d="M514 214L517 213L517 224L513 225ZM517 213L521 212L520 223L517 224ZM513 225L517 224L516 235L512 236ZM493 253L497 252L497 263L493 265ZM505 250L508 249L508 260L504 261ZM508 249L512 248L512 259L508 260ZM497 263L500 262L500 274L496 275ZM481 280L485 278L484 290L481 291ZM477 293L481 291L480 303L477 305Z"/>
<path fill="#484c54" d="M521 212L525 211L524 222L520 223ZM491 243L494 242L493 253L490 254Z"/>
<path fill="#242834" d="M547 204L551 204L550 215L547 216ZM543 228L547 227L546 238L543 239ZM527 243L531 242L531 254L527 255ZM539 240L543 239L542 251L538 252ZM543 239L546 238L546 250L542 251ZM531 254L535 253L534 265L531 266ZM538 252L542 251L542 262L538 264ZM534 265L538 264L538 275L534 276ZM531 277L534 276L535 288L531 289ZM547 286L551 285L551 297L547 298ZM515 318L519 317L519 329L514 330ZM527 315L531 314L531 326L527 327ZM499 334L502 333L502 345L498 346ZM502 333L506 332L506 344L502 345ZM514 330L519 329L518 342L514 343ZM519 329L523 328L522 341L518 342ZM527 327L531 326L531 339L527 340ZM547 323L551 322L551 335L547 335ZM551 322L555 322L556 334L551 335ZM502 345L506 344L506 357L502 358ZM510 344L514 343L514 355L510 356ZM522 341L527 340L526 352L522 353ZM551 335L556 334L556 347L552 348ZM522 353L526 352L526 365L522 366ZM505 370L510 369L509 382L505 383ZM510 369L514 368L513 381L509 382ZM514 368L518 367L518 380L513 381ZM530 364L535 363L535 377L530 377ZM543 362L547 361L547 374L543 375ZM505 383L509 382L509 395L505 396ZM522 379L526 378L526 392L521 392ZM526 378L530 377L530 391L526 392ZM530 377L535 377L534 390L530 391ZM543 375L547 374L547 387L543 388ZM517 393L521 392L521 406L517 407ZM526 392L530 391L530 404L526 405ZM530 391L534 390L534 403L530 404ZM560 386L565 385L565 399L561 399ZM565 385L569 385L569 398L565 399ZM508 408L513 407L512 421L508 422ZM517 407L521 406L521 419L517 420ZM526 405L530 404L530 418L526 418ZM539 402L543 401L543 415L539 416ZM561 413L565 413L565 426L561 427ZM530 431L534 430L534 444L529 445ZM556 427L561 427L561 441L556 441ZM552 456L556 455L557 469L552 470ZM556 455L561 455L561 469L557 469ZM570 454L575 453L575 468L570 468Z"/>
<path fill="#686c78" d="M506 227L509 226L509 237L505 238ZM498 241L501 240L501 251L497 252ZM455 372L459 371L458 383L454 385Z"/>
<path fill="#484c58" d="M517 224L520 223L520 234L516 235ZM516 235L520 234L520 246L516 247ZM507 272L511 271L511 282L507 283ZM475 353L479 352L478 364L474 366ZM437 379L441 377L440 390L436 391ZM474 366L478 364L477 377L473 378ZM462 382L466 381L465 394L461 395ZM450 399L453 397L453 410L449 411ZM465 394L469 392L468 405L464 407ZM434 416L438 415L437 428L433 429ZM440 427L444 426L443 439L439 440Z"/>
<path fill="#404450" d="M520 223L524 222L524 233L520 234ZM512 259L515 258L515 270L511 271ZM476 316L480 315L480 327L476 329ZM449 362L452 361L452 373L448 374ZM436 391L440 390L439 402L435 404ZM453 397L457 396L456 409L453 410ZM441 414L445 413L444 426L440 427ZM464 407L468 405L467 418L463 420ZM428 444L432 443L431 456L427 457ZM455 435L458 434L458 448L454 449ZM470 431L475 429L474 443L470 444ZM450 450L454 449L452 462L449 463ZM429 469L433 468L432 482L428 483ZM433 468L437 467L436 481L432 482ZM441 466L445 465L443 478L439 479ZM459 488L463 487L463 501L458 502Z"/>
<path fill="#545864" d="M494 242L498 241L497 252L493 253ZM486 267L489 266L489 277L485 278ZM504 273L507 272L507 283L503 285ZM466 381L470 380L469 392L465 394ZM460 408L464 407L463 420L459 421Z"/>
<path fill="#646874" d="M509 237L512 236L512 248L508 249Z"/>
<path fill="#444850" d="M516 247L520 246L519 257L515 258Z"/>
<path fill="#2c303c" d="M520 246L523 244L523 256L519 257ZM523 279L527 278L527 290L523 291ZM499 298L503 296L503 308L499 310ZM511 294L515 293L515 305L511 306ZM495 323L499 322L499 334L495 335ZM490 361L494 360L493 373L489 374ZM494 360L498 359L497 372L493 373ZM502 358L506 357L505 370L501 371ZM489 374L493 373L493 386L489 387ZM526 365L530 364L530 377L526 378ZM493 386L497 385L496 398L492 399ZM484 401L488 400L487 413L483 414ZM509 395L513 394L513 407L508 408ZM500 410L504 409L504 423L500 424ZM513 407L517 407L517 420L512 421ZM512 435L516 434L516 448L512 448ZM525 432L530 431L529 445L525 446ZM498 451L503 450L502 464L498 465ZM512 448L516 448L516 462L511 462ZM516 448L520 447L520 461L516 462Z"/>
<path fill="#383c48" d="M515 258L519 257L519 269L515 270ZM480 315L484 314L483 326L480 327ZM453 349L457 347L456 360L452 361ZM483 338L487 337L486 350L482 351ZM439 402L442 401L441 414L438 415ZM489 387L493 386L492 399L488 400ZM422 433L426 432L425 445L421 446ZM426 432L429 431L428 444L425 445ZM466 432L470 431L470 444L466 445ZM479 428L483 427L482 441L478 442ZM483 427L487 426L486 440L482 441ZM431 456L434 455L433 468L429 469ZM486 454L490 453L489 467L485 468Z"/>
<path fill="#60646c" d="M489 277L492 276L492 288L488 289ZM496 287L499 286L499 298L495 299Z"/>
<path fill="#6c7078" d="M496 275L500 274L499 286L496 287Z"/>
<path fill="#707480" d="M500 274L504 273L503 285L499 286ZM488 289L492 288L492 300L488 301ZM456 360L460 358L459 371L455 372Z"/>
<path fill="#3c4048" d="M511 271L515 270L515 281L511 282ZM511 282L515 281L515 293L511 294ZM477 305L480 303L480 315L476 316Z"/>
<path fill="#343840" d="M515 270L519 269L519 280L515 281ZM491 312L495 311L495 323L491 324Z"/>
<path fill="#747884" d="M492 288L496 287L495 299L492 300ZM472 330L476 329L475 341L472 342ZM472 342L475 341L475 353L471 354ZM466 368L470 367L470 380L466 381Z"/>
<path fill="#383c44" d="M488 301L492 300L491 312L488 313ZM491 336L495 335L494 347L490 349Z"/>
<path fill="#7c808c" d="M463 357L467 356L466 368L463 370Z"/>
<path fill="#585c6c" d="M448 374L452 373L451 386L447 387ZM453 410L456 409L455 422L452 423Z"/>
<path fill="#6c7080" d="M452 373L455 372L454 385L451 386Z"/>
<path fill="#787c88" d="M459 371L463 370L462 382L458 383Z"/>
<path fill="#5c6070" d="M463 370L466 368L466 381L462 382ZM438 415L441 414L440 427L437 428Z"/>
<path fill="#444858" d="M433 392L436 391L435 404L432 405ZM452 423L455 422L455 435L451 436ZM413 462L416 461L415 474L411 475ZM427 457L431 456L429 469L426 471ZM415 474L418 473L417 486L413 488ZM449 463L452 462L451 476L447 477ZM400 492L403 491L402 505L398 506ZM428 483L432 482L431 496L427 497ZM432 482L436 481L435 494L431 496ZM460 474L464 473L463 487L459 488ZM398 506L402 505L401 518L397 520ZM402 505L405 503L404 517L401 518ZM416 500L419 499L419 513L415 514ZM427 497L431 496L430 510L426 511ZM435 494L439 493L438 507L434 508ZM451 490L455 489L454 503L450 504ZM467 485L471 484L471 499L467 500ZM422 512L426 511L426 525L422 526ZM426 511L430 510L430 524L426 525ZM386 538L390 537L389 551L385 552ZM393 535L396 534L396 548L392 550ZM403 531L407 530L406 545L403 546ZM407 530L411 529L410 544L406 545ZM414 528L418 527L417 541L414 542ZM430 524L434 523L433 537L429 538ZM379 555L382 554L381 568L378 569ZM392 550L396 548L395 562L391 564ZM410 544L414 542L413 557L409 558ZM414 542L417 541L417 556L413 557ZM433 537L437 536L437 550L433 551ZM445 534L449 533L449 547L445 548ZM375 571L378 569L377 584L374 585ZM391 564L395 562L394 577L390 578ZM398 561L402 560L401 575L397 576ZM425 554L429 553L428 567L424 568ZM429 553L433 551L432 566L428 567ZM437 550L441 549L440 564L436 565ZM377 584L380 582L379 597L376 598ZM380 582L383 581L382 596L379 597ZM387 580L390 578L389 593L386 594ZM397 576L401 575L400 589L396 590ZM401 575L405 574L404 588L400 589ZM405 574L408 573L408 587L404 588ZM412 572L416 570L415 585L411 586ZM366 602L369 601L368 616L365 617ZM369 601L373 600L371 614L368 616ZM376 598L379 597L378 612L375 613ZM379 597L382 596L381 611L378 612ZM389 593L393 592L392 607L388 608ZM400 589L404 588L403 603L399 604ZM368 616L371 614L370 629L367 630ZM371 614L375 613L373 628L370 629ZM381 611L385 609L384 624L380 626ZM388 608L392 607L391 622L387 623ZM399 604L403 603L402 618L398 619ZM361 633L364 632L363 647L359 648ZM367 630L370 629L369 644L366 646ZM370 629L373 628L372 643L369 644ZM373 628L377 627L376 642L372 643ZM380 626L384 624L383 640L379 641ZM391 622L395 620L394 636L390 637ZM369 644L372 643L371 659L368 660ZM376 642L379 641L378 656L375 657ZM382 655L385 654L384 669L380 671ZM400 649L404 648L404 664L400 665Z"/>
<path fill="#242838" d="M501 371L505 370L505 383L501 384ZM530 404L534 403L534 417L530 418ZM561 399L565 399L565 413L561 413ZM517 420L521 419L521 433L516 434ZM526 418L530 418L530 431L525 432ZM552 414L556 413L556 427L552 428ZM516 434L521 433L520 447L516 448ZM534 430L539 429L538 443L534 444ZM543 429L548 428L547 442L543 442ZM520 447L525 446L525 460L520 461ZM525 446L529 445L529 459L525 460ZM543 442L547 442L547 456L543 457ZM556 441L561 441L561 455L556 455ZM566 440L570 440L570 454L566 454ZM570 440L575 439L575 453L570 454ZM534 458L538 457L538 472L534 472ZM543 457L547 456L547 470L543 471ZM547 456L552 456L552 470L547 470ZM561 455L566 454L566 469L561 469ZM543 471L547 470L548 485L543 485ZM548 485L552 484L553 499L548 499ZM563 513L568 512L569 527L564 528ZM550 529L555 528L556 544L551 544ZM560 528L564 528L565 543L560 543ZM569 527L574 527L575 542L570 542ZM546 545L551 544L551 559L547 560ZM547 560L551 559L552 575L547 575ZM544 608L549 607L549 623L544 624ZM564 606L569 605L570 621L565 622ZM549 623L555 622L555 639L550 639ZM545 640L550 639L552 656L546 656ZM560 638L565 638L567 654L562 655ZM552 656L557 655L558 672L553 672Z"/>
<path fill="#545868" d="M435 404L439 402L438 415L434 416Z"/>
<path fill="#606474" d="M446 400L450 399L449 411L445 413Z"/>
<path fill="#282c3c" d="M497 385L501 384L500 397L496 398ZM535 377L539 376L539 389L534 390ZM505 396L509 395L508 408L504 409ZM547 387L552 387L552 400L547 401ZM500 424L504 423L503 436L499 437ZM508 422L512 421L512 435L508 435ZM521 433L525 432L525 446L520 447ZM548 428L552 428L552 441L547 442ZM507 449L512 448L511 462L507 463ZM534 444L538 443L538 457L534 458ZM552 441L556 441L556 455L552 456ZM520 461L525 460L524 474L520 475ZM524 474L529 473L529 488L525 488ZM538 472L543 471L543 485L538 486ZM547 470L552 470L552 484L548 485ZM552 470L557 469L557 484L552 484ZM561 469L566 469L566 483L562 483ZM543 485L548 485L548 499L544 500ZM525 503L530 502L530 517L526 518ZM553 499L558 498L559 513L554 514ZM572 497L577 497L578 512L573 512ZM521 518L526 518L526 532L521 533ZM530 517L535 516L536 531L531 532ZM535 516L540 515L540 530L536 531ZM521 533L526 532L527 548L522 548ZM536 531L540 530L541 545L536 546ZM564 528L569 527L570 542L565 543ZM541 545L546 545L547 560L542 561ZM556 544L560 543L561 559L556 559ZM565 543L570 542L571 558L566 558ZM570 542L575 542L576 557L571 558ZM517 564L522 564L523 579L518 580ZM532 562L537 561L537 577L533 577ZM537 561L542 561L542 576L537 577ZM542 561L547 560L547 575L542 576ZM551 559L556 559L557 574L552 575ZM556 559L561 559L562 574L557 574ZM566 558L571 558L572 573L567 574ZM533 577L537 577L538 592L533 593ZM557 574L562 574L563 590L558 590ZM562 574L567 574L568 589L563 590ZM518 595L523 595L524 610L519 611ZM538 592L543 592L544 608L539 608ZM553 590L558 590L559 606L554 606ZM568 589L573 589L574 605L569 605ZM519 611L524 610L524 626L519 627ZM549 607L554 606L555 622L549 623ZM554 606L559 606L560 622L555 622ZM559 606L564 606L565 622L560 622ZM569 605L574 605L575 621L570 621ZM524 626L529 626L529 642L524 642ZM560 622L565 622L565 638L560 638ZM524 642L529 642L531 658L526 659ZM529 642L535 641L536 658L531 658ZM565 638L571 638L572 654L567 654Z"/>
<path fill="#1c2030" d="M539 376L543 375L543 388L539 389ZM543 388L547 387L547 401L543 401ZM569 398L574 398L574 412L570 412ZM570 426L574 425L575 439L570 440Z"/>
<path fill="#484c5c" d="M431 418L434 416L433 429L429 431ZM470 444L474 443L473 457L469 458ZM409 502L412 501L411 515L408 516ZM463 487L467 485L467 500L463 501ZM391 523L394 521L393 535L390 537ZM397 520L401 518L400 532L396 534ZM442 506L446 505L446 519L442 520ZM383 540L386 538L385 552L382 554ZM388 565L391 564L390 578L387 580ZM441 549L445 548L445 563L440 564ZM371 586L374 585L373 600L369 601ZM375 613L378 612L377 627L373 628ZM358 634L361 633L359 648L356 649Z"/>
<path fill="#787c8c" d="M445 413L449 411L448 424L444 426Z"/>
<path fill="#646878" d="M456 409L460 408L459 421L455 422Z"/>
<path fill="#2c3040" d="M492 399L496 398L496 411L492 412ZM512 421L517 420L516 434L512 435ZM503 450L507 449L507 463L502 464ZM547 442L552 441L552 456L547 456ZM529 459L534 458L534 472L529 473ZM538 457L543 457L543 471L538 472ZM529 473L534 472L534 487L529 488ZM534 472L538 472L538 486L534 487ZM557 469L561 469L562 483L557 484ZM566 469L570 468L571 483L566 483ZM502 492L506 492L507 506L502 507ZM534 487L538 486L539 501L534 501ZM538 486L543 485L544 500L539 501ZM557 484L562 483L563 498L558 498ZM562 483L566 483L567 498L563 498ZM566 483L571 483L572 497L567 498ZM498 508L502 507L502 521L498 522ZM502 507L507 506L507 521L502 521ZM507 506L511 505L512 520L507 521ZM520 504L525 503L526 518L521 518ZM534 501L539 501L540 515L535 516ZM548 499L553 499L554 514L549 514ZM502 521L507 521L507 536L503 536ZM516 519L521 518L521 533L517 534ZM526 518L530 517L531 532L526 532ZM544 515L549 514L550 529L545 529ZM568 512L573 512L574 527L569 527ZM573 512L578 512L579 527L574 527ZM512 535L517 534L517 549L512 550ZM540 530L545 529L546 545L541 545ZM508 551L512 550L513 565L508 566ZM512 550L517 549L517 564L513 565ZM517 549L522 548L522 564L517 564ZM522 548L527 548L527 563L522 564ZM536 546L541 545L542 561L537 561ZM560 543L565 543L566 558L561 559ZM503 566L508 566L508 581L503 582ZM508 566L513 565L513 580L508 581ZM513 565L517 564L518 580L513 580ZM561 559L566 558L567 574L562 574ZM571 558L576 557L577 573L572 573ZM484 585L489 584L489 600L485 600ZM494 583L499 583L499 598L494 599ZM499 583L503 582L504 597L499 598ZM523 579L528 578L528 594L523 595ZM528 578L533 577L533 593L528 594ZM547 575L552 575L553 590L548 591ZM552 575L557 574L558 590L553 590ZM567 574L572 573L573 589L568 589ZM513 596L518 595L519 611L514 612ZM533 593L538 592L539 608L534 609ZM563 590L568 589L569 605L564 606ZM494 615L499 614L499 630L494 630ZM509 612L514 612L514 628L509 628ZM514 612L519 611L519 627L514 628ZM529 610L534 609L534 625L529 626ZM534 609L539 608L539 624L534 625ZM539 608L544 608L544 624L539 624ZM509 628L514 628L514 644L509 644ZM519 627L524 626L524 642L519 643ZM544 624L549 623L550 639L545 640ZM555 622L560 622L560 638L555 639ZM565 622L570 621L571 638L565 638ZM494 647L499 646L500 662L495 663ZM509 644L514 644L516 660L510 661ZM519 643L524 642L526 659L521 660ZM550 639L555 639L557 655L552 656ZM557 655L562 655L564 671L558 672ZM562 655L567 654L569 671L564 671Z"/>
<path fill="#202434" d="M539 389L543 388L543 401L539 402ZM556 413L561 413L561 427L556 427ZM565 426L570 426L570 440L566 440ZM529 445L534 444L534 458L529 459ZM561 441L566 440L566 454L561 455ZM566 454L570 454L570 468L566 469ZM570 468L575 468L576 482L571 483Z"/>
<path fill="#383c4c" d="M419 434L422 433L421 446L418 447ZM418 447L421 446L420 459L416 461ZM439 440L443 439L442 452L438 453ZM447 438L451 436L450 450L446 451ZM416 461L420 459L418 473L415 474ZM423 458L427 457L426 471L422 472ZM466 445L470 444L469 458L465 459ZM486 440L491 439L490 453L486 454ZM422 472L426 471L424 484L421 485ZM426 471L429 469L428 483L424 484ZM437 467L441 466L439 479L436 481ZM456 461L461 460L460 474L455 475ZM481 455L486 454L485 468L480 468ZM436 481L439 479L439 493L435 494ZM447 477L451 476L451 490L447 491ZM464 473L468 472L467 485L463 487ZM476 469L480 468L480 482L476 483ZM489 467L493 466L493 480L489 481ZM484 482L489 481L489 495L484 496ZM489 481L493 480L493 494L489 495ZM415 514L419 513L418 527L414 528ZM419 513L422 512L422 526L418 527ZM446 505L450 504L450 518L446 519ZM458 502L463 501L462 515L458 516ZM480 497L484 496L484 510L480 511ZM484 496L489 495L489 509L484 510ZM493 494L497 493L498 508L493 508ZM454 517L458 516L458 531L454 532ZM462 515L467 514L467 528L462 530ZM467 514L471 513L471 527L467 528ZM493 508L498 508L498 522L493 523ZM403 546L406 545L405 559L402 560ZM406 545L410 544L409 558L405 559ZM449 533L454 532L453 546L449 547ZM458 531L462 530L462 544L458 545ZM462 530L467 528L466 543L462 544ZM467 528L471 527L471 542L466 543ZM498 522L502 521L503 536L498 537ZM405 559L409 558L408 573L405 574ZM453 546L458 545L457 560L453 561ZM475 541L480 540L480 555L475 556ZM489 539L493 538L494 553L489 554ZM416 570L420 569L419 584L415 585ZM420 569L424 568L423 583L419 584ZM462 559L466 558L466 573L462 574ZM484 554L489 554L489 569L484 570ZM503 551L508 551L508 566L503 566ZM393 592L396 590L396 605L392 607ZM408 587L411 586L411 601L407 602ZM427 582L432 581L431 596L427 597ZM432 581L436 580L435 595L431 596ZM444 578L448 577L448 592L444 593ZM462 574L466 573L466 588L461 589ZM466 573L471 572L471 587L466 588ZM411 601L415 600L414 616L410 617ZM431 596L435 595L435 610L431 612ZM439 594L444 593L443 609L439 610ZM453 591L457 590L457 606L452 607ZM471 587L475 586L475 602L470 603ZM475 586L480 586L480 601L475 602ZM410 617L414 616L413 631L409 632ZM426 613L431 612L430 627L426 628ZM443 609L448 608L448 623L443 624ZM466 604L470 603L470 618L466 619ZM475 602L480 601L480 617L475 618ZM480 601L485 600L485 616L480 617ZM485 600L489 600L489 615L485 616ZM489 600L494 599L494 615L489 615ZM499 598L504 597L504 613L499 614ZM409 632L413 631L412 647L408 648ZM426 628L430 627L429 643L425 644ZM448 623L452 622L452 638L447 639ZM452 622L457 621L456 637L452 638ZM461 620L466 619L465 635L461 636ZM466 619L470 618L470 634L465 635ZM475 618L480 617L480 633L475 633ZM397 650L400 649L400 665L396 666ZM408 648L412 647L412 662L408 663ZM421 645L425 644L424 660L420 660ZM443 640L447 639L447 655L442 656ZM461 636L465 635L465 651L460 652ZM465 635L470 634L470 650L465 651ZM475 633L480 633L480 649L475 649ZM489 631L494 630L494 647L489 647ZM499 630L504 629L504 645L499 646ZM451 654L456 653L457 669L452 670ZM460 652L465 651L466 667L461 668ZM465 651L470 650L471 667L466 667ZM470 650L475 649L476 666L471 667ZM475 649L480 649L481 665L476 666Z"/>
<path fill="#404454" d="M429 431L433 429L432 443L428 444ZM433 429L437 428L436 441L432 443ZM421 446L425 445L423 458L420 459ZM432 443L436 441L434 455L431 456ZM451 436L455 435L454 449L450 450ZM420 459L423 458L422 472L418 473ZM434 455L438 453L437 467L433 468ZM458 448L462 446L461 460L456 461ZM462 446L466 445L465 459L461 460ZM408 476L411 475L410 489L406 490ZM418 473L422 472L421 485L417 486ZM445 465L449 463L447 477L443 478ZM461 460L465 459L464 473L460 474ZM473 457L477 455L476 469L472 470ZM403 491L406 490L405 503L402 505ZM406 490L410 489L409 502L405 503ZM413 488L417 486L416 500L412 501ZM451 476L455 475L455 489L451 490ZM455 475L460 474L459 488L455 489ZM395 508L398 506L397 520L394 521ZM405 503L409 502L408 516L404 517ZM442 492L447 491L446 505L442 506ZM387 524L391 523L390 537L386 538ZM401 518L404 517L403 531L400 532ZM404 517L408 516L407 530L403 531ZM430 510L434 508L434 523L430 524ZM438 507L442 506L442 520L438 521ZM463 501L467 500L467 514L462 515ZM390 537L393 535L392 550L389 551ZM396 534L400 532L399 547L396 548ZM400 532L403 531L403 546L399 547ZM411 529L414 528L414 542L410 544ZM418 527L422 526L421 540L417 541ZM438 521L442 520L441 535L437 536ZM450 518L454 517L454 532L449 533ZM458 516L462 515L462 530L458 531ZM382 554L385 552L384 567L381 568ZM385 552L389 551L388 565L384 567ZM389 551L392 550L391 564L388 565ZM396 548L399 547L398 561L395 562ZM417 541L421 540L421 555L417 556ZM421 540L425 539L425 554L421 555ZM429 538L433 537L433 551L429 553ZM378 569L381 568L380 582L377 584ZM384 567L388 565L387 580L383 581ZM395 562L398 561L397 576L394 577ZM402 560L405 559L405 574L401 575ZM433 551L437 550L436 565L432 566ZM374 585L377 584L376 598L373 600ZM394 577L397 576L396 590L393 592ZM428 567L432 566L432 581L427 582ZM432 566L436 565L436 580L432 581ZM436 565L440 564L440 579L436 580ZM440 564L445 563L444 578L440 579ZM386 594L389 593L388 608L385 609ZM396 590L400 589L399 604L396 605ZM411 586L415 585L415 600L411 601ZM415 585L419 584L419 599L415 600ZM419 584L423 583L423 598L419 599ZM362 618L365 617L364 632L361 633ZM365 617L368 616L367 630L364 632ZM385 609L388 608L387 623L384 624ZM392 607L396 605L395 620L391 622ZM396 605L399 604L398 619L395 620ZM407 602L411 601L410 617L406 618ZM427 597L431 596L431 612L426 613ZM435 595L439 594L439 610L435 610ZM384 624L387 623L386 638L383 640ZM387 623L391 622L390 637L386 638ZM402 618L406 618L405 633L401 634ZM406 618L410 617L409 632L405 633ZM366 646L369 644L368 660L364 661ZM383 640L386 638L385 654L382 655ZM386 638L390 637L389 653L385 654ZM394 636L398 635L397 650L393 651ZM398 635L401 634L400 649L397 650ZM405 633L409 632L408 648L404 648ZM413 631L417 630L417 646L412 647ZM422 629L426 628L425 644L421 645ZM385 654L389 653L388 668L384 669ZM389 653L393 651L392 667L388 668Z"/>
<path fill="#3c4050" d="M437 428L440 427L439 440L436 441ZM444 426L448 424L447 438L443 439ZM414 449L418 447L416 461L413 462ZM425 445L428 444L427 457L423 458ZM458 434L462 433L462 446L458 448ZM462 433L466 432L466 445L462 446ZM442 452L446 451L445 465L441 466ZM405 477L408 476L406 490L403 491ZM411 475L415 474L413 488L410 489ZM452 462L456 461L455 475L451 476ZM465 459L469 458L468 472L464 473ZM410 489L413 488L412 501L409 502ZM417 486L421 485L419 499L416 500ZM421 485L424 484L423 498L419 499ZM424 484L428 483L427 497L423 498ZM439 479L443 478L442 492L439 493ZM443 478L447 477L447 491L442 492ZM472 470L476 469L476 483L471 484ZM412 501L416 500L415 514L411 515ZM419 499L423 498L422 512L419 513ZM423 498L427 497L426 511L422 512ZM431 496L435 494L434 508L430 510ZM439 493L442 492L442 506L438 507ZM447 491L451 490L450 504L446 505ZM455 489L459 488L458 502L454 503ZM394 521L397 520L396 534L393 535ZM408 516L411 515L411 529L407 530ZM411 515L415 514L414 528L411 529ZM434 508L438 507L438 521L434 523ZM450 504L454 503L454 517L450 518ZM454 503L458 502L458 516L454 517ZM467 500L471 499L471 513L467 514ZM422 526L426 525L425 539L421 540ZM426 525L430 524L429 538L425 539ZM446 519L450 518L449 533L445 534ZM480 511L484 510L484 525L480 526ZM399 547L403 546L402 560L398 561ZM425 539L429 538L429 553L425 554ZM454 532L458 531L458 545L453 546ZM381 568L384 567L383 581L380 582ZM409 558L413 557L412 572L408 573ZM413 557L417 556L416 570L412 572ZM417 556L421 555L420 569L416 570ZM421 555L425 554L424 568L420 569ZM445 548L449 547L449 562L445 563ZM449 547L453 546L453 561L449 562ZM466 543L471 542L471 557L466 558ZM383 581L387 580L386 594L382 596ZM390 578L394 577L393 592L389 593ZM408 573L412 572L411 586L408 587ZM424 568L428 567L427 582L423 583ZM445 563L449 562L448 577L444 578ZM449 562L453 561L453 576L448 577ZM373 600L376 598L375 613L371 614ZM382 596L386 594L385 609L381 611ZM404 588L408 587L407 602L403 603ZM423 583L427 582L427 597L423 598ZM436 580L440 579L439 594L435 595ZM453 576L457 575L457 590L453 591ZM457 575L462 574L461 589L457 590ZM378 612L381 611L380 626L377 627ZM403 603L407 602L406 618L402 618ZM415 600L419 599L418 615L414 616ZM419 599L423 598L422 614L418 615ZM448 592L453 591L452 607L448 608ZM466 588L471 587L470 603L466 604ZM364 632L367 630L366 646L363 647ZM377 627L380 626L379 641L376 642ZM395 620L398 619L398 635L394 636ZM398 619L402 618L401 634L398 635ZM414 616L418 615L417 630L413 631ZM418 615L422 614L422 629L417 630ZM431 612L435 610L434 626L430 627ZM435 610L439 610L439 625L434 626ZM439 610L443 609L443 624L439 625ZM457 606L461 605L461 620L457 621ZM461 605L466 604L466 619L461 620ZM359 648L363 647L361 662L358 663ZM363 647L366 646L364 661L361 662ZM372 643L376 642L375 657L371 659ZM379 641L383 640L382 655L378 656ZM390 637L394 636L393 651L389 653ZM401 634L405 633L404 648L400 649ZM417 630L422 629L421 645L417 646ZM443 624L448 623L447 639L443 640ZM378 656L382 655L380 671L377 672ZM393 651L397 650L396 666L392 667ZM404 648L408 648L408 663L404 664ZM412 647L417 646L416 661L412 662ZM417 646L421 645L420 660L416 661ZM429 643L434 642L433 658L429 659ZM434 642L438 641L438 657L433 658ZM438 641L443 640L442 656L438 657ZM456 637L461 636L460 652L456 653Z"/>
<path fill="#303444" d="M467 418L471 417L470 431L466 432ZM471 417L475 416L475 429L470 431ZM475 416L479 415L479 428L475 429ZM479 415L483 414L483 427L479 428ZM487 413L492 412L491 425L487 426ZM492 412L496 411L495 424L491 425ZM487 426L491 425L491 439L486 440ZM474 443L478 442L477 455L473 457ZM491 439L495 438L494 452L490 453ZM499 437L503 436L503 450L498 451ZM503 436L508 435L507 449L503 450ZM508 435L512 435L512 448L507 449ZM485 468L489 467L489 481L484 482ZM516 462L520 461L520 475L515 476ZM525 460L529 459L529 473L524 474ZM493 480L497 479L497 493L493 494ZM497 479L502 478L502 492L497 493ZM520 475L524 474L525 488L520 489ZM475 497L480 497L480 511L475 512ZM489 495L493 494L493 508L489 509ZM506 492L511 491L511 505L507 506ZM511 491L515 490L516 504L511 505ZM515 490L520 489L520 504L516 504ZM525 488L529 488L530 502L525 503ZM484 510L489 509L489 524L484 525ZM511 505L516 504L516 519L512 520ZM530 502L534 501L535 516L530 517ZM539 501L544 500L544 515L540 515ZM544 500L548 499L549 514L544 515ZM558 498L563 498L563 513L559 513ZM563 498L567 498L568 512L563 513ZM567 498L572 497L573 512L568 512ZM475 526L480 526L480 540L475 541ZM512 520L516 519L517 534L512 535ZM540 515L544 515L545 529L540 530ZM549 514L554 514L555 528L550 529ZM554 514L559 513L560 528L555 528ZM559 513L563 513L564 528L560 528ZM484 539L489 539L489 554L484 554ZM493 538L498 537L498 552L494 553ZM503 536L507 536L508 551L503 551ZM507 536L512 535L512 550L508 551ZM517 534L521 533L522 548L517 549ZM526 532L531 532L531 547L527 548ZM531 532L536 531L536 546L531 547ZM545 529L550 529L551 544L546 545ZM555 528L560 528L560 543L556 544ZM453 561L457 560L457 575L453 576ZM466 558L471 557L471 572L466 573ZM527 548L531 547L532 562L527 563ZM551 544L556 544L556 559L551 559ZM471 572L475 571L475 586L471 587ZM480 570L484 570L484 585L480 586ZM484 570L489 569L489 584L484 585ZM494 568L498 567L499 583L494 583ZM522 564L527 563L528 578L523 579ZM527 563L532 562L533 577L528 578ZM480 586L484 585L485 600L480 601ZM489 584L494 583L494 599L489 600ZM508 581L513 580L513 596L509 597ZM513 580L518 580L518 595L513 596ZM518 580L523 579L523 595L518 595ZM537 577L542 576L543 592L538 592ZM542 576L547 575L548 591L543 592ZM448 608L452 607L452 622L448 623ZM494 599L499 598L499 614L494 615ZM523 595L528 594L529 610L524 610ZM543 592L548 591L549 607L544 608ZM548 591L553 590L554 606L549 607ZM558 590L563 590L564 606L559 606ZM457 621L461 620L461 636L456 637ZM470 618L475 618L475 633L470 634ZM485 616L489 615L489 631L485 632ZM489 615L494 615L494 630L489 631ZM499 614L504 613L504 629L499 630ZM480 633L485 632L484 648L480 649ZM494 630L499 630L499 646L494 647ZM504 629L509 628L509 644L504 645ZM514 628L519 627L519 643L514 644ZM529 626L534 625L535 641L529 642ZM534 625L539 624L540 640L535 641ZM539 624L544 624L545 640L540 640ZM456 653L460 652L461 668L457 669ZM480 649L484 648L486 664L481 665ZM489 647L494 647L495 663L490 664ZM499 646L504 645L505 661L500 662ZM514 644L519 643L521 660L516 660ZM535 641L540 640L541 657L536 658ZM540 640L545 640L546 656L541 657ZM555 639L560 638L562 655L557 655Z"/>
<path fill="#343848" d="M496 411L500 410L500 424L495 424ZM495 424L500 424L499 437L495 438ZM438 453L442 452L441 466L437 467ZM454 449L458 448L456 461L452 462ZM478 442L482 441L481 455L477 455ZM468 472L472 470L471 484L467 485ZM480 468L485 468L484 482L480 482ZM493 466L498 465L497 479L493 480ZM498 465L502 464L502 478L497 479ZM502 464L507 463L506 477L502 478ZM476 483L480 482L480 497L475 497ZM480 482L484 482L484 496L480 497ZM502 478L506 477L506 492L502 492ZM506 477L511 476L511 491L506 492ZM511 476L515 476L515 490L511 491ZM471 499L475 497L475 512L471 513ZM497 493L502 492L502 507L498 508ZM520 489L525 488L525 503L520 504ZM529 488L534 487L534 501L530 502ZM442 520L446 519L445 534L441 535ZM471 513L475 512L475 526L471 527ZM475 512L480 511L480 526L475 526ZM489 509L493 508L493 523L489 524ZM516 504L520 504L521 518L516 519ZM441 535L445 534L445 548L441 549ZM471 527L475 526L475 541L471 542ZM480 526L484 525L484 539L480 540ZM484 525L489 524L489 539L484 539ZM489 524L493 523L493 538L489 539ZM493 523L498 522L498 537L493 538ZM507 521L512 520L512 535L507 536ZM458 545L462 544L462 559L457 560ZM462 544L466 543L466 558L462 559ZM471 542L475 541L475 556L471 557ZM480 540L484 539L484 554L480 555ZM498 537L503 536L503 551L498 552ZM457 560L462 559L462 574L457 575ZM471 557L475 556L475 571L471 572ZM475 556L480 555L480 570L475 571ZM480 555L484 554L484 570L480 570ZM489 554L494 553L494 568L489 569ZM494 553L498 552L498 567L494 568ZM498 552L503 551L503 566L498 567ZM531 547L536 546L537 561L532 562ZM440 579L444 578L444 593L439 594ZM448 577L453 576L453 591L448 592ZM475 571L480 570L480 586L475 586ZM489 569L494 568L494 583L489 584ZM498 567L503 566L503 582L499 583ZM423 598L427 597L426 613L422 614ZM444 593L448 592L448 608L443 609ZM457 590L461 589L461 605L457 606ZM461 589L466 588L466 604L461 605ZM503 582L508 581L509 597L504 597ZM422 614L426 613L426 628L422 629ZM452 607L457 606L457 621L452 622ZM470 603L475 602L475 618L470 618ZM504 597L509 597L509 612L504 613ZM509 597L513 596L514 612L509 612ZM528 594L533 593L534 609L529 610ZM430 627L434 626L434 642L429 643ZM434 626L439 625L438 641L434 642ZM439 625L443 624L443 640L438 641ZM480 617L485 616L485 632L480 633ZM504 613L509 612L509 628L504 629ZM524 610L529 610L529 626L524 626ZM425 644L429 643L429 659L424 660ZM447 639L452 638L451 654L447 655ZM452 638L456 637L456 653L451 654ZM470 634L475 633L475 649L470 650ZM485 632L489 631L489 647L484 648ZM442 656L447 655L447 671L443 672ZM447 655L451 654L452 670L447 671ZM484 648L489 647L490 664L486 664ZM504 645L509 644L510 661L505 661Z"/>
<path fill="#4c5060" d="M471 484L476 483L475 497L471 499ZM434 523L438 521L437 536L433 537Z"/>
<path fill="#505464" d="M437 536L441 535L441 549L437 550Z"/>
<path fill="#3c404c" d="M509 161L512 159L510 184L506 185Z"/>
<path fill="#545860" d="M512 159L516 158L513 183L510 184Z"/>
<path fill="#707480" d="M516 158L519 157L517 182L513 183Z"/>
<path fill="#646874" d="M519 157L523 156L520 180L517 182Z"/>
<path fill="#50545c" d="M523 156L526 155L524 179L520 180Z"/>
<path fill="#444854" d="M526 155L530 154L527 178L524 179Z"/>
<path fill="#343844" d="M530 154L533 152L531 177L527 178Z"/>
<path fill="#2c3038" d="M533 152L537 151L535 176L531 177Z"/>
<path fill="#242834" d="M537 151L540 150L538 175L535 176Z"/>
<path fill="#242830" d="M540 150L544 149L542 174L538 175ZM544 149L547 148L545 172L542 174Z"/>
<path fill="#181c24" d="M547 148L551 147L549 172L545 172ZM551 147L554 146L553 171L549 172ZM554 146L558 146L556 170L553 171Z"/>
</g>
<path d="M611 373L650 376L703 384L740 394L765 404L780 414L780 417L765 409L740 400L703 391L650 389L611 389Z" fill="#35353b"/>
<path d="M611 370.5L650 372.5L703 380L740 389L770 401L785 412L796 426L806 446" stroke="#0a0a0d" stroke-width="5" fill="none"/>
<path d="M404 436L385 448L366 463L352 480L342 500L336 520L340 528L348 508L358 490L372 474L390 460L404 452Z" fill="#30333d"/>
<path d="M403 430L382 442L362 457L347 475L337 498L331 522L334 522L343 497L356 476L374 458L392 446L404 438Z" fill="#0e0e12"/>
</g>
<path fill="#2c2c32" d="M405.4 242.3L403.3 240.9L408.0 236.1L408.9 236.7ZM408.9 236.7L406.8 235.4L411.5 230.6L412.4 231.2ZM412.4 231.2L410.3 229.8L415.0 225.1L415.9 225.6ZM415.9 225.7L414.0 224.1L419.2 220.0L420.1 220.7ZM420.0 220.7L418.3 219.0L424.0 215.4L424.7 216.2ZM424.7 216.2L423.0 214.4L428.7 210.8L429.4 211.6ZM429.4 211.6L427.7 209.8L433.3 206.2L434.1 207.0ZM434.1 207.0L432.4 205.2L438.3 201.9L439.0 202.7ZM439.0 202.8L437.5 200.8L443.6 197.9L444.2 198.8ZM444.2 198.8L442.7 196.8L448.8 194.0L449.5 194.9ZM449.5 194.9L448.0 192.9L454.1 190.1L454.7 191.0ZM454.7 191.0L453.2 189.0L459.3 186.2L460.0 187.0ZM460.0 187.0L458.5 185.0L464.6 182.3L465.2 183.2ZM465.2 183.2L463.9 181.0L470.3 178.9L470.9 179.9ZM470.9 179.9L469.6 177.7L476.0 175.6L476.5 176.6ZM476.5 176.6L475.4 174.4L481.8 172.7L482.3 173.6ZM482.3 173.7L481.4 171.3L488.0 170.3L488.4 171.3ZM488.4 171.3L487.3 169.0L493.8 167.4L494.3 168.4ZM494.2 168.4L493.4 166.0L499.9 165.0L500.3 166.1ZM500.3 166.1L499.7 163.6L506.3 163.4L506.6 164.4ZM506.6 164.4L506.0 162.0L512.7 161.7L513.0 162.8ZM513.0 162.8L512.3 160.4L519.0 159.9L519.3 161.0ZM519.3 161.0L518.6 158.6L525.3 158.1L525.6 159.1ZM525.6 159.1L524.9 156.7L531.5 156.2L531.9 157.3ZM531.9 157.3L531.2 154.9L537.9 154.5L538.2 155.5ZM538.2 155.5L537.5 153.1L544.2 152.7L544.5 153.8ZM544.6 153.7L543.4 151.5L549.6 150.0L550.1 151.0ZM550.1 150.9L548.9 148.8L554.9 147.0L555.4 147.9ZM555.3 148.0L554.7 145.6L561.4 145.4L561.7 146.4ZM561.6 146.5L561.4 144.0L568.0 144.8L568.1 145.9ZM568.1 145.9L567.9 143.5L574.6 144.3L574.7 145.4ZM574.7 145.4L574.5 142.9L581.1 143.8L581.2 144.9ZM581.2 144.9L581.0 142.4L587.6 143.3L587.7 144.4ZM587.7 144.4L587.5 141.9L594.2 142.7L594.3 143.8ZM594.3 143.8L594.1 141.4L600.7 142.2L600.8 143.3ZM600.7 143.3L600.8 140.8L607.3 142.4L607.3 143.5ZM607.3 143.5L607.4 141.0L613.9 142.9L613.8 144.0ZM613.8 144.0L614.0 141.5L620.4 143.3L620.3 144.4ZM620.3 144.4L620.6 141.9L626.9 144.2L626.8 145.3ZM626.8 145.3L627.2 142.8L633.4 145.2L633.3 146.3ZM633.3 146.3L633.6 143.8L639.9 146.2L639.7 147.3ZM639.7 147.3L640.2 144.9L646.3 147.5L646.1 148.6ZM646.1 148.6L646.6 146.2L652.8 148.9L652.5 150.0ZM652.5 150.0L653.2 147.6L659.0 150.9L658.7 152.0ZM658.7 152.0L659.6 149.6L665.2 153.3L664.8 154.3ZM664.8 154.3L665.7 152.0L671.3 155.7L670.9 156.7ZM670.8 156.7L672.0 154.5L677.1 158.9L676.5 159.9ZM676.5 159.9L677.9 157.7L682.6 162.5L682.0 163.4ZM682.0 163.4L683.4 161.3L688.1 166.0L687.5 167.0ZM687.4 166.9L689.1 165.1L693.0 170.5L692.3 171.3ZM692.2 171.3L694.0 169.5L697.7 175.1L697.0 175.9ZM697.0 175.9L698.7 174.1L702.4 179.6L701.7 180.4ZM701.6 180.4L703.6 178.8L706.6 184.8L705.7 185.5ZM705.7 185.4L707.8 184.1L710.2 190.3L709.3 190.9ZM709.3 190.9L711.4 189.5L713.8 195.8L712.9 196.4ZM712.9 196.4L715.0 195.0L717.3 201.3L716.4 201.9ZM716.3 201.9L718.6 200.8L720.1 207.4L719.1 207.8ZM719.1 207.8L721.3 206.8L722.8 213.3L721.8 213.8ZM721.8 213.8L724.1 212.7L725.5 219.3L724.5 219.7ZM724.5 219.7L726.8 218.7L728.1 225.3L727.1 225.7ZM727.1 225.7L729.5 224.8L730.5 231.4L729.5 231.8ZM729.5 231.8L731.8 230.9L732.9 237.6L731.8 237.9ZM731.8 237.9L734.2 237.0L735.2 243.7L734.2 244.1ZM734.2 244.1L736.5 243.2L737.6 249.8L736.5 250.2Z"/>
</svg>
<div class="a" style="left:108px;top:100px;width:52px;height:19px;background:#5d9cf2;border-radius:0 0 4px 0"></div>
<div class="t" style="left:114px;top:103px;font-size:12px;color:#111">室外*</div>
<div class="a" style="left:150px;top:102px;width:1px;height:15px;background:#2a4a80"></div>
<svg class="a" style="left:152px;top:106px" width="7" height="6" viewBox="0 0 7 6"><path d="M0 0H7L3.5 5Z" fill="#111"/></svg>
<svg class="a" style="left:133px;top:583px" width="45" height="30" viewBox="0 0 45 30"><path d="M8 2V22H38" stroke="#8a8a8a" stroke-width="1" fill="none"/><path d="M5 24L10 20" stroke="#8a8a8a"/><text x="38" y="26" font-size="7" fill="#8a8a8a" font-family="Liberation Sans">Y</text></svg>
<div class="a" style="left:108px;top:641px;width:772px;height:23px;background:#e4e4e9"></div>
<div class="a" style="left:107px;top:644px;width:40px;height:19px;background:#f2f3f7"></div>
<div class="t" style="left:117px;top:648px;font-size:13px;color:#222">室外</div>
<div class="t" style="left:156px;top:648px;font-size:13px;color:#8a8a8e">Top</div>
<div class="t" style="left:192px;top:648px;font-size:13px;color:#8a8a8e">Front</div>
<div class="t" style="left:235px;top:648px;font-size:13px;color:#8a8a8e">Right</div>
<svg class="a" style="left:280px;top:648px" width="11" height="11" viewBox="0 0 11 11"><path d="M4 1H7V4H10V7H7V10H4V7H1V4H4Z" fill="none" stroke="#8a8a8e"/></svg>
<div class="a" style="left:880px;top:98px;width:4px;height:566px;background:#dedee2"></div>
<div class="a" style="left:884px;top:98px;width:180px;height:566px;background:#ececf0"></div>
<div class="a" style="left:1042px;top:152px;width:22px;height:512px;background:#e0e0e4"></div>
<div class="t" style="left:888px;top:102px;font-size:12px;color:#7a7a7e">图层</div>
<svg class="a" style="left:1046px;top:101px" width="12" height="12" viewBox="0 0 14 14"><path d="M11.3 6.1L12.9 6.2L12.9 7.8L11.3 7.9L10.7 9.4L11.8 10.6L10.6 11.8L9.4 10.7L7.9 11.3L7.8 12.9L6.2 12.9L6.1 11.3L4.6 10.7L3.4 11.8L2.2 10.6L3.3 9.4L2.7 7.9L1.1 7.8L1.1 6.2L2.7 6.1L3.3 4.6L2.2 3.4L3.4 2.2L4.6 3.3L6.1 2.7L6.2 1.1L7.8 1.1L7.9 2.7L9.4 3.3L10.6 2.2L11.8 3.4L10.7 4.6ZM9.2 7A2.2 2.2 0 1 0 4.8 7A2.2 2.2 0 1 0 9.2 7Z" fill="#d6d6da" fill-rule="evenodd"/></svg>
<div class="a" style="left:884px;top:116px;width:180px;height:1px;background:#e2e2e6"></div>
<svg class="a" style="left:885px;top:126px" width="16" height="16" viewBox="0 0 16 16"><path d="M2 6L8 3L14 5L13 12L8 14L2 12Z" fill="#3a5bd0"/><path d="M2 5L8 2L14 4L8 8Z" fill="#e8502a"/><path d="M10 9H16M13 6V12" stroke="#111" stroke-width="2"/></svg>
<svg class="a" style="left:905px;top:126px" width="16" height="16" viewBox="0 0 16 16"><rect x="2" y="2" width="6" height="6" fill="none" stroke="#bbb"/><rect x="7" y="7" width="7" height="7" rx="3" fill="none" stroke="#bbb"/></svg>
<svg class="a" style="left:925px;top:126px" width="16" height="16" viewBox="0 0 16 16"><path d="M3 3L13 13M13 3L3 13" stroke="#c4c4c8" stroke-width="2.2"/></svg>
<svg class="a" style="left:945px;top:126px" width="16" height="16" viewBox="0 0 16 16"><circle cx="8" cy="9" r="5.5" fill="none" stroke="#c4c4c8" stroke-width="1.3"/><path d="M5 4V9M8 3V9M11 4V9" stroke="#c4c4c8"/></svg>
<svg class="a" style="left:965px;top:126px" width="16" height="16" viewBox="0 0 16 16"><path d="M2 11L8 4L14 11Z" fill="none" stroke="#c4c4c8" stroke-width="1.3"/></svg>
<svg class="a" style="left:985px;top:126px" width="16" height="16" viewBox="0 0 16 16"><path d="M2 5L8 12L14 5Z" fill="none" stroke="#c4c4c8" stroke-width="1.3"/></svg>
<svg class="a" style="left:1005px;top:126px" width="16" height="16" viewBox="0 0 16 16"><path d="M11 2L4 8L11 14Z" fill="none" stroke="#c4c4c8" stroke-width="1.3"/></svg>
<svg class="a" style="left:1025px;top:126px" width="16" height="16" viewBox="0 0 16 16"><path d="M1 2H15L10 8V14H6V8Z" fill="#2a4ab8" stroke="#112" stroke-width=".8"/></svg>
<svg class="a" style="left:1045px;top:126px" width="16" height="16" viewBox="0 0 16 16"><path d="M2 7L8 4L14 6L13 13L8 15L2 13Z" fill="#3a5bd0"/><path d="M2 9L8 12L14 9V7L8 10L2 7Z" fill="#fff"/><path d="M2 6L8 2L14 4L8 8Z" fill="#e8502a"/></svg>
<svg class="a" style="left:885px;top:145px" width="16" height="16" viewBox="0 0 16 16"><rect x="2" y="2" width="12" height="12" fill="#fff" stroke="#555"/><path d="M2 5H14M2 8H14M2 11H14M5 2V14M8 2V14M11 2V14" stroke="#777" stroke-width=".8"/></svg>
<svg class="a" style="left:905px;top:145px" width="16" height="16" viewBox="0 0 16 16"><path d="M2 4H14M2 8H14M2 12H14" stroke="#111" stroke-width="2"/></svg>
<svg class="a" style="left:925px;top:145px" width="16" height="16" viewBox="0 0 16 16"><circle cx="8" cy="8" r="7" fill="#2050c8"/><path d="M5.5 6Q5.5 3.5 8 3.5Q10.5 3.5 10.5 6Q10.5 7.5 8.5 8.5V10" stroke="#fff" stroke-width="1.8" fill="none"/><circle cx="8.5" cy="12.3" r="1.1" fill="#fff"/></svg>
<svg class="a" style="left:1046px;top:159px" width="14" height="14" viewBox="0 0 20 20"><path d="M10.00 1.00A9 9 0 0 1 14.50 2.21L12.25 6.10A4.5 4.5 0 0 0 10.00 5.50Z" fill="hsl(0,95%,50%)" stroke="hsl(0,95%,50%)" stroke-width=".4"/><path d="M14.50 2.21A9 9 0 0 1 17.79 5.50L13.90 7.75A4.5 4.5 0 0 0 12.25 6.10Z" fill="hsl(30,95%,50%)" stroke="hsl(30,95%,50%)" stroke-width=".4"/><path d="M17.79 5.50A9 9 0 0 1 19.00 10.00L14.50 10.00A4.5 4.5 0 0 0 13.90 7.75Z" fill="hsl(60,95%,50%)" stroke="hsl(60,95%,50%)" stroke-width=".4"/><path d="M19.00 10.00A9 9 0 0 1 17.79 14.50L13.90 12.25A4.5 4.5 0 0 0 14.50 10.00Z" fill="hsl(90,95%,50%)" stroke="hsl(90,95%,50%)" stroke-width=".4"/><path d="M17.79 14.50A9 9 0 0 1 14.50 17.79L12.25 13.90A4.5 4.5 0 0 0 13.90 12.25Z" fill="hsl(120,95%,50%)" stroke="hsl(120,95%,50%)" stroke-width=".4"/><path d="M14.50 17.79A9 9 0 0 1 10.00 19.00L10.00 14.50A4.5 4.5 0 0 0 12.25 13.90Z" fill="hsl(150,95%,50%)" stroke="hsl(150,95%,50%)" stroke-width=".4"/><path d="M10.00 19.00A9 9 0 0 1 5.50 17.79L7.75 13.90A4.5 4.5 0 0 0 10.00 14.50Z" fill="hsl(180,95%,50%)" stroke="hsl(180,95%,50%)" stroke-width=".4"/><path d="M5.50 17.79A9 9 0 0 1 2.21 14.50L6.10 12.25A4.5 4.5 0 0 0 7.75 13.90Z" fill="hsl(210,95%,50%)" stroke="hsl(210,95%,50%)" stroke-width=".4"/><path d="M2.21 14.50A9 9 0 0 1 1.00 10.00L5.50 10.00A4.5 4.5 0 0 0 6.10 12.25Z" fill="hsl(240,95%,50%)" stroke="hsl(240,95%,50%)" stroke-width=".4"/><path d="M1.00 10.00A9 9 0 0 1 2.21 5.50L6.10 7.75A4.5 4.5 0 0 0 5.50 10.00Z" fill="hsl(270,95%,50%)" stroke="hsl(270,95%,50%)" stroke-width=".4"/><path d="M2.21 5.50A9 9 0 0 1 5.50 2.21L7.75 6.10A4.5 4.5 0 0 0 6.10 7.75Z" fill="hsl(300,95%,50%)" stroke="hsl(300,95%,50%)" stroke-width=".4"/><path d="M5.50 2.21A9 9 0 0 1 10.00 1.00L10.00 5.50A4.5 4.5 0 0 0 7.75 6.10Z" fill="hsl(330,95%,50%)" stroke="hsl(330,95%,50%)" stroke-width=".4"/><circle cx="10" cy="10" r="4.5" fill="#fff"/><circle cx="10" cy="10" r="9" fill="none" stroke="#555" stroke-width=".6"/></svg>
<svg class="a" style="left:1046px;top:192px" width="14" height="14" viewBox="0 0 14 14"><rect x="1" y="1" width="12" height="9" fill="#ddd" stroke="#111" stroke-width="1.6"/><rect x="4" y="11" width="6" height="2" fill="#111"/></svg>
<svg class="a" style="left:1045px;top:224px" width="15" height="15" viewBox="0 0 15 15"><rect x="1" y="1" width="13" height="13" fill="#6a86c8" stroke="#345"/><circle cx="7.5" cy="7.5" r="5" fill="#2a58c8" stroke="#fff" stroke-width=".8"/><path d="M5.5 6Q5.5 4 7.5 4Q9.5 4 9.5 6Q9.5 7 8 8" stroke="#fff" stroke-width="1.3" fill="none"/></svg>
<div class="a" style="left:885px;top:169px;width:155px;height:22px;background:#fff;border:1px solid #dadade;border-radius:11px"></div>
<svg class="a" style="left:889px;top:174px" width="12" height="12" viewBox="0 0 12 12"><circle cx="5" cy="5" r="3.8" fill="none" stroke="#666" stroke-width="1.2"/><path d="M8 8L11 11" stroke="#666" stroke-width="1.3"/></svg>
<div class="t" style="left:902px;top:174px;font-size:12px;color:#888">搜索</div>
<div class="a" style="left:884px;top:197px;width:157px;height:466px;background:#fff"></div>
<div class="t" style="left:888px;top:202px;font-size:12px;color:#333">图层</div>
<div class="a" style="left:884px;top:216px;width:140px;height:1px;background:#ececf0"></div>
<div class="a" style="left:992px;top:197px;width:1px;height:19px;background:#ececf0"></div>
<div class="a" style="left:1011px;top:197px;width:1px;height:19px;background:#ececf0"></div>
<div class="lt" style="left:899px;top:221.0px;font-weight:bold;color:#222;">预设图层</div>
<div class="a" style="left:887px;top:236.0px;width:137px;height:1px;background:#efeff2"></div>
<svg class="a" style="left:995px;top:221.0px" width="14" height="12" viewBox="0 0 14 12"><path d="M1 6L5 10L13 1" stroke="#222" stroke-width="1.5" fill="none"/></svg>
<div class="lt" style="left:899px;top:240.6px;">建筑</div>
<div class="a" style="left:887px;top:255.6px;width:137px;height:1px;background:#efeff2"></div>
<svg class="a" style="left:888px;top:243.6px" width="7" height="7" viewBox="0 0 7 7"><path d="M6 0V6H0Z" fill="#333"/></svg>
<svg class="a" style="left:1015px;top:239.6px" width="10" height="14" viewBox="0 0 10 14"><path d="M5 1Q9 1 9 5Q9 7 7 9V11H3V9Q1 7 1 5Q1 1 5 1Z" fill="#f2d020" stroke="#8a6a00" stroke-width="1"/><rect x="3" y="11" width="4" height="2" fill="#8a6a00"/></svg>
<div class="lt" style="left:913px;top:260.1px;">结构</div>
<div class="a" style="left:887px;top:275.1px;width:137px;height:1px;background:#efeff2"></div>
<svg class="a" style="left:1015px;top:259.1px" width="10" height="14" viewBox="0 0 10 14"><path d="M5 1Q9 1 9 5Q9 7 7 9V11H3V9Q1 7 1 5Q1 1 5 1Z" fill="#f2d020" stroke="#8a6a00" stroke-width="1"/><rect x="3" y="11" width="4" height="2" fill="#8a6a00"/></svg>
<div class="lt" style="left:913px;top:279.6px;">楼板</div>
<div class="a" style="left:887px;top:294.6px;width:137px;height:1px;background:#efeff2"></div>
<svg class="a" style="left:1015px;top:278.6px" width="10" height="14" viewBox="0 0 10 14"><path d="M5 1Q9 1 9 5Q9 7 7 9V11H3V9Q1 7 1 5Q1 1 5 1Z" fill="#f2d020" stroke="#8a6a00" stroke-width="1"/><rect x="3" y="11" width="4" height="2" fill="#8a6a00"/></svg>
<div class="lt" style="left:913px;top:299.2px;">轴线</div>
<div class="a" style="left:887px;top:314.2px;width:137px;height:1px;background:#efeff2"></div>
<svg class="a" style="left:1015px;top:298.2px" width="10" height="14" viewBox="0 0 10 14"><path d="M5 1Q9 1 9 5Q9 7 7 9V11H3V9Q1 7 1 5Q1 1 5 1Z" fill="#f2d020" stroke="#8a6a00" stroke-width="1"/><rect x="3" y="11" width="4" height="2" fill="#8a6a00"/></svg>
<div class="lt" style="left:913px;top:318.8px;">基础体量</div>
<div class="a" style="left:887px;top:333.8px;width:137px;height:1px;background:#efeff2"></div>
<svg class="a" style="left:1015px;top:317.8px" width="10" height="14" viewBox="0 0 10 14"><path d="M5 1Q9 1 9 5Q9 7 7 9V11H3V9Q1 7 1 5Q1 1 5 1Z" fill="#6a94e0" stroke="#2a4a8a" stroke-width="1"/><rect x="3" y="11" width="4" height="2" fill="#2a4a8a"/></svg>
<div class="lt" style="left:913px;top:338.3px;">玻璃框</div>
<div class="a" style="left:887px;top:353.3px;width:137px;height:1px;background:#efeff2"></div>
<svg class="a" style="left:1015px;top:337.3px" width="10" height="14" viewBox="0 0 10 14"><path d="M5 1Q9 1 9 5Q9 7 7 9V11H3V9Q1 7 1 5Q1 1 5 1Z" fill="#f2d020" stroke="#8a6a00" stroke-width="1"/><rect x="3" y="11" width="4" height="2" fill="#8a6a00"/></svg>
<div class="lt" style="left:913px;top:357.9px;">栅格</div>
<div class="a" style="left:887px;top:372.9px;width:137px;height:1px;background:#efeff2"></div>
<svg class="a" style="left:1015px;top:356.9px" width="10" height="14" viewBox="0 0 10 14"><path d="M5 1Q9 1 9 5Q9 7 7 9V11H3V9Q1 7 1 5Q1 1 5 1Z" fill="#f2d020" stroke="#8a6a00" stroke-width="1"/><rect x="3" y="11" width="4" height="2" fill="#8a6a00"/></svg>
<div class="lt" style="left:913px;top:377.4px;">glass</div>
<div class="a" style="left:887px;top:392.4px;width:137px;height:1px;background:#efeff2"></div>
<svg class="a" style="left:1015px;top:376.4px" width="10" height="14" viewBox="0 0 10 14"><path d="M5 1Q9 1 9 5Q9 7 7 9V11H3V9Q1 7 1 5Q1 1 5 1Z" fill="#f2d020" stroke="#8a6a00" stroke-width="1"/><rect x="3" y="11" width="4" height="2" fill="#8a6a00"/></svg>
<div class="lt" style="left:913px;top:397.0px;">金属扣件</div>
<div class="a" style="left:887px;top:412.0px;width:137px;height:1px;background:#efeff2"></div>
<svg class="a" style="left:1015px;top:396.0px" width="10" height="14" viewBox="0 0 10 14"><path d="M5 1Q9 1 9 5Q9 7 7 9V11H3V9Q1 7 1 5Q1 1 5 1Z" fill="#f2d020" stroke="#8a6a00" stroke-width="1"/><rect x="3" y="11" width="4" height="2" fill="#8a6a00"/></svg>
<div class="lt" style="left:913px;top:416.5px;">金属扣件连接</div>
<div class="a" style="left:887px;top:431.5px;width:137px;height:1px;background:#efeff2"></div>
<svg class="a" style="left:1015px;top:415.5px" width="10" height="14" viewBox="0 0 10 14"><path d="M5 1Q9 1 9 5Q9 7 7 9V11H3V9Q1 7 1 5Q1 1 5 1Z" fill="#f2d020" stroke="#8a6a00" stroke-width="1"/><rect x="3" y="11" width="4" height="2" fill="#8a6a00"/></svg>
<div class="lt" style="left:913px;top:436.1px;">龙骨</div>
<div class="a" style="left:887px;top:451.1px;width:137px;height:1px;background:#efeff2"></div>
<svg class="a" style="left:1015px;top:435.1px" width="10" height="14" viewBox="0 0 10 14"><path d="M5 1Q9 1 9 5Q9 7 7 9V11H3V9Q1 7 1 5Q1 1 5 1Z" fill="#f2d020" stroke="#8a6a00" stroke-width="1"/><rect x="3" y="11" width="4" height="2" fill="#8a6a00"/></svg>
<div class="lt" style="left:913px;top:455.6px;">次龙骨</div>
<div class="a" style="left:887px;top:470.6px;width:137px;height:1px;background:#efeff2"></div>
<svg class="a" style="left:1015px;top:454.6px" width="10" height="14" viewBox="0 0 10 14"><path d="M5 1Q9 1 9 5Q9 7 7 9V11H3V9Q1 7 1 5Q1 1 5 1Z" fill="#f2d020" stroke="#8a6a00" stroke-width="1"/><rect x="3" y="11" width="4" height="2" fill="#8a6a00"/></svg>
<div class="lt" style="left:913px;top:475.1px;">连廊</div>
<div class="a" style="left:887px;top:490.1px;width:137px;height:1px;background:#efeff2"></div>
<svg class="a" style="left:1015px;top:474.1px" width="10" height="14" viewBox="0 0 10 14"><path d="M5 1Q9 1 9 5Q9 7 7 9V11H3V9Q1 7 1 5Q1 1 5 1Z" fill="#f2d020" stroke="#8a6a00" stroke-width="1"/><rect x="3" y="11" width="4" height="2" fill="#8a6a00"/></svg>
<div class="lt" style="left:913px;top:494.7px;">金属封边</div>
<div class="a" style="left:887px;top:509.7px;width:137px;height:1px;background:#efeff2"></div>
<svg class="a" style="left:1015px;top:493.7px" width="10" height="14" viewBox="0 0 10 14"><path d="M5 1Q9 1 9 5Q9 7 7 9V11H3V9Q1 7 1 5Q1 1 5 1Z" fill="#f2d020" stroke="#8a6a00" stroke-width="1"/><rect x="3" y="11" width="4" height="2" fill="#8a6a00"/></svg>
<div class="lt" style="left:913px;top:514.2px;">中庭竖梃</div>
<div class="a" style="left:887px;top:529.2px;width:137px;height:1px;background:#efeff2"></div>
<svg class="a" style="left:1015px;top:513.2px" width="10" height="14" viewBox="0 0 10 14"><path d="M5 1Q9 1 9 5Q9 7 7 9V11H3V9Q1 7 1 5Q1 1 5 1Z" fill="#f2d020" stroke="#8a6a00" stroke-width="1"/><rect x="3" y="11" width="4" height="2" fill="#8a6a00"/></svg>
<div class="lt" style="left:913px;top:533.8px;">line</div>
<div class="a" style="left:887px;top:548.8px;width:137px;height:1px;background:#efeff2"></div>
<svg class="a" style="left:1015px;top:532.8px" width="10" height="14" viewBox="0 0 10 14"><path d="M5 1Q9 1 9 5Q9 7 7 9V11H3V9Q1 7 1 5Q1 1 5 1Z" fill="#6a94e0" stroke="#2a4a8a" stroke-width="1"/><rect x="3" y="11" width="4" height="2" fill="#2a4a8a"/></svg>
<div class="lt" style="left:899px;top:553.4px;">场地</div>
<div class="a" style="left:887px;top:568.4px;width:137px;height:1px;background:#efeff2"></div>
<svg class="a" style="left:1015px;top:552.4px" width="10" height="14" viewBox="0 0 10 14"><path d="M5 1Q9 1 9 5Q9 7 7 9V11H3V9Q1 7 1 5Q1 1 5 1Z" fill="#f2d020" stroke="#8a6a00" stroke-width="1"/><rect x="3" y="11" width="4" height="2" fill="#8a6a00"/></svg>
<div class="lt" style="left:899px;top:572.9px;">pic</div>
<div class="a" style="left:887px;top:587.9px;width:137px;height:1px;background:#efeff2"></div>
<svg class="a" style="left:888px;top:575.9px" width="7" height="7" viewBox="0 0 7 7"><path d="M6 0V6H0Z" fill="#333"/></svg>
<svg class="a" style="left:1015px;top:571.9px" width="10" height="14" viewBox="0 0 10 14"><path d="M5 1Q9 1 9 5Q9 7 7 9V11H3V9Q1 7 1 5Q1 1 5 1Z" fill="#6a94e0" stroke="#2a4a8a" stroke-width="1"/><rect x="3" y="11" width="4" height="2" fill="#2a4a8a"/></svg>
<div class="lt" style="left:913px;top:592.5px;">section</div>
<div class="a" style="left:887px;top:607.5px;width:137px;height:1px;background:#efeff2"></div>
<svg class="a" style="left:1015px;top:591.5px" width="10" height="14" viewBox="0 0 10 14"><path d="M5 1Q9 1 9 5Q9 7 7 9V11H3V9Q1 7 1 5Q1 1 5 1Z" fill="#6a94e0" stroke="#2a4a8a" stroke-width="1"/><rect x="3" y="11" width="4" height="2" fill="#2a4a8a"/></svg>
<div class="lt" style="left:913px;top:612.0px;">site plan</div>
<div class="a" style="left:887px;top:627.0px;width:137px;height:1px;background:#efeff2"></div>
<svg class="a" style="left:1015px;top:611.0px" width="10" height="14" viewBox="0 0 10 14"><path d="M5 1Q9 1 9 5Q9 7 7 9V11H3V9Q1 7 1 5Q1 1 5 1Z" fill="#6a94e0" stroke="#2a4a8a" stroke-width="1"/><rect x="3" y="11" width="4" height="2" fill="#2a4a8a"/></svg>
<div class="lt" style="left:913px;top:631.5px;">mutiple plan</div>
<svg class="a" style="left:1015px;top:630.5px" width="10" height="14" viewBox="0 0 10 14"><path d="M5 1Q9 1 9 5Q9 7 7 9V11H3V9Q1 7 1 5Q1 1 5 1Z" fill="#d8d040" stroke="#4a5a8a" stroke-width="1"/><rect x="3" y="11" width="4" height="2" fill="#4a5a8a"/></svg>
<div class="a" style="left:1028px;top:224px;width:8px;height:165px;background:#cdcdd1;border-radius:4px"></div>
<div class="a" style="left:884px;top:652px;width:30px;height:7px;background:#cdcdd1;border-radius:4px"></div>
<div class="a" style="left:0;top:664px;width:1064px;height:22px;background:#e6e6ea"></div>
<div class="a" style="left:685px;top:665px;width:59px;height:21px;background:#f3f3f6"></div>
<div class="a" style="left:810px;top:665px;width:109px;height:21px;background:#f3f3f6"></div>
<svg class="a" style="left:4px;top:667px" width="15" height="15" viewBox="0 0 15 15"><rect x="1" y="1" width="13" height="13" fill="#eee" stroke="#666" stroke-width="2"/><rect x="2" y="2" width="4" height="11" fill="#777"/></svg>
<svg class="a" style="left:1041px;top:667px" width="15" height="15" viewBox="0 0 15 15"><rect x="1" y="1" width="13" height="13" fill="#eee" stroke="#666" stroke-width="2"/><rect x="9" y="2" width="4" height="11" fill="#777"/></svg>
<div class="st" style="left:36px;color:#444;">工作平面</div>
<div class="st" style="left:110px;color:#4a4a4e;">X 197.071 Y 9.10709 Z 0</div>
<div class="st" style="left:295px;color:#444;">米</div>
<div class="st" style="left:369px;color:#444;">预设图层</div>
<div class="st" style="left:523px;color:#555;">锁定格点</div>
<div class="st" style="left:587px;color:#555;">正交</div>
<div class="st" style="left:627px;color:#555;">平面模式</div>
<div class="st" style="left:690px;color:#222;font-weight:bold;">物件锁点</div>
<div class="st" style="left:753px;color:#8a8a8e;">智慧轨迹</div>
<div class="st" style="left:817px;color:#222;font-weight:bold;">操作轴 (工作平面)</div>
<div class="st" style="left:945px;color:#444;">自动对齐工作平面</div>
<div class="a" style="left:349px;top:668px;width:13px;height:13px;background:#000"></div>
<svg class="a" style="left:926px;top:667px" width="12" height="15" viewBox="0 0 12 15"><path d="M3 7V5Q3 2 6 2Q9 2 9 5V7" fill="none" stroke="#bbb" stroke-width="1.3"/><rect x="2" y="7" width="8" height="7" rx="1" fill="none" stroke="#bbb" stroke-width="1.2"/></svg>
</body></html>
